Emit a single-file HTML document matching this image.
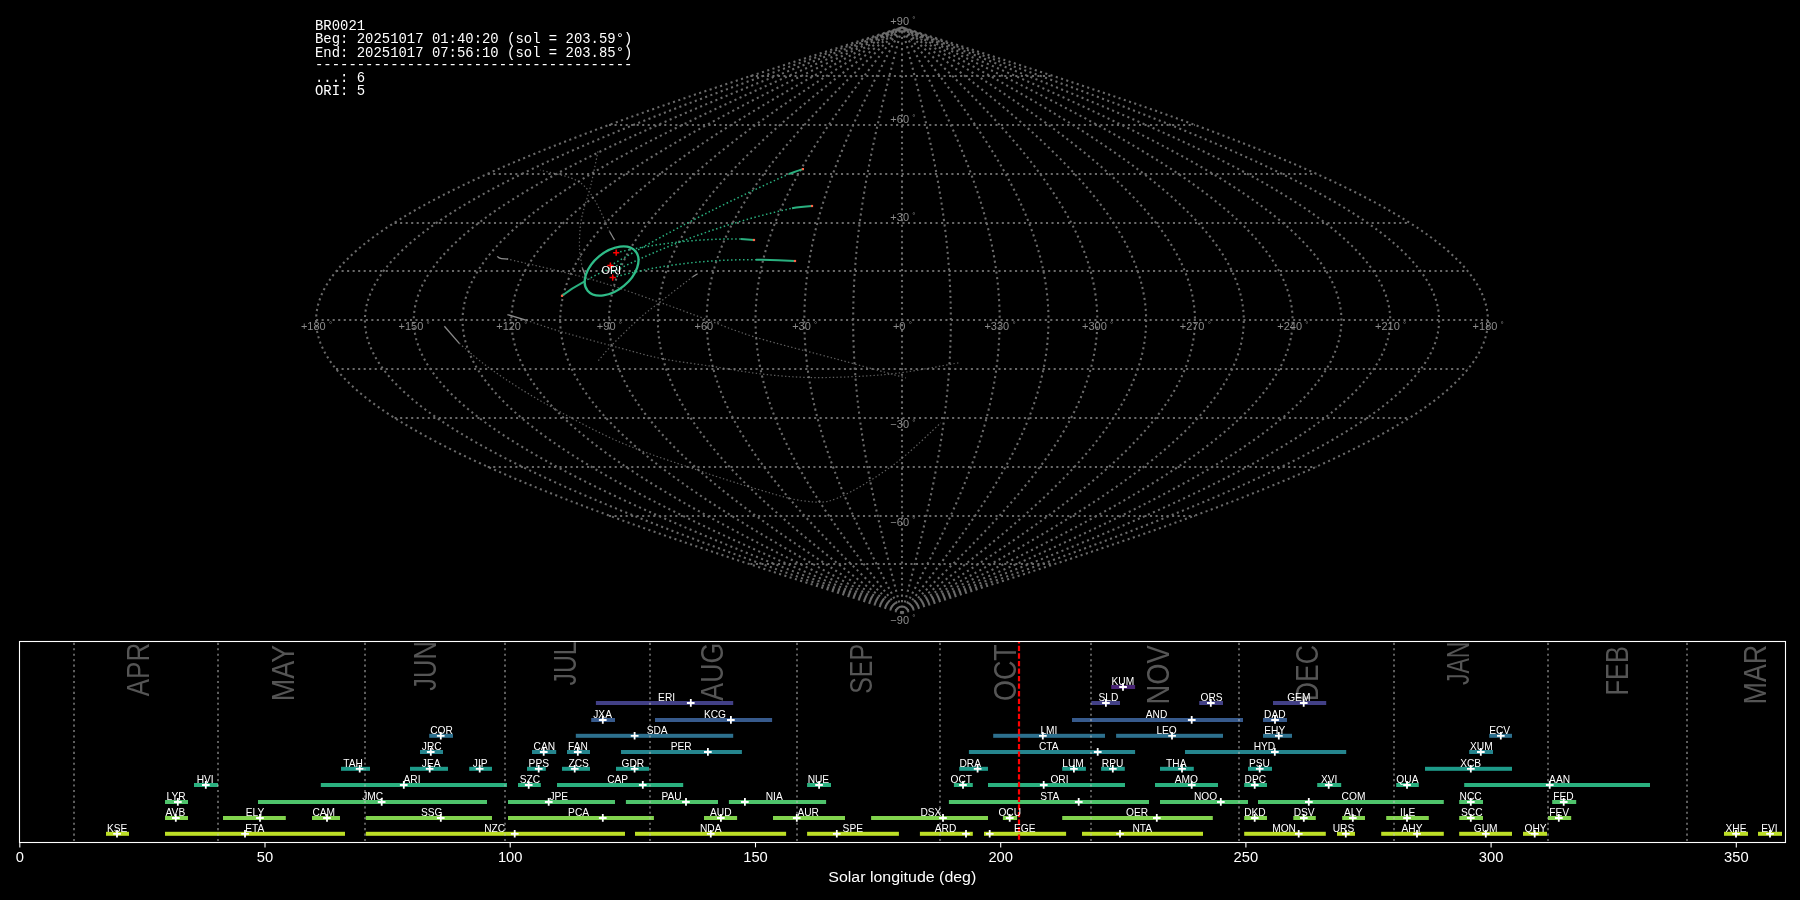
<!DOCTYPE html><html><head><meta charset="utf-8"><style>
html,body{margin:0;padding:0;background:#000;width:1800px;height:900px;overflow:hidden}
svg{display:block;will-change:transform}
.mono{font-family:"Liberation Mono",monospace}
text{font-family:"Liberation Sans",sans-serif}
</style></head><body>
<svg width="1800" height="900" viewBox="0 0 1800 900">
<rect width="1800" height="900" fill="#000"/>
<path d="M902.00,613.20 L907.11,611.57 L912.23,609.94 L917.34,608.32 L922.45,606.69 L927.56,605.06 L932.66,603.43 L937.77,601.81 L942.87,600.18 L947.97,598.55 L953.06,596.92 L958.16,595.30 L963.24,593.67 L968.33,592.04 L973.40,590.41 L978.48,588.79 L983.54,587.16 L988.60,585.53 L993.65,583.90 L998.70,582.28 L1003.74,580.65 L1008.77,579.02 L1013.79,577.39 L1018.81,575.77 L1023.82,574.14 L1028.81,572.51 L1033.80,570.88 L1038.78,569.26 L1043.74,567.63 L1048.70,566.00 L1053.64,564.38 L1058.57,562.75 L1063.50,561.12 L1068.40,559.49 L1073.30,557.87 L1078.18,556.24 L1083.05,554.61 L1087.91,552.98 L1092.75,551.36 L1097.58,549.73 L1102.39,548.10 L1107.19,546.47 L1111.97,544.85 L1116.73,543.22 L1121.48,541.59 L1126.21,539.96 L1130.93,538.34 L1135.63,536.71 L1140.31,535.08 L1144.97,533.45 L1149.61,531.83 L1154.24,530.20 L1158.84,528.57 L1163.43,526.94 L1167.99,525.32 L1172.54,523.69 L1177.06,522.06 L1181.57,520.43 L1186.05,518.81 L1190.51,517.18 L1194.95,515.55 L1199.37,513.92 L1203.76,512.29 L1208.13,510.67 L1212.48,509.04 L1216.80,507.41 L1221.10,505.78 L1225.38,504.16 L1229.63,502.53 L1233.86,500.90 L1238.06,499.27 L1242.23,497.65 L1246.38,496.02 L1250.51,494.39 L1254.60,492.76 L1258.67,491.14 L1262.72,489.51 L1266.73,487.88 L1270.72,486.25 L1274.68,484.63 L1278.61,483.00 L1282.51,481.37 L1286.38,479.75 L1290.23,478.12 L1294.04,476.49 L1297.83,474.86 L1301.58,473.24 L1305.31,471.61 L1309.00,469.98 L1312.66,468.35 L1316.29,466.73 L1319.89,465.10 L1323.46,463.47 L1327.00,461.84 L1330.50,460.22 L1333.97,458.59 L1337.41,456.96 L1340.81,455.33 L1344.18,453.70 L1347.52,452.08 L1350.83,450.45 L1354.09,448.82 L1357.33,447.19 L1360.53,445.57 L1363.70,443.94 L1366.83,442.31 L1369.92,440.69 L1372.98,439.06 L1376.00,437.43 L1378.99,435.80 L1381.94,434.18 L1384.86,432.55 L1387.73,430.92 L1390.57,429.29 L1393.38,427.66 L1396.14,426.04 L1398.87,424.41 L1401.56,422.78 L1404.21,421.15 L1406.83,419.53 L1409.40,417.90 L1411.94,416.27 L1414.44,414.64 L1416.90,413.02 L1419.32,411.39 L1421.70,409.76 L1424.04,408.13 L1426.34,406.51 L1428.60,404.88 L1430.82,403.25 L1433.01,401.62 L1435.15,400.00 L1437.25,398.37 L1439.31,396.74 L1441.32,395.12 L1443.30,393.49 L1445.24,391.86 L1447.13,390.23 L1448.98,388.61 L1450.80,386.98 L1452.57,385.35 L1454.29,383.72 L1455.98,382.10 L1457.62,380.47 L1459.22,378.84 L1460.78,377.21 L1462.30,375.58 L1463.77,373.96 L1465.20,372.33 L1466.59,370.70 L1467.94,369.07 L1469.24,367.45 L1470.50,365.82 L1471.71,364.19 L1472.88,362.56 L1474.01,360.94 L1475.10,359.31 L1476.14,357.68 L1477.14,356.06 L1478.09,354.43 L1479.00,352.80 L1479.86,351.17 L1480.69,349.55 L1481.46,347.92 L1482.20,346.29 L1482.89,344.66 L1483.53,343.04 L1484.13,341.41 L1484.69,339.78 L1485.20,338.15 L1485.67,336.52 L1486.09,334.90 L1486.47,333.27 L1486.81,331.64 L1487.10,330.01 L1487.34,328.39 L1487.54,326.76 L1487.70,325.13 L1487.81,323.50 L1487.88,321.88 L1487.90,320.25 L1487.88,318.62 L1487.81,317.00 L1487.70,315.37 L1487.54,313.74 L1487.34,312.11 L1487.10,310.49 L1486.81,308.86 L1486.47,307.23 L1486.09,305.60 L1485.67,303.98 L1485.20,302.35 L1484.69,300.72 L1484.13,299.09 L1483.53,297.46 L1482.89,295.84 L1482.20,294.21 L1481.46,292.58 L1480.69,290.95 L1479.86,289.33 L1479.00,287.70 L1478.09,286.07 L1477.14,284.44 L1476.14,282.82 L1475.10,281.19 L1474.01,279.56 L1472.88,277.94 L1471.71,276.31 L1470.50,274.68 L1469.24,273.05 L1467.94,271.43 L1466.59,269.80 L1465.20,268.17 L1463.77,266.54 L1462.30,264.92 L1460.78,263.29 L1459.22,261.66 L1457.62,260.03 L1455.98,258.40 L1454.29,256.78 L1452.57,255.15 L1450.80,253.52 L1448.98,251.89 L1447.13,250.27 L1445.24,248.64 L1443.30,247.01 L1441.32,245.38 L1439.31,243.76 L1437.25,242.13 L1435.15,240.50 L1433.01,238.88 L1430.82,237.25 L1428.60,235.62 L1426.34,233.99 L1424.04,232.37 L1421.70,230.74 L1419.32,229.11 L1416.90,227.48 L1414.44,225.86 L1411.94,224.23 L1409.40,222.60 L1406.83,220.97 L1404.21,219.34 L1401.56,217.72 L1398.87,216.09 L1396.14,214.46 L1393.38,212.84 L1390.57,211.21 L1387.73,209.58 L1384.86,207.95 L1381.94,206.32 L1378.99,204.70 L1376.00,203.07 L1372.98,201.44 L1369.92,199.81 L1366.83,198.19 L1363.70,196.56 L1360.53,194.93 L1357.33,193.31 L1354.09,191.68 L1350.83,190.05 L1347.52,188.42 L1344.18,186.80 L1340.81,185.17 L1337.41,183.54 L1333.97,181.91 L1330.50,180.28 L1327.00,178.66 L1323.46,177.03 L1319.89,175.40 L1316.29,173.78 L1312.66,172.15 L1309.00,170.52 L1305.31,168.89 L1301.58,167.27 L1297.83,165.64 L1294.04,164.01 L1290.23,162.38 L1286.38,160.75 L1282.51,159.13 L1278.61,157.50 L1274.68,155.87 L1270.72,154.25 L1266.73,152.62 L1262.72,150.99 L1258.67,149.36 L1254.60,147.74 L1250.51,146.11 L1246.38,144.48 L1242.23,142.85 L1238.06,141.22 L1233.86,139.60 L1229.63,137.97 L1225.38,136.34 L1221.10,134.72 L1216.80,133.09 L1212.48,131.46 L1208.13,129.83 L1203.76,128.21 L1199.37,126.58 L1194.95,124.95 L1190.51,123.32 L1186.05,121.69 L1181.57,120.07 L1177.06,118.44 L1172.54,116.81 L1167.99,115.19 L1163.43,113.56 L1158.84,111.93 L1154.24,110.30 L1149.61,108.68 L1144.97,107.05 L1140.31,105.42 L1135.63,103.79 L1130.93,102.17 L1126.21,100.54 L1121.48,98.91 L1116.73,97.28 L1111.97,95.66 L1107.19,94.03 L1102.39,92.40 L1097.58,90.77 L1092.75,89.15 L1087.91,87.52 L1083.05,85.89 L1078.18,84.26 L1073.30,82.64 L1068.40,81.01 L1063.50,79.38 L1058.57,77.75 L1053.64,76.12 L1048.70,74.50 L1043.74,72.87 L1038.78,71.24 L1033.80,69.62 L1028.81,67.99 L1023.82,66.36 L1018.81,64.73 L1013.79,63.11 L1008.77,61.48 L1003.74,59.85 L998.70,58.22 L993.65,56.60 L988.60,54.97 L983.54,53.34 L978.48,51.71 L973.40,50.09 L968.33,48.46 L963.24,46.83 L958.16,45.20 L953.06,43.57 L947.97,41.95 L942.87,40.32 L937.77,38.69 L932.66,37.06 L927.56,35.44 L922.45,33.81 L917.34,32.18 L912.23,30.56 L907.11,28.93 L902.00,27.30 M902.00,613.20 L906.69,611.57 L911.37,609.94 L916.06,608.32 L920.74,606.69 L925.43,605.06 L930.11,603.43 L934.79,601.81 L939.46,600.18 L944.14,598.55 L948.81,596.92 L953.48,595.30 L958.14,593.67 L962.80,592.04 L967.45,590.41 L972.10,588.79 L976.75,587.16 L981.38,585.53 L986.02,583.90 L990.64,582.28 L995.26,580.65 L999.87,579.02 L1004.48,577.39 L1009.08,575.77 L1013.66,574.14 L1018.24,572.51 L1022.82,570.88 L1027.38,569.26 L1031.93,567.63 L1036.47,566.00 L1041.01,564.38 L1045.53,562.75 L1050.04,561.12 L1054.54,559.49 L1059.03,557.87 L1063.50,556.24 L1067.97,554.61 L1072.42,552.98 L1076.85,551.36 L1081.28,549.73 L1085.69,548.10 L1090.09,546.47 L1094.47,544.85 L1098.84,543.22 L1103.19,541.59 L1107.53,539.96 L1111.85,538.34 L1116.16,536.71 L1120.45,535.08 L1124.72,533.45 L1128.98,531.83 L1133.22,530.20 L1137.44,528.57 L1141.64,526.94 L1145.83,525.32 L1149.99,523.69 L1154.14,522.06 L1158.27,520.43 L1162.38,518.81 L1166.47,517.18 L1170.54,515.55 L1174.59,513.92 L1178.61,512.29 L1182.62,510.67 L1186.61,509.04 L1190.57,507.41 L1194.51,505.78 L1198.43,504.16 L1202.33,502.53 L1206.20,500.90 L1210.05,499.27 L1213.88,497.65 L1217.68,496.02 L1221.46,494.39 L1225.22,492.76 L1228.95,491.14 L1232.66,489.51 L1236.34,487.88 L1239.99,486.25 L1243.62,484.63 L1247.23,483.00 L1250.80,481.37 L1254.35,479.75 L1257.88,478.12 L1261.37,476.49 L1264.84,474.86 L1268.28,473.24 L1271.70,471.61 L1275.08,469.98 L1278.44,468.35 L1281.77,466.73 L1285.07,465.10 L1288.34,463.47 L1291.58,461.84 L1294.79,460.22 L1297.97,458.59 L1301.12,456.96 L1304.25,455.33 L1307.34,453.70 L1310.40,452.08 L1313.42,450.45 L1316.42,448.82 L1319.39,447.19 L1322.32,445.57 L1325.22,443.94 L1328.09,442.31 L1330.93,440.69 L1333.73,439.06 L1336.50,437.43 L1339.24,435.80 L1341.95,434.18 L1344.62,432.55 L1347.26,430.92 L1349.86,429.29 L1352.43,427.66 L1354.96,426.04 L1357.47,424.41 L1359.93,422.78 L1362.36,421.15 L1364.76,419.53 L1367.12,417.90 L1369.45,416.27 L1371.74,414.64 L1373.99,413.02 L1376.21,411.39 L1378.39,409.76 L1380.54,408.13 L1382.65,406.51 L1384.72,404.88 L1386.76,403.25 L1388.76,401.62 L1390.72,400.00 L1392.64,398.37 L1394.53,396.74 L1396.38,395.12 L1398.19,393.49 L1399.97,391.86 L1401.70,390.23 L1403.40,388.61 L1405.06,386.98 L1406.69,385.35 L1408.27,383.72 L1409.81,382.10 L1411.32,380.47 L1412.79,378.84 L1414.22,377.21 L1415.61,375.58 L1416.96,373.96 L1418.27,372.33 L1419.54,370.70 L1420.77,369.07 L1421.97,367.45 L1423.12,365.82 L1424.24,364.19 L1425.31,362.56 L1426.34,360.94 L1427.34,359.31 L1428.29,357.68 L1429.21,356.06 L1430.08,354.43 L1430.92,352.80 L1431.71,351.17 L1432.46,349.55 L1433.18,347.92 L1433.85,346.29 L1434.48,344.66 L1435.07,343.04 L1435.62,341.41 L1436.13,339.78 L1436.60,338.15 L1437.03,336.52 L1437.42,334.90 L1437.77,333.27 L1438.07,331.64 L1438.34,330.01 L1438.56,328.39 L1438.75,326.76 L1438.89,325.13 L1438.99,323.50 L1439.05,321.88 L1439.07,320.25 L1439.05,318.62 L1438.99,317.00 L1438.89,315.37 L1438.75,313.74 L1438.56,312.11 L1438.34,310.49 L1438.07,308.86 L1437.77,307.23 L1437.42,305.60 L1437.03,303.98 L1436.60,302.35 L1436.13,300.72 L1435.62,299.09 L1435.07,297.46 L1434.48,295.84 L1433.85,294.21 L1433.18,292.58 L1432.46,290.95 L1431.71,289.33 L1430.92,287.70 L1430.08,286.07 L1429.21,284.44 L1428.29,282.82 L1427.34,281.19 L1426.34,279.56 L1425.31,277.94 L1424.24,276.31 L1423.12,274.68 L1421.97,273.05 L1420.77,271.43 L1419.54,269.80 L1418.27,268.17 L1416.96,266.54 L1415.61,264.92 L1414.22,263.29 L1412.79,261.66 L1411.32,260.03 L1409.81,258.40 L1408.27,256.78 L1406.69,255.15 L1405.06,253.52 L1403.40,251.89 L1401.70,250.27 L1399.97,248.64 L1398.19,247.01 L1396.38,245.38 L1394.53,243.76 L1392.64,242.13 L1390.72,240.50 L1388.76,238.88 L1386.76,237.25 L1384.72,235.62 L1382.65,233.99 L1380.54,232.37 L1378.39,230.74 L1376.21,229.11 L1373.99,227.48 L1371.74,225.86 L1369.45,224.23 L1367.12,222.60 L1364.76,220.97 L1362.36,219.34 L1359.93,217.72 L1357.47,216.09 L1354.96,214.46 L1352.43,212.84 L1349.86,211.21 L1347.26,209.58 L1344.62,207.95 L1341.95,206.32 L1339.24,204.70 L1336.50,203.07 L1333.73,201.44 L1330.93,199.81 L1328.09,198.19 L1325.22,196.56 L1322.32,194.93 L1319.39,193.31 L1316.42,191.68 L1313.42,190.05 L1310.40,188.42 L1307.34,186.80 L1304.25,185.17 L1301.12,183.54 L1297.97,181.91 L1294.79,180.28 L1291.58,178.66 L1288.34,177.03 L1285.07,175.40 L1281.77,173.78 L1278.44,172.15 L1275.08,170.52 L1271.70,168.89 L1268.28,167.27 L1264.84,165.64 L1261.37,164.01 L1257.88,162.38 L1254.35,160.75 L1250.80,159.13 L1247.23,157.50 L1243.62,155.87 L1239.99,154.25 L1236.34,152.62 L1232.66,150.99 L1228.95,149.36 L1225.22,147.74 L1221.46,146.11 L1217.68,144.48 L1213.88,142.85 L1210.05,141.22 L1206.20,139.60 L1202.33,137.97 L1198.43,136.34 L1194.51,134.72 L1190.57,133.09 L1186.61,131.46 L1182.62,129.83 L1178.61,128.21 L1174.59,126.58 L1170.54,124.95 L1166.47,123.32 L1162.38,121.69 L1158.27,120.07 L1154.14,118.44 L1149.99,116.81 L1145.83,115.19 L1141.64,113.56 L1137.44,111.93 L1133.22,110.30 L1128.98,108.68 L1124.72,107.05 L1120.45,105.42 L1116.16,103.79 L1111.85,102.17 L1107.53,100.54 L1103.19,98.91 L1098.84,97.28 L1094.47,95.66 L1090.09,94.03 L1085.69,92.40 L1081.28,90.77 L1076.85,89.15 L1072.42,87.52 L1067.97,85.89 L1063.50,84.26 L1059.03,82.64 L1054.54,81.01 L1050.04,79.38 L1045.53,77.75 L1041.01,76.12 L1036.47,74.50 L1031.93,72.87 L1027.38,71.24 L1022.82,69.62 L1018.24,67.99 L1013.66,66.36 L1009.08,64.73 L1004.48,63.11 L999.87,61.48 L995.26,59.85 L990.64,58.22 L986.02,56.60 L981.38,54.97 L976.75,53.34 L972.10,51.71 L967.45,50.09 L962.80,48.46 L958.14,46.83 L953.48,45.20 L948.81,43.57 L944.14,41.95 L939.46,40.32 L934.79,38.69 L930.11,37.06 L925.43,35.44 L920.74,33.81 L916.06,32.18 L911.37,30.56 L906.69,28.93 L902.00,27.30 M902.00,613.20 L906.26,611.57 L910.52,609.94 L914.78,608.32 L919.04,606.69 L923.30,605.06 L927.55,603.43 L931.81,601.81 L936.06,600.18 L940.31,598.55 L944.55,596.92 L948.80,595.30 L953.04,593.67 L957.27,592.04 L961.50,590.41 L965.73,588.79 L969.95,587.16 L974.17,585.53 L978.38,583.90 L982.58,582.28 L986.78,580.65 L990.98,579.02 L995.16,577.39 L999.34,575.77 L1003.51,574.14 L1007.68,572.51 L1011.83,570.88 L1015.98,569.26 L1020.12,567.63 L1024.25,566.00 L1028.37,564.38 L1032.48,562.75 L1036.58,561.12 L1040.67,559.49 L1044.75,557.87 L1048.82,556.24 L1052.88,554.61 L1056.92,552.98 L1060.96,551.36 L1064.98,549.73 L1068.99,548.10 L1072.99,546.47 L1076.97,544.85 L1080.94,543.22 L1084.90,541.59 L1088.85,539.96 L1092.77,538.34 L1096.69,536.71 L1100.59,535.08 L1104.47,533.45 L1108.34,531.83 L1112.20,530.20 L1116.03,528.57 L1119.86,526.94 L1123.66,525.32 L1127.45,523.69 L1131.22,522.06 L1134.97,520.43 L1138.71,518.81 L1142.43,517.18 L1146.12,515.55 L1149.81,513.92 L1153.47,512.29 L1157.11,510.67 L1160.73,509.04 L1164.34,507.41 L1167.92,505.78 L1171.48,504.16 L1175.03,502.53 L1178.55,500.90 L1182.05,499.27 L1185.53,497.65 L1188.99,496.02 L1192.42,494.39 L1195.84,492.76 L1199.23,491.14 L1202.60,489.51 L1205.94,487.88 L1209.27,486.25 L1212.57,484.63 L1215.84,483.00 L1219.09,481.37 L1222.32,479.75 L1225.52,478.12 L1228.70,476.49 L1231.86,474.86 L1234.99,473.24 L1238.09,471.61 L1241.17,469.98 L1244.22,468.35 L1247.24,466.73 L1250.24,465.10 L1253.22,463.47 L1256.16,461.84 L1259.08,460.22 L1261.98,458.59 L1264.84,456.96 L1267.68,455.33 L1270.49,453.70 L1273.27,452.08 L1276.02,450.45 L1278.75,448.82 L1281.44,447.19 L1284.11,445.57 L1286.75,443.94 L1289.35,442.31 L1291.93,440.69 L1294.48,439.06 L1297.00,437.43 L1299.49,435.80 L1301.95,434.18 L1304.38,432.55 L1306.78,430.92 L1309.14,429.29 L1311.48,427.66 L1313.79,426.04 L1316.06,424.41 L1318.30,422.78 L1320.51,421.15 L1322.69,419.53 L1324.84,417.90 L1326.95,416.27 L1329.03,414.64 L1331.08,413.02 L1333.10,411.39 L1335.08,409.76 L1337.03,408.13 L1338.95,406.51 L1340.84,404.88 L1342.69,403.25 L1344.50,401.62 L1346.29,400.00 L1348.04,398.37 L1349.75,396.74 L1351.44,395.12 L1353.08,393.49 L1354.70,391.86 L1356.28,390.23 L1357.82,388.61 L1359.33,386.98 L1360.80,385.35 L1362.24,383.72 L1363.65,382.10 L1365.02,380.47 L1366.35,378.84 L1367.65,377.21 L1368.92,375.58 L1370.14,373.96 L1371.34,372.33 L1372.49,370.70 L1373.61,369.07 L1374.70,367.45 L1375.75,365.82 L1376.76,364.19 L1377.74,362.56 L1378.68,360.94 L1379.58,359.31 L1380.45,357.68 L1381.28,356.06 L1382.07,354.43 L1382.83,352.80 L1383.55,351.17 L1384.24,349.55 L1384.89,347.92 L1385.50,346.29 L1386.07,344.66 L1386.61,343.04 L1387.11,341.41 L1387.58,339.78 L1388.00,338.15 L1388.39,336.52 L1388.74,334.90 L1389.06,333.27 L1389.34,331.64 L1389.58,330.01 L1389.79,328.39 L1389.95,326.76 L1390.08,325.13 L1390.18,323.50 L1390.23,321.88 L1390.25,320.25 L1390.23,318.62 L1390.18,317.00 L1390.08,315.37 L1389.95,313.74 L1389.79,312.11 L1389.58,310.49 L1389.34,308.86 L1389.06,307.23 L1388.74,305.60 L1388.39,303.98 L1388.00,302.35 L1387.58,300.72 L1387.11,299.09 L1386.61,297.46 L1386.07,295.84 L1385.50,294.21 L1384.89,292.58 L1384.24,290.95 L1383.55,289.33 L1382.83,287.70 L1382.07,286.07 L1381.28,284.44 L1380.45,282.82 L1379.58,281.19 L1378.68,279.56 L1377.74,277.94 L1376.76,276.31 L1375.75,274.68 L1374.70,273.05 L1373.61,271.43 L1372.49,269.80 L1371.34,268.17 L1370.14,266.54 L1368.92,264.92 L1367.65,263.29 L1366.35,261.66 L1365.02,260.03 L1363.65,258.40 L1362.24,256.78 L1360.80,255.15 L1359.33,253.52 L1357.82,251.89 L1356.28,250.27 L1354.70,248.64 L1353.08,247.01 L1351.44,245.38 L1349.75,243.76 L1348.04,242.13 L1346.29,240.50 L1344.50,238.88 L1342.69,237.25 L1340.84,235.62 L1338.95,233.99 L1337.03,232.37 L1335.08,230.74 L1333.10,229.11 L1331.08,227.48 L1329.03,225.86 L1326.95,224.23 L1324.84,222.60 L1322.69,220.97 L1320.51,219.34 L1318.30,217.72 L1316.06,216.09 L1313.79,214.46 L1311.48,212.84 L1309.14,211.21 L1306.78,209.58 L1304.38,207.95 L1301.95,206.32 L1299.49,204.70 L1297.00,203.07 L1294.48,201.44 L1291.93,199.81 L1289.35,198.19 L1286.75,196.56 L1284.11,194.93 L1281.44,193.31 L1278.75,191.68 L1276.02,190.05 L1273.27,188.42 L1270.49,186.80 L1267.68,185.17 L1264.84,183.54 L1261.98,181.91 L1259.08,180.28 L1256.16,178.66 L1253.22,177.03 L1250.24,175.40 L1247.24,173.78 L1244.22,172.15 L1241.17,170.52 L1238.09,168.89 L1234.99,167.27 L1231.86,165.64 L1228.70,164.01 L1225.52,162.38 L1222.32,160.75 L1219.09,159.13 L1215.84,157.50 L1212.57,155.87 L1209.27,154.25 L1205.94,152.62 L1202.60,150.99 L1199.23,149.36 L1195.84,147.74 L1192.42,146.11 L1188.99,144.48 L1185.53,142.85 L1182.05,141.22 L1178.55,139.60 L1175.03,137.97 L1171.48,136.34 L1167.92,134.72 L1164.34,133.09 L1160.73,131.46 L1157.11,129.83 L1153.47,128.21 L1149.81,126.58 L1146.12,124.95 L1142.43,123.32 L1138.71,121.69 L1134.97,120.07 L1131.22,118.44 L1127.45,116.81 L1123.66,115.19 L1119.86,113.56 L1116.03,111.93 L1112.20,110.30 L1108.34,108.68 L1104.47,107.05 L1100.59,105.42 L1096.69,103.79 L1092.77,102.17 L1088.85,100.54 L1084.90,98.91 L1080.94,97.28 L1076.97,95.66 L1072.99,94.03 L1068.99,92.40 L1064.98,90.77 L1060.96,89.15 L1056.92,87.52 L1052.88,85.89 L1048.82,84.26 L1044.75,82.64 L1040.67,81.01 L1036.58,79.38 L1032.48,77.75 L1028.37,76.12 L1024.25,74.50 L1020.12,72.87 L1015.98,71.24 L1011.83,69.62 L1007.68,67.99 L1003.51,66.36 L999.34,64.73 L995.16,63.11 L990.98,61.48 L986.78,59.85 L982.58,58.22 L978.38,56.60 L974.17,54.97 L969.95,53.34 L965.73,51.71 L961.50,50.09 L957.27,48.46 L953.04,46.83 L948.80,45.20 L944.55,43.57 L940.31,41.95 L936.06,40.32 L931.81,38.69 L927.55,37.06 L923.30,35.44 L919.04,33.81 L914.78,32.18 L910.52,30.56 L906.26,28.93 L902.00,27.30 M902.00,613.20 L905.83,611.57 L909.67,609.94 L913.50,608.32 L917.34,606.69 L921.17,605.06 L925.00,603.43 L928.83,601.81 L932.65,600.18 L936.48,598.55 L940.30,596.92 L944.12,595.30 L947.93,593.67 L951.74,592.04 L955.55,590.41 L959.36,588.79 L963.16,587.16 L966.95,585.53 L970.74,583.90 L974.53,582.28 L978.31,580.65 L982.08,579.02 L985.85,577.39 L989.61,575.77 L993.36,574.14 L997.11,572.51 L1000.85,570.88 L1004.58,569.26 L1008.31,567.63 L1012.02,566.00 L1015.73,564.38 L1019.43,562.75 L1023.12,561.12 L1026.80,559.49 L1030.48,557.87 L1034.14,556.24 L1037.79,554.61 L1041.43,552.98 L1045.06,551.36 L1048.68,549.73 L1052.29,548.10 L1055.89,546.47 L1059.48,544.85 L1063.05,543.22 L1066.61,541.59 L1070.16,539.96 L1073.70,538.34 L1077.22,536.71 L1080.73,535.08 L1084.23,533.45 L1087.71,531.83 L1091.18,530.20 L1094.63,528.57 L1098.07,526.94 L1101.49,525.32 L1104.90,523.69 L1108.30,522.06 L1111.68,520.43 L1115.04,518.81 L1118.38,517.18 L1121.71,515.55 L1125.03,513.92 L1128.32,512.29 L1131.60,510.67 L1134.86,509.04 L1138.10,507.41 L1141.33,505.78 L1144.53,504.16 L1147.72,502.53 L1150.89,500.90 L1154.04,499.27 L1157.18,497.65 L1160.29,496.02 L1163.38,494.39 L1166.45,492.76 L1169.50,491.14 L1172.54,489.51 L1175.55,487.88 L1178.54,486.25 L1181.51,484.63 L1184.46,483.00 L1187.38,481.37 L1190.29,479.75 L1193.17,478.12 L1196.03,476.49 L1198.87,474.86 L1201.69,473.24 L1204.48,471.61 L1207.25,469.98 L1210.00,468.35 L1212.72,466.73 L1215.42,465.10 L1218.10,463.47 L1220.75,461.84 L1223.38,460.22 L1225.98,458.59 L1228.56,456.96 L1231.11,455.33 L1233.64,453.70 L1236.14,452.08 L1238.62,450.45 L1241.07,448.82 L1243.50,447.19 L1245.90,445.57 L1248.27,443.94 L1250.62,442.31 L1252.94,440.69 L1255.23,439.06 L1257.50,437.43 L1259.74,435.80 L1261.96,434.18 L1264.14,432.55 L1266.30,430.92 L1268.43,429.29 L1270.53,427.66 L1272.61,426.04 L1274.65,424.41 L1276.67,422.78 L1278.66,421.15 L1280.62,419.53 L1282.55,417.90 L1284.46,416.27 L1286.33,414.64 L1288.17,413.02 L1289.99,411.39 L1291.77,409.76 L1293.53,408.13 L1295.26,406.51 L1296.95,404.88 L1298.62,403.25 L1300.25,401.62 L1301.86,400.00 L1303.43,398.37 L1304.98,396.74 L1306.49,395.12 L1307.98,393.49 L1309.43,391.86 L1310.85,390.23 L1312.24,388.61 L1313.60,386.98 L1314.92,385.35 L1316.22,383.72 L1317.48,382.10 L1318.72,380.47 L1319.92,378.84 L1321.09,377.21 L1322.22,375.58 L1323.33,373.96 L1324.40,372.33 L1325.44,370.70 L1326.45,369.07 L1327.43,367.45 L1328.37,365.82 L1329.28,364.19 L1330.16,362.56 L1331.01,360.94 L1331.82,359.31 L1332.60,357.68 L1333.35,356.06 L1334.07,354.43 L1334.75,352.80 L1335.40,351.17 L1336.01,349.55 L1336.60,347.92 L1337.15,346.29 L1337.67,344.66 L1338.15,343.04 L1338.60,341.41 L1339.02,339.78 L1339.40,338.15 L1339.75,336.52 L1340.07,334.90 L1340.35,333.27 L1340.61,331.64 L1340.82,330.01 L1341.01,328.39 L1341.16,326.76 L1341.27,325.13 L1341.36,323.50 L1341.41,321.88 L1341.42,320.25 L1341.41,318.62 L1341.36,317.00 L1341.27,315.37 L1341.16,313.74 L1341.01,312.11 L1340.82,310.49 L1340.61,308.86 L1340.35,307.23 L1340.07,305.60 L1339.75,303.98 L1339.40,302.35 L1339.02,300.72 L1338.60,299.09 L1338.15,297.46 L1337.67,295.84 L1337.15,294.21 L1336.60,292.58 L1336.01,290.95 L1335.40,289.33 L1334.75,287.70 L1334.07,286.07 L1333.35,284.44 L1332.60,282.82 L1331.82,281.19 L1331.01,279.56 L1330.16,277.94 L1329.28,276.31 L1328.37,274.68 L1327.43,273.05 L1326.45,271.43 L1325.44,269.80 L1324.40,268.17 L1323.33,266.54 L1322.22,264.92 L1321.09,263.29 L1319.92,261.66 L1318.72,260.03 L1317.48,258.40 L1316.22,256.78 L1314.92,255.15 L1313.60,253.52 L1312.24,251.89 L1310.85,250.27 L1309.43,248.64 L1307.98,247.01 L1306.49,245.38 L1304.98,243.76 L1303.43,242.13 L1301.86,240.50 L1300.25,238.88 L1298.62,237.25 L1296.95,235.62 L1295.26,233.99 L1293.53,232.37 L1291.77,230.74 L1289.99,229.11 L1288.17,227.48 L1286.33,225.86 L1284.46,224.23 L1282.55,222.60 L1280.62,220.97 L1278.66,219.34 L1276.67,217.72 L1274.65,216.09 L1272.61,214.46 L1270.53,212.84 L1268.43,211.21 L1266.30,209.58 L1264.14,207.95 L1261.96,206.32 L1259.74,204.70 L1257.50,203.07 L1255.23,201.44 L1252.94,199.81 L1250.62,198.19 L1248.27,196.56 L1245.90,194.93 L1243.50,193.31 L1241.07,191.68 L1238.62,190.05 L1236.14,188.42 L1233.64,186.80 L1231.11,185.17 L1228.56,183.54 L1225.98,181.91 L1223.38,180.28 L1220.75,178.66 L1218.10,177.03 L1215.42,175.40 L1212.72,173.78 L1210.00,172.15 L1207.25,170.52 L1204.48,168.89 L1201.69,167.27 L1198.87,165.64 L1196.03,164.01 L1193.17,162.38 L1190.29,160.75 L1187.38,159.13 L1184.46,157.50 L1181.51,155.87 L1178.54,154.25 L1175.55,152.62 L1172.54,150.99 L1169.50,149.36 L1166.45,147.74 L1163.38,146.11 L1160.29,144.48 L1157.18,142.85 L1154.04,141.22 L1150.89,139.60 L1147.72,137.97 L1144.53,136.34 L1141.33,134.72 L1138.10,133.09 L1134.86,131.46 L1131.60,129.83 L1128.32,128.21 L1125.03,126.58 L1121.71,124.95 L1118.38,123.32 L1115.04,121.69 L1111.68,120.07 L1108.30,118.44 L1104.90,116.81 L1101.49,115.19 L1098.07,113.56 L1094.63,111.93 L1091.18,110.30 L1087.71,108.68 L1084.23,107.05 L1080.73,105.42 L1077.22,103.79 L1073.70,102.17 L1070.16,100.54 L1066.61,98.91 L1063.05,97.28 L1059.48,95.66 L1055.89,94.03 L1052.29,92.40 L1048.68,90.77 L1045.06,89.15 L1041.43,87.52 L1037.79,85.89 L1034.14,84.26 L1030.48,82.64 L1026.80,81.01 L1023.12,79.38 L1019.43,77.75 L1015.73,76.12 L1012.02,74.50 L1008.31,72.87 L1004.58,71.24 L1000.85,69.62 L997.11,67.99 L993.36,66.36 L989.61,64.73 L985.85,63.11 L982.08,61.48 L978.31,59.85 L974.53,58.22 L970.74,56.60 L966.95,54.97 L963.16,53.34 L959.36,51.71 L955.55,50.09 L951.74,48.46 L947.93,46.83 L944.12,45.20 L940.30,43.57 L936.48,41.95 L932.65,40.32 L928.83,38.69 L925.00,37.06 L921.17,35.44 L917.34,33.81 L913.50,32.18 L909.67,30.56 L905.83,28.93 L902.00,27.30 M902.00,613.20 L905.41,611.57 L908.82,609.94 L912.22,608.32 L915.63,606.69 L919.04,605.06 L922.44,603.43 L925.85,601.81 L929.25,600.18 L932.65,598.55 L936.04,596.92 L939.44,595.30 L942.83,593.67 L946.22,592.04 L949.60,590.41 L952.98,588.79 L956.36,587.16 L959.73,585.53 L963.10,583.90 L966.47,582.28 L969.83,580.65 L973.18,579.02 L976.53,577.39 L979.87,575.77 L983.21,574.14 L986.54,572.51 L989.87,570.88 L993.18,569.26 L996.49,567.63 L999.80,566.00 L1003.09,564.38 L1006.38,562.75 L1009.66,561.12 L1012.94,559.49 L1016.20,557.87 L1019.46,556.24 L1022.70,554.61 L1025.94,552.98 L1029.17,551.36 L1032.38,549.73 L1035.59,548.10 L1038.79,546.47 L1041.98,544.85 L1045.16,543.22 L1048.32,541.59 L1051.48,539.96 L1054.62,538.34 L1057.75,536.71 L1060.87,535.08 L1063.98,533.45 L1067.07,531.83 L1070.16,530.20 L1073.23,528.57 L1076.28,526.94 L1079.33,525.32 L1082.36,523.69 L1085.38,522.06 L1088.38,520.43 L1091.37,518.81 L1094.34,517.18 L1097.30,515.55 L1100.24,513.92 L1103.17,512.29 L1106.09,510.67 L1108.99,509.04 L1111.87,507.41 L1114.74,505.78 L1117.59,504.16 L1120.42,502.53 L1123.24,500.90 L1126.04,499.27 L1128.82,497.65 L1131.59,496.02 L1134.34,494.39 L1137.07,492.76 L1139.78,491.14 L1142.48,489.51 L1145.15,487.88 L1147.81,486.25 L1150.45,484.63 L1153.07,483.00 L1155.67,481.37 L1158.26,479.75 L1160.82,478.12 L1163.36,476.49 L1165.89,474.86 L1168.39,473.24 L1170.87,471.61 L1173.33,469.98 L1175.78,468.35 L1178.20,466.73 L1180.60,465.10 L1182.97,463.47 L1185.33,461.84 L1187.67,460.22 L1189.98,458.59 L1192.27,456.96 L1194.54,455.33 L1196.79,453.70 L1199.01,452.08 L1201.22,450.45 L1203.40,448.82 L1205.55,447.19 L1207.69,445.57 L1209.80,443.94 L1211.88,442.31 L1213.95,440.69 L1215.99,439.06 L1218.00,437.43 L1219.99,435.80 L1221.96,434.18 L1223.90,432.55 L1225.82,430.92 L1227.72,429.29 L1229.58,427.66 L1231.43,426.04 L1233.25,424.41 L1235.04,422.78 L1236.81,421.15 L1238.55,419.53 L1240.27,417.90 L1241.96,416.27 L1243.63,414.64 L1245.27,413.02 L1246.88,411.39 L1248.47,409.76 L1250.03,408.13 L1251.56,406.51 L1253.07,404.88 L1254.55,403.25 L1256.00,401.62 L1257.43,400.00 L1258.83,398.37 L1260.20,396.74 L1261.55,395.12 L1262.87,393.49 L1264.16,391.86 L1265.42,390.23 L1266.66,388.61 L1267.86,386.98 L1269.04,385.35 L1270.20,383.72 L1271.32,382.10 L1272.42,380.47 L1273.48,378.84 L1274.52,377.21 L1275.53,375.58 L1276.51,373.96 L1277.47,372.33 L1278.39,370.70 L1279.29,369.07 L1280.16,367.45 L1281.00,365.82 L1281.81,364.19 L1282.59,362.56 L1283.34,360.94 L1284.06,359.31 L1284.76,357.68 L1285.42,356.06 L1286.06,354.43 L1286.67,352.80 L1287.24,351.17 L1287.79,349.55 L1288.31,347.92 L1288.80,346.29 L1289.26,344.66 L1289.69,343.04 L1290.09,341.41 L1290.46,339.78 L1290.80,338.15 L1291.11,336.52 L1291.40,334.90 L1291.65,333.27 L1291.87,331.64 L1292.06,330.01 L1292.23,328.39 L1292.36,326.76 L1292.47,325.13 L1292.54,323.50 L1292.59,321.88 L1292.60,320.25 L1292.59,318.62 L1292.54,317.00 L1292.47,315.37 L1292.36,313.74 L1292.23,312.11 L1292.06,310.49 L1291.87,308.86 L1291.65,307.23 L1291.40,305.60 L1291.11,303.98 L1290.80,302.35 L1290.46,300.72 L1290.09,299.09 L1289.69,297.46 L1289.26,295.84 L1288.80,294.21 L1288.31,292.58 L1287.79,290.95 L1287.24,289.33 L1286.67,287.70 L1286.06,286.07 L1285.42,284.44 L1284.76,282.82 L1284.06,281.19 L1283.34,279.56 L1282.59,277.94 L1281.81,276.31 L1281.00,274.68 L1280.16,273.05 L1279.29,271.43 L1278.39,269.80 L1277.47,268.17 L1276.51,266.54 L1275.53,264.92 L1274.52,263.29 L1273.48,261.66 L1272.42,260.03 L1271.32,258.40 L1270.20,256.78 L1269.04,255.15 L1267.86,253.52 L1266.66,251.89 L1265.42,250.27 L1264.16,248.64 L1262.87,247.01 L1261.55,245.38 L1260.20,243.76 L1258.83,242.13 L1257.43,240.50 L1256.00,238.88 L1254.55,237.25 L1253.07,235.62 L1251.56,233.99 L1250.03,232.37 L1248.47,230.74 L1246.88,229.11 L1245.27,227.48 L1243.63,225.86 L1241.96,224.23 L1240.27,222.60 L1238.55,220.97 L1236.81,219.34 L1235.04,217.72 L1233.25,216.09 L1231.43,214.46 L1229.58,212.84 L1227.72,211.21 L1225.82,209.58 L1223.90,207.95 L1221.96,206.32 L1219.99,204.70 L1218.00,203.07 L1215.99,201.44 L1213.95,199.81 L1211.88,198.19 L1209.80,196.56 L1207.69,194.93 L1205.55,193.31 L1203.40,191.68 L1201.22,190.05 L1199.01,188.42 L1196.79,186.80 L1194.54,185.17 L1192.27,183.54 L1189.98,181.91 L1187.67,180.28 L1185.33,178.66 L1182.97,177.03 L1180.60,175.40 L1178.20,173.78 L1175.78,172.15 L1173.33,170.52 L1170.87,168.89 L1168.39,167.27 L1165.89,165.64 L1163.36,164.01 L1160.82,162.38 L1158.26,160.75 L1155.67,159.13 L1153.07,157.50 L1150.45,155.87 L1147.81,154.25 L1145.15,152.62 L1142.48,150.99 L1139.78,149.36 L1137.07,147.74 L1134.34,146.11 L1131.59,144.48 L1128.82,142.85 L1126.04,141.22 L1123.24,139.60 L1120.42,137.97 L1117.59,136.34 L1114.74,134.72 L1111.87,133.09 L1108.99,131.46 L1106.09,129.83 L1103.17,128.21 L1100.24,126.58 L1097.30,124.95 L1094.34,123.32 L1091.37,121.69 L1088.38,120.07 L1085.38,118.44 L1082.36,116.81 L1079.33,115.19 L1076.28,113.56 L1073.23,111.93 L1070.16,110.30 L1067.07,108.68 L1063.98,107.05 L1060.87,105.42 L1057.75,103.79 L1054.62,102.17 L1051.48,100.54 L1048.32,98.91 L1045.16,97.28 L1041.98,95.66 L1038.79,94.03 L1035.59,92.40 L1032.38,90.77 L1029.17,89.15 L1025.94,87.52 L1022.70,85.89 L1019.46,84.26 L1016.20,82.64 L1012.94,81.01 L1009.66,79.38 L1006.38,77.75 L1003.09,76.12 L999.80,74.50 L996.49,72.87 L993.18,71.24 L989.87,69.62 L986.54,67.99 L983.21,66.36 L979.87,64.73 L976.53,63.11 L973.18,61.48 L969.83,59.85 L966.47,58.22 L963.10,56.60 L959.73,54.97 L956.36,53.34 L952.98,51.71 L949.60,50.09 L946.22,48.46 L942.83,46.83 L939.44,45.20 L936.04,43.57 L932.65,41.95 L929.25,40.32 L925.85,38.69 L922.44,37.06 L919.04,35.44 L915.63,33.81 L912.22,32.18 L908.82,30.56 L905.41,28.93 L902.00,27.30 M902.00,613.20 L904.98,611.57 L907.96,609.94 L910.95,608.32 L913.93,606.69 L916.91,605.06 L919.89,603.43 L922.86,601.81 L925.84,600.18 L928.82,598.55 L931.79,596.92 L934.76,595.30 L937.73,593.67 L940.69,592.04 L943.65,590.41 L946.61,588.79 L949.57,587.16 L952.52,585.53 L955.47,583.90 L958.41,582.28 L961.35,580.65 L964.28,579.02 L967.21,577.39 L970.14,575.77 L973.06,574.14 L975.97,572.51 L978.88,570.88 L981.79,569.26 L984.68,567.63 L987.57,566.00 L990.46,564.38 L993.34,562.75 L996.21,561.12 L999.07,559.49 L1001.93,557.87 L1004.77,556.24 L1007.61,554.61 L1010.45,552.98 L1013.27,551.36 L1016.09,549.73 L1018.89,548.10 L1021.69,546.47 L1024.48,544.85 L1027.26,543.22 L1030.03,541.59 L1032.79,539.96 L1035.54,538.34 L1038.28,536.71 L1041.01,535.08 L1043.73,533.45 L1046.44,531.83 L1049.14,530.20 L1051.82,528.57 L1054.50,526.94 L1057.16,525.32 L1059.81,523.69 L1062.45,522.06 L1065.08,520.43 L1067.70,518.81 L1070.30,517.18 L1072.89,515.55 L1075.46,513.92 L1078.03,512.29 L1080.58,510.67 L1083.11,509.04 L1085.64,507.41 L1088.14,505.78 L1090.64,504.16 L1093.12,502.53 L1095.58,500.90 L1098.03,499.27 L1100.47,497.65 L1102.89,496.02 L1105.30,494.39 L1107.69,492.76 L1110.06,491.14 L1112.42,489.51 L1114.76,487.88 L1117.09,486.25 L1119.40,484.63 L1121.69,483.00 L1123.97,481.37 L1126.22,479.75 L1128.47,478.12 L1130.69,476.49 L1132.90,474.86 L1135.09,473.24 L1137.26,471.61 L1139.42,469.98 L1141.55,468.35 L1143.67,466.73 L1145.77,465.10 L1147.85,463.47 L1149.91,461.84 L1151.96,460.22 L1153.98,458.59 L1155.99,456.96 L1157.97,455.33 L1159.94,453.70 L1161.89,452.08 L1163.81,450.45 L1165.72,448.82 L1167.61,447.19 L1169.48,445.57 L1171.32,443.94 L1173.15,442.31 L1174.95,440.69 L1176.74,439.06 L1178.50,437.43 L1180.24,435.80 L1181.97,434.18 L1183.67,432.55 L1185.34,430.92 L1187.00,429.29 L1188.64,427.66 L1190.25,426.04 L1191.84,424.41 L1193.41,422.78 L1194.96,421.15 L1196.48,419.53 L1197.99,417.90 L1199.47,416.27 L1200.92,414.64 L1202.36,413.02 L1203.77,411.39 L1205.16,409.76 L1206.52,408.13 L1207.87,406.51 L1209.19,404.88 L1210.48,403.25 L1211.75,401.62 L1213.00,400.00 L1214.23,398.37 L1215.43,396.74 L1216.61,395.12 L1217.76,393.49 L1218.89,391.86 L1219.99,390.23 L1221.07,388.61 L1222.13,386.98 L1223.16,385.35 L1224.17,383.72 L1225.15,382.10 L1226.11,380.47 L1227.05,378.84 L1227.96,377.21 L1228.84,375.58 L1229.70,373.96 L1230.54,372.33 L1231.34,370.70 L1232.13,369.07 L1232.89,367.45 L1233.62,365.82 L1234.33,364.19 L1235.02,362.56 L1235.67,360.94 L1236.31,359.31 L1236.91,357.68 L1237.50,356.06 L1238.05,354.43 L1238.58,352.80 L1239.09,351.17 L1239.57,349.55 L1240.02,347.92 L1240.45,346.29 L1240.85,344.66 L1241.23,343.04 L1241.58,341.41 L1241.90,339.78 L1242.20,338.15 L1242.47,336.52 L1242.72,334.90 L1242.94,333.27 L1243.14,331.64 L1243.31,330.01 L1243.45,328.39 L1243.57,326.76 L1243.66,325.13 L1243.72,323.50 L1243.76,321.88 L1243.78,320.25 L1243.76,318.62 L1243.72,317.00 L1243.66,315.37 L1243.57,313.74 L1243.45,312.11 L1243.31,310.49 L1243.14,308.86 L1242.94,307.23 L1242.72,305.60 L1242.47,303.98 L1242.20,302.35 L1241.90,300.72 L1241.58,299.09 L1241.23,297.46 L1240.85,295.84 L1240.45,294.21 L1240.02,292.58 L1239.57,290.95 L1239.09,289.33 L1238.58,287.70 L1238.05,286.07 L1237.50,284.44 L1236.91,282.82 L1236.31,281.19 L1235.67,279.56 L1235.02,277.94 L1234.33,276.31 L1233.62,274.68 L1232.89,273.05 L1232.13,271.43 L1231.34,269.80 L1230.54,268.17 L1229.70,266.54 L1228.84,264.92 L1227.96,263.29 L1227.05,261.66 L1226.11,260.03 L1225.15,258.40 L1224.17,256.78 L1223.16,255.15 L1222.13,253.52 L1221.07,251.89 L1219.99,250.27 L1218.89,248.64 L1217.76,247.01 L1216.61,245.38 L1215.43,243.76 L1214.23,242.13 L1213.00,240.50 L1211.75,238.88 L1210.48,237.25 L1209.19,235.62 L1207.87,233.99 L1206.52,232.37 L1205.16,230.74 L1203.77,229.11 L1202.36,227.48 L1200.92,225.86 L1199.47,224.23 L1197.99,222.60 L1196.48,220.97 L1194.96,219.34 L1193.41,217.72 L1191.84,216.09 L1190.25,214.46 L1188.64,212.84 L1187.00,211.21 L1185.34,209.58 L1183.67,207.95 L1181.97,206.32 L1180.24,204.70 L1178.50,203.07 L1176.74,201.44 L1174.95,199.81 L1173.15,198.19 L1171.32,196.56 L1169.48,194.93 L1167.61,193.31 L1165.72,191.68 L1163.81,190.05 L1161.89,188.42 L1159.94,186.80 L1157.97,185.17 L1155.99,183.54 L1153.98,181.91 L1151.96,180.28 L1149.91,178.66 L1147.85,177.03 L1145.77,175.40 L1143.67,173.78 L1141.55,172.15 L1139.42,170.52 L1137.26,168.89 L1135.09,167.27 L1132.90,165.64 L1130.69,164.01 L1128.47,162.38 L1126.22,160.75 L1123.97,159.13 L1121.69,157.50 L1119.40,155.87 L1117.09,154.25 L1114.76,152.62 L1112.42,150.99 L1110.06,149.36 L1107.69,147.74 L1105.30,146.11 L1102.89,144.48 L1100.47,142.85 L1098.03,141.22 L1095.58,139.60 L1093.12,137.97 L1090.64,136.34 L1088.14,134.72 L1085.64,133.09 L1083.11,131.46 L1080.58,129.83 L1078.03,128.21 L1075.46,126.58 L1072.89,124.95 L1070.30,123.32 L1067.70,121.69 L1065.08,120.07 L1062.45,118.44 L1059.81,116.81 L1057.16,115.19 L1054.50,113.56 L1051.82,111.93 L1049.14,110.30 L1046.44,108.68 L1043.73,107.05 L1041.01,105.42 L1038.28,103.79 L1035.54,102.17 L1032.79,100.54 L1030.03,98.91 L1027.26,97.28 L1024.48,95.66 L1021.69,94.03 L1018.89,92.40 L1016.09,90.77 L1013.27,89.15 L1010.45,87.52 L1007.61,85.89 L1004.77,84.26 L1001.93,82.64 L999.07,81.01 L996.21,79.38 L993.34,77.75 L990.46,76.12 L987.57,74.50 L984.68,72.87 L981.79,71.24 L978.88,69.62 L975.97,67.99 L973.06,66.36 L970.14,64.73 L967.21,63.11 L964.28,61.48 L961.35,59.85 L958.41,58.22 L955.47,56.60 L952.52,54.97 L949.57,53.34 L946.61,51.71 L943.65,50.09 L940.69,48.46 L937.73,46.83 L934.76,45.20 L931.79,43.57 L928.82,41.95 L925.84,40.32 L922.86,38.69 L919.89,37.06 L916.91,35.44 L913.93,33.81 L910.95,32.18 L907.96,30.56 L904.98,28.93 L902.00,27.30 M902.00,613.20 L904.56,611.57 L907.11,609.94 L909.67,608.32 L912.22,606.69 L914.78,605.06 L917.33,603.43 L919.88,601.81 L922.44,600.18 L924.98,598.55 L927.53,596.92 L930.08,595.30 L932.62,593.67 L935.16,592.04 L937.70,590.41 L940.24,588.79 L942.77,587.16 L945.30,585.53 L947.83,583.90 L950.35,582.28 L952.87,580.65 L955.39,579.02 L957.90,577.39 L960.40,575.77 L962.91,574.14 L965.41,572.51 L967.90,570.88 L970.39,569.26 L972.87,567.63 L975.35,566.00 L977.82,564.38 L980.29,562.75 L982.75,561.12 L985.20,559.49 L987.65,557.87 L990.09,556.24 L992.53,554.61 L994.95,552.98 L997.38,551.36 L999.79,549.73 L1002.19,548.10 L1004.59,546.47 L1006.98,544.85 L1009.37,543.22 L1011.74,541.59 L1014.11,539.96 L1016.46,538.34 L1018.81,536.71 L1021.15,535.08 L1023.48,533.45 L1025.81,531.83 L1028.12,530.20 L1030.42,528.57 L1032.71,526.94 L1035.00,525.32 L1037.27,523.69 L1039.53,522.06 L1041.78,520.43 L1044.02,518.81 L1046.26,517.18 L1048.47,515.55 L1050.68,513.92 L1052.88,512.29 L1055.07,510.67 L1057.24,509.04 L1059.40,507.41 L1061.55,505.78 L1063.69,504.16 L1065.82,502.53 L1067.93,500.90 L1070.03,499.27 L1072.12,497.65 L1074.19,496.02 L1076.25,494.39 L1078.30,492.76 L1080.34,491.14 L1082.36,489.51 L1084.37,487.88 L1086.36,486.25 L1088.34,484.63 L1090.30,483.00 L1092.26,481.37 L1094.19,479.75 L1096.11,478.12 L1098.02,476.49 L1099.91,474.86 L1101.79,473.24 L1103.65,471.61 L1105.50,469.98 L1107.33,468.35 L1109.15,466.73 L1110.95,465.10 L1112.73,463.47 L1114.50,461.84 L1116.25,460.22 L1117.99,458.59 L1119.70,456.96 L1121.41,455.33 L1123.09,453.70 L1124.76,452.08 L1126.41,450.45 L1128.05,448.82 L1129.66,447.19 L1131.27,445.57 L1132.85,443.94 L1134.41,442.31 L1135.96,440.69 L1137.49,439.06 L1139.00,437.43 L1140.50,435.80 L1141.97,434.18 L1143.43,432.55 L1144.87,430.92 L1146.29,429.29 L1147.69,427.66 L1149.07,426.04 L1150.44,424.41 L1151.78,422.78 L1153.11,421.15 L1154.41,419.53 L1155.70,417.90 L1156.97,416.27 L1158.22,414.64 L1159.45,413.02 L1160.66,411.39 L1161.85,409.76 L1163.02,408.13 L1164.17,406.51 L1165.30,404.88 L1166.41,403.25 L1167.50,401.62 L1168.57,400.00 L1169.62,398.37 L1170.65,396.74 L1171.66,395.12 L1172.65,393.49 L1173.62,391.86 L1174.57,390.23 L1175.49,388.61 L1176.40,386.98 L1177.28,385.35 L1178.15,383.72 L1178.99,382.10 L1179.81,380.47 L1180.61,378.84 L1181.39,377.21 L1182.15,375.58 L1182.89,373.96 L1183.60,372.33 L1184.30,370.70 L1184.97,369.07 L1185.62,367.45 L1186.25,365.82 L1186.86,364.19 L1187.44,362.56 L1188.01,360.94 L1188.55,359.31 L1189.07,357.68 L1189.57,356.06 L1190.04,354.43 L1190.50,352.80 L1190.93,351.17 L1191.34,349.55 L1191.73,347.92 L1192.10,346.29 L1192.44,344.66 L1192.77,343.04 L1193.07,341.41 L1193.35,339.78 L1193.60,338.15 L1193.84,336.52 L1194.05,334.90 L1194.24,333.27 L1194.40,331.64 L1194.55,330.01 L1194.67,328.39 L1194.77,326.76 L1194.85,325.13 L1194.91,323.50 L1194.94,321.88 L1194.95,320.25 L1194.94,318.62 L1194.91,317.00 L1194.85,315.37 L1194.77,313.74 L1194.67,312.11 L1194.55,310.49 L1194.40,308.86 L1194.24,307.23 L1194.05,305.60 L1193.84,303.98 L1193.60,302.35 L1193.35,300.72 L1193.07,299.09 L1192.77,297.46 L1192.44,295.84 L1192.10,294.21 L1191.73,292.58 L1191.34,290.95 L1190.93,289.33 L1190.50,287.70 L1190.04,286.07 L1189.57,284.44 L1189.07,282.82 L1188.55,281.19 L1188.01,279.56 L1187.44,277.94 L1186.86,276.31 L1186.25,274.68 L1185.62,273.05 L1184.97,271.43 L1184.30,269.80 L1183.60,268.17 L1182.89,266.54 L1182.15,264.92 L1181.39,263.29 L1180.61,261.66 L1179.81,260.03 L1178.99,258.40 L1178.15,256.78 L1177.28,255.15 L1176.40,253.52 L1175.49,251.89 L1174.57,250.27 L1173.62,248.64 L1172.65,247.01 L1171.66,245.38 L1170.65,243.76 L1169.62,242.13 L1168.57,240.50 L1167.50,238.88 L1166.41,237.25 L1165.30,235.62 L1164.17,233.99 L1163.02,232.37 L1161.85,230.74 L1160.66,229.11 L1159.45,227.48 L1158.22,225.86 L1156.97,224.23 L1155.70,222.60 L1154.41,220.97 L1153.11,219.34 L1151.78,217.72 L1150.44,216.09 L1149.07,214.46 L1147.69,212.84 L1146.29,211.21 L1144.87,209.58 L1143.43,207.95 L1141.97,206.32 L1140.50,204.70 L1139.00,203.07 L1137.49,201.44 L1135.96,199.81 L1134.41,198.19 L1132.85,196.56 L1131.27,194.93 L1129.66,193.31 L1128.05,191.68 L1126.41,190.05 L1124.76,188.42 L1123.09,186.80 L1121.41,185.17 L1119.70,183.54 L1117.99,181.91 L1116.25,180.28 L1114.50,178.66 L1112.73,177.03 L1110.95,175.40 L1109.15,173.78 L1107.33,172.15 L1105.50,170.52 L1103.65,168.89 L1101.79,167.27 L1099.91,165.64 L1098.02,164.01 L1096.11,162.38 L1094.19,160.75 L1092.26,159.13 L1090.30,157.50 L1088.34,155.87 L1086.36,154.25 L1084.37,152.62 L1082.36,150.99 L1080.34,149.36 L1078.30,147.74 L1076.25,146.11 L1074.19,144.48 L1072.12,142.85 L1070.03,141.22 L1067.93,139.60 L1065.82,137.97 L1063.69,136.34 L1061.55,134.72 L1059.40,133.09 L1057.24,131.46 L1055.07,129.83 L1052.88,128.21 L1050.68,126.58 L1048.47,124.95 L1046.26,123.32 L1044.02,121.69 L1041.78,120.07 L1039.53,118.44 L1037.27,116.81 L1035.00,115.19 L1032.71,113.56 L1030.42,111.93 L1028.12,110.30 L1025.81,108.68 L1023.48,107.05 L1021.15,105.42 L1018.81,103.79 L1016.46,102.17 L1014.11,100.54 L1011.74,98.91 L1009.37,97.28 L1006.98,95.66 L1004.59,94.03 L1002.19,92.40 L999.79,90.77 L997.38,89.15 L994.95,87.52 L992.53,85.89 L990.09,84.26 L987.65,82.64 L985.20,81.01 L982.75,79.38 L980.29,77.75 L977.82,76.12 L975.35,74.50 L972.87,72.87 L970.39,71.24 L967.90,69.62 L965.41,67.99 L962.91,66.36 L960.40,64.73 L957.90,63.11 L955.39,61.48 L952.87,59.85 L950.35,58.22 L947.83,56.60 L945.30,54.97 L942.77,53.34 L940.24,51.71 L937.70,50.09 L935.16,48.46 L932.62,46.83 L930.08,45.20 L927.53,43.57 L924.98,41.95 L922.44,40.32 L919.88,38.69 L917.33,37.06 L914.78,35.44 L912.22,33.81 L909.67,32.18 L907.11,30.56 L904.56,28.93 L902.00,27.30 M902.00,613.20 L904.13,611.57 L906.26,609.94 L908.39,608.32 L910.52,606.69 L912.65,605.06 L914.78,603.43 L916.90,601.81 L919.03,600.18 L921.15,598.55 L923.28,596.92 L925.40,595.30 L927.52,593.67 L929.64,592.04 L931.75,590.41 L933.86,588.79 L935.98,587.16 L938.08,585.53 L940.19,583.90 L942.29,582.28 L944.39,580.65 L946.49,579.02 L948.58,577.39 L950.67,575.77 L952.76,574.14 L954.84,572.51 L956.92,570.88 L958.99,569.26 L961.06,567.63 L963.12,566.00 L965.18,564.38 L967.24,562.75 L969.29,561.12 L971.34,559.49 L973.38,557.87 L975.41,556.24 L977.44,554.61 L979.46,552.98 L981.48,551.36 L983.49,549.73 L985.50,548.10 L987.49,546.47 L989.49,544.85 L991.47,543.22 L993.45,541.59 L995.42,539.96 L997.39,538.34 L999.34,536.71 L1001.29,535.08 L1003.24,533.45 L1005.17,531.83 L1007.10,530.20 L1009.02,528.57 L1010.93,526.94 L1012.83,525.32 L1014.72,523.69 L1016.61,522.06 L1018.49,520.43 L1020.35,518.81 L1022.21,517.18 L1024.06,515.55 L1025.90,513.92 L1027.73,512.29 L1029.55,510.67 L1031.37,509.04 L1033.17,507.41 L1034.96,505.78 L1036.74,504.16 L1038.51,502.53 L1040.27,500.90 L1042.02,499.27 L1043.76,497.65 L1045.49,496.02 L1047.21,494.39 L1048.92,492.76 L1050.61,491.14 L1052.30,489.51 L1053.97,487.88 L1055.63,486.25 L1057.28,484.63 L1058.92,483.00 L1060.55,481.37 L1062.16,479.75 L1063.76,478.12 L1065.35,476.49 L1066.93,474.86 L1068.49,473.24 L1070.04,471.61 L1071.58,469.98 L1073.11,468.35 L1074.62,466.73 L1076.12,465.10 L1077.61,463.47 L1079.08,461.84 L1080.54,460.22 L1081.99,458.59 L1083.42,456.96 L1084.84,455.33 L1086.24,453.70 L1087.63,452.08 L1089.01,450.45 L1090.37,448.82 L1091.72,447.19 L1093.05,445.57 L1094.37,443.94 L1095.68,442.31 L1096.97,440.69 L1098.24,439.06 L1099.50,437.43 L1100.75,435.80 L1101.98,434.18 L1103.19,432.55 L1104.39,430.92 L1105.57,429.29 L1106.74,427.66 L1107.89,426.04 L1109.03,424.41 L1110.15,422.78 L1111.26,421.15 L1112.35,419.53 L1113.42,417.90 L1114.48,416.27 L1115.52,414.64 L1116.54,413.02 L1117.55,411.39 L1118.54,409.76 L1119.52,408.13 L1120.48,406.51 L1121.42,404.88 L1122.34,403.25 L1123.25,401.62 L1124.14,400.00 L1125.02,398.37 L1125.88,396.74 L1126.72,395.12 L1127.54,393.49 L1128.35,391.86 L1129.14,390.23 L1129.91,388.61 L1130.67,386.98 L1131.40,385.35 L1132.12,383.72 L1132.82,382.10 L1133.51,380.47 L1134.18,378.84 L1134.83,377.21 L1135.46,375.58 L1136.07,373.96 L1136.67,372.33 L1137.25,370.70 L1137.81,369.07 L1138.35,367.45 L1138.87,365.82 L1139.38,364.19 L1139.87,362.56 L1140.34,360.94 L1140.79,359.31 L1141.22,357.68 L1141.64,356.06 L1142.04,354.43 L1142.42,352.80 L1142.78,351.17 L1143.12,349.55 L1143.44,347.92 L1143.75,346.29 L1144.04,344.66 L1144.31,343.04 L1144.56,341.41 L1144.79,339.78 L1145.00,338.15 L1145.20,336.52 L1145.37,334.90 L1145.53,333.27 L1145.67,331.64 L1145.79,330.01 L1145.89,328.39 L1145.98,326.76 L1146.04,325.13 L1146.09,323.50 L1146.12,321.88 L1146.12,320.25 L1146.12,318.62 L1146.09,317.00 L1146.04,315.37 L1145.98,313.74 L1145.89,312.11 L1145.79,310.49 L1145.67,308.86 L1145.53,307.23 L1145.37,305.60 L1145.20,303.98 L1145.00,302.35 L1144.79,300.72 L1144.56,299.09 L1144.31,297.46 L1144.04,295.84 L1143.75,294.21 L1143.44,292.58 L1143.12,290.95 L1142.78,289.33 L1142.42,287.70 L1142.04,286.07 L1141.64,284.44 L1141.22,282.82 L1140.79,281.19 L1140.34,279.56 L1139.87,277.94 L1139.38,276.31 L1138.87,274.68 L1138.35,273.05 L1137.81,271.43 L1137.25,269.80 L1136.67,268.17 L1136.07,266.54 L1135.46,264.92 L1134.83,263.29 L1134.18,261.66 L1133.51,260.03 L1132.82,258.40 L1132.12,256.78 L1131.40,255.15 L1130.67,253.52 L1129.91,251.89 L1129.14,250.27 L1128.35,248.64 L1127.54,247.01 L1126.72,245.38 L1125.88,243.76 L1125.02,242.13 L1124.14,240.50 L1123.25,238.88 L1122.34,237.25 L1121.42,235.62 L1120.48,233.99 L1119.52,232.37 L1118.54,230.74 L1117.55,229.11 L1116.54,227.48 L1115.52,225.86 L1114.48,224.23 L1113.42,222.60 L1112.35,220.97 L1111.26,219.34 L1110.15,217.72 L1109.03,216.09 L1107.89,214.46 L1106.74,212.84 L1105.57,211.21 L1104.39,209.58 L1103.19,207.95 L1101.98,206.32 L1100.75,204.70 L1099.50,203.07 L1098.24,201.44 L1096.97,199.81 L1095.68,198.19 L1094.37,196.56 L1093.05,194.93 L1091.72,193.31 L1090.37,191.68 L1089.01,190.05 L1087.63,188.42 L1086.24,186.80 L1084.84,185.17 L1083.42,183.54 L1081.99,181.91 L1080.54,180.28 L1079.08,178.66 L1077.61,177.03 L1076.12,175.40 L1074.62,173.78 L1073.11,172.15 L1071.58,170.52 L1070.04,168.89 L1068.49,167.27 L1066.93,165.64 L1065.35,164.01 L1063.76,162.38 L1062.16,160.75 L1060.55,159.13 L1058.92,157.50 L1057.28,155.87 L1055.63,154.25 L1053.97,152.62 L1052.30,150.99 L1050.61,149.36 L1048.92,147.74 L1047.21,146.11 L1045.49,144.48 L1043.76,142.85 L1042.02,141.22 L1040.27,139.60 L1038.51,137.97 L1036.74,136.34 L1034.96,134.72 L1033.17,133.09 L1031.37,131.46 L1029.55,129.83 L1027.73,128.21 L1025.90,126.58 L1024.06,124.95 L1022.21,123.32 L1020.35,121.69 L1018.49,120.07 L1016.61,118.44 L1014.72,116.81 L1012.83,115.19 L1010.93,113.56 L1009.02,111.93 L1007.10,110.30 L1005.17,108.68 L1003.24,107.05 L1001.29,105.42 L999.34,103.79 L997.39,102.17 L995.42,100.54 L993.45,98.91 L991.47,97.28 L989.49,95.66 L987.49,94.03 L985.50,92.40 L983.49,90.77 L981.48,89.15 L979.46,87.52 L977.44,85.89 L975.41,84.26 L973.38,82.64 L971.34,81.01 L969.29,79.38 L967.24,77.75 L965.18,76.12 L963.12,74.50 L961.06,72.87 L958.99,71.24 L956.92,69.62 L954.84,67.99 L952.76,66.36 L950.67,64.73 L948.58,63.11 L946.49,61.48 L944.39,59.85 L942.29,58.22 L940.19,56.60 L938.08,54.97 L935.98,53.34 L933.86,51.71 L931.75,50.09 L929.64,48.46 L927.52,46.83 L925.40,45.20 L923.28,43.57 L921.15,41.95 L919.03,40.32 L916.90,38.69 L914.78,37.06 L912.65,35.44 L910.52,33.81 L908.39,32.18 L906.26,30.56 L904.13,28.93 L902.00,27.30 M902.00,613.20 L903.70,611.57 L905.41,609.94 L907.11,608.32 L908.82,606.69 L910.52,605.06 L912.22,603.43 L913.92,601.81 L915.62,600.18 L917.32,598.55 L919.02,596.92 L920.72,595.30 L922.41,593.67 L924.11,592.04 L925.80,590.41 L927.49,588.79 L929.18,587.16 L930.87,585.53 L932.55,583.90 L934.23,582.28 L935.91,580.65 L937.59,579.02 L939.26,577.39 L940.94,575.77 L942.61,574.14 L944.27,572.51 L945.93,570.88 L947.59,569.26 L949.25,567.63 L950.90,566.00 L952.55,564.38 L954.19,562.75 L955.83,561.12 L957.47,559.49 L959.10,557.87 L960.73,556.24 L962.35,554.61 L963.97,552.98 L965.58,551.36 L967.19,549.73 L968.80,548.10 L970.40,546.47 L971.99,544.85 L973.58,543.22 L975.16,541.59 L976.74,539.96 L978.31,538.34 L979.88,536.71 L981.44,535.08 L982.99,533.45 L984.54,531.83 L986.08,530.20 L987.61,528.57 L989.14,526.94 L990.66,525.32 L992.18,523.69 L993.69,522.06 L995.19,520.43 L996.68,518.81 L998.17,517.18 L999.65,515.55 L1001.12,513.92 L1002.59,512.29 L1004.04,510.67 L1005.49,509.04 L1006.93,507.41 L1008.37,505.78 L1009.79,504.16 L1011.21,502.53 L1012.62,500.90 L1014.02,499.27 L1015.41,497.65 L1016.79,496.02 L1018.17,494.39 L1019.53,492.76 L1020.89,491.14 L1022.24,489.51 L1023.58,487.88 L1024.91,486.25 L1026.23,484.63 L1027.54,483.00 L1028.84,481.37 L1030.13,479.75 L1031.41,478.12 L1032.68,476.49 L1033.94,474.86 L1035.19,473.24 L1036.44,471.61 L1037.67,469.98 L1038.89,468.35 L1040.10,466.73 L1041.30,465.10 L1042.49,463.47 L1043.67,461.84 L1044.83,460.22 L1045.99,458.59 L1047.14,456.96 L1048.27,455.33 L1049.39,453.70 L1050.51,452.08 L1051.61,450.45 L1052.70,448.82 L1053.78,447.19 L1054.84,445.57 L1055.90,443.94 L1056.94,442.31 L1057.97,440.69 L1058.99,439.06 L1060.00,437.43 L1061.00,435.80 L1061.98,434.18 L1062.95,432.55 L1063.91,430.92 L1064.86,429.29 L1065.79,427.66 L1066.71,426.04 L1067.62,424.41 L1068.52,422.78 L1069.40,421.15 L1070.28,419.53 L1071.13,417.90 L1071.98,416.27 L1072.81,414.64 L1073.63,413.02 L1074.44,411.39 L1075.23,409.76 L1076.01,408.13 L1076.78,406.51 L1077.53,404.88 L1078.27,403.25 L1079.00,401.62 L1079.72,400.00 L1080.42,398.37 L1081.10,396.74 L1081.77,395.12 L1082.43,393.49 L1083.08,391.86 L1083.71,390.23 L1084.33,388.61 L1084.93,386.98 L1085.52,385.35 L1086.10,383.72 L1086.66,382.10 L1087.21,380.47 L1087.74,378.84 L1088.26,377.21 L1088.77,375.58 L1089.26,373.96 L1089.73,372.33 L1090.20,370.70 L1090.65,369.07 L1091.08,367.45 L1091.50,365.82 L1091.90,364.19 L1092.29,362.56 L1092.67,360.94 L1093.03,359.31 L1093.38,357.68 L1093.71,356.06 L1094.03,354.43 L1094.33,352.80 L1094.62,351.17 L1094.90,349.55 L1095.15,347.92 L1095.40,346.29 L1095.63,344.66 L1095.84,343.04 L1096.04,341.41 L1096.23,339.78 L1096.40,338.15 L1096.56,336.52 L1096.70,334.90 L1096.82,333.27 L1096.94,331.64 L1097.03,330.01 L1097.11,328.39 L1097.18,326.76 L1097.23,325.13 L1097.27,323.50 L1097.29,321.88 L1097.30,320.25 L1097.29,318.62 L1097.27,317.00 L1097.23,315.37 L1097.18,313.74 L1097.11,312.11 L1097.03,310.49 L1096.94,308.86 L1096.82,307.23 L1096.70,305.60 L1096.56,303.98 L1096.40,302.35 L1096.23,300.72 L1096.04,299.09 L1095.84,297.46 L1095.63,295.84 L1095.40,294.21 L1095.15,292.58 L1094.90,290.95 L1094.62,289.33 L1094.33,287.70 L1094.03,286.07 L1093.71,284.44 L1093.38,282.82 L1093.03,281.19 L1092.67,279.56 L1092.29,277.94 L1091.90,276.31 L1091.50,274.68 L1091.08,273.05 L1090.65,271.43 L1090.20,269.80 L1089.73,268.17 L1089.26,266.54 L1088.77,264.92 L1088.26,263.29 L1087.74,261.66 L1087.21,260.03 L1086.66,258.40 L1086.10,256.78 L1085.52,255.15 L1084.93,253.52 L1084.33,251.89 L1083.71,250.27 L1083.08,248.64 L1082.43,247.01 L1081.77,245.38 L1081.10,243.76 L1080.42,242.13 L1079.72,240.50 L1079.00,238.88 L1078.27,237.25 L1077.53,235.62 L1076.78,233.99 L1076.01,232.37 L1075.23,230.74 L1074.44,229.11 L1073.63,227.48 L1072.81,225.86 L1071.98,224.23 L1071.13,222.60 L1070.28,220.97 L1069.40,219.34 L1068.52,217.72 L1067.62,216.09 L1066.71,214.46 L1065.79,212.84 L1064.86,211.21 L1063.91,209.58 L1062.95,207.95 L1061.98,206.32 L1061.00,204.70 L1060.00,203.07 L1058.99,201.44 L1057.97,199.81 L1056.94,198.19 L1055.90,196.56 L1054.84,194.93 L1053.78,193.31 L1052.70,191.68 L1051.61,190.05 L1050.51,188.42 L1049.39,186.80 L1048.27,185.17 L1047.14,183.54 L1045.99,181.91 L1044.83,180.28 L1043.67,178.66 L1042.49,177.03 L1041.30,175.40 L1040.10,173.78 L1038.89,172.15 L1037.67,170.52 L1036.44,168.89 L1035.19,167.27 L1033.94,165.64 L1032.68,164.01 L1031.41,162.38 L1030.13,160.75 L1028.84,159.13 L1027.54,157.50 L1026.23,155.87 L1024.91,154.25 L1023.58,152.62 L1022.24,150.99 L1020.89,149.36 L1019.53,147.74 L1018.17,146.11 L1016.79,144.48 L1015.41,142.85 L1014.02,141.22 L1012.62,139.60 L1011.21,137.97 L1009.79,136.34 L1008.37,134.72 L1006.93,133.09 L1005.49,131.46 L1004.04,129.83 L1002.59,128.21 L1001.12,126.58 L999.65,124.95 L998.17,123.32 L996.68,121.69 L995.19,120.07 L993.69,118.44 L992.18,116.81 L990.66,115.19 L989.14,113.56 L987.61,111.93 L986.08,110.30 L984.54,108.68 L982.99,107.05 L981.44,105.42 L979.88,103.79 L978.31,102.17 L976.74,100.54 L975.16,98.91 L973.58,97.28 L971.99,95.66 L970.40,94.03 L968.80,92.40 L967.19,90.77 L965.58,89.15 L963.97,87.52 L962.35,85.89 L960.73,84.26 L959.10,82.64 L957.47,81.01 L955.83,79.38 L954.19,77.75 L952.55,76.12 L950.90,74.50 L949.25,72.87 L947.59,71.24 L945.93,69.62 L944.27,67.99 L942.61,66.36 L940.94,64.73 L939.26,63.11 L937.59,61.48 L935.91,59.85 L934.23,58.22 L932.55,56.60 L930.87,54.97 L929.18,53.34 L927.49,51.71 L925.80,50.09 L924.11,48.46 L922.41,46.83 L920.72,45.20 L919.02,43.57 L917.32,41.95 L915.62,40.32 L913.92,38.69 L912.22,37.06 L910.52,35.44 L908.82,33.81 L907.11,32.18 L905.41,30.56 L903.70,28.93 L902.00,27.30 M902.00,613.20 L903.28,611.57 L904.56,609.94 L905.83,608.32 L907.11,606.69 L908.39,605.06 L909.67,603.43 L910.94,601.81 L912.22,600.18 L913.49,598.55 L914.77,596.92 L916.04,595.30 L917.31,593.67 L918.58,592.04 L919.85,590.41 L921.12,588.79 L922.39,587.16 L923.65,585.53 L924.91,583.90 L926.18,582.28 L927.44,580.65 L928.69,579.02 L929.95,577.39 L931.20,575.77 L932.45,574.14 L933.70,572.51 L934.95,570.88 L936.19,569.26 L937.44,567.63 L938.67,566.00 L939.91,564.38 L941.14,562.75 L942.37,561.12 L943.60,559.49 L944.83,557.87 L946.05,556.24 L947.26,554.61 L948.48,552.98 L949.69,551.36 L950.89,549.73 L952.10,548.10 L953.30,546.47 L954.49,544.85 L955.68,543.22 L956.87,541.59 L958.05,539.96 L959.23,538.34 L960.41,536.71 L961.58,535.08 L962.74,533.45 L963.90,531.83 L965.06,530.20 L966.21,528.57 L967.36,526.94 L968.50,525.32 L969.63,523.69 L970.77,522.06 L971.89,520.43 L973.01,518.81 L974.13,517.18 L975.24,515.55 L976.34,513.92 L977.44,512.29 L978.53,510.67 L979.62,509.04 L980.70,507.41 L981.78,505.78 L982.84,504.16 L983.91,502.53 L984.96,500.90 L986.01,499.27 L987.06,497.65 L988.10,496.02 L989.13,494.39 L990.15,492.76 L991.17,491.14 L992.18,489.51 L993.18,487.88 L994.18,486.25 L995.17,484.63 L996.15,483.00 L997.13,481.37 L998.10,479.75 L999.06,478.12 L1000.01,476.49 L1000.96,474.86 L1001.90,473.24 L1002.83,471.61 L1003.75,469.98 L1004.67,468.35 L1005.57,466.73 L1006.47,465.10 L1007.37,463.47 L1008.25,461.84 L1009.13,460.22 L1009.99,458.59 L1010.85,456.96 L1011.70,455.33 L1012.55,453.70 L1013.38,452.08 L1014.21,450.45 L1015.02,448.82 L1015.83,447.19 L1016.63,445.57 L1017.42,443.94 L1018.21,442.31 L1018.98,440.69 L1019.74,439.06 L1020.50,437.43 L1021.25,435.80 L1021.99,434.18 L1022.71,432.55 L1023.43,430.92 L1024.14,429.29 L1024.84,427.66 L1025.54,426.04 L1026.22,424.41 L1026.89,422.78 L1027.55,421.15 L1028.21,419.53 L1028.85,417.90 L1029.49,416.27 L1030.11,414.64 L1030.72,413.02 L1031.33,411.39 L1031.92,409.76 L1032.51,408.13 L1033.09,406.51 L1033.65,404.88 L1034.21,403.25 L1034.75,401.62 L1035.29,400.00 L1035.81,398.37 L1036.33,396.74 L1036.83,395.12 L1037.33,393.49 L1037.81,391.86 L1038.28,390.23 L1038.75,388.61 L1039.20,386.98 L1039.64,385.35 L1040.07,383.72 L1040.49,382.10 L1040.91,380.47 L1041.31,378.84 L1041.70,377.21 L1042.07,375.58 L1042.44,373.96 L1042.80,372.33 L1043.15,370.70 L1043.48,369.07 L1043.81,367.45 L1044.12,365.82 L1044.43,364.19 L1044.72,362.56 L1045.00,360.94 L1045.27,359.31 L1045.53,357.68 L1045.78,356.06 L1046.02,354.43 L1046.25,352.80 L1046.47,351.17 L1046.67,349.55 L1046.87,347.92 L1047.05,346.29 L1047.22,344.66 L1047.38,343.04 L1047.53,341.41 L1047.67,339.78 L1047.80,338.15 L1047.92,336.52 L1048.02,334.90 L1048.12,333.27 L1048.20,331.64 L1048.27,330.01 L1048.34,328.39 L1048.39,326.76 L1048.42,325.13 L1048.45,323.50 L1048.47,321.88 L1048.47,320.25 L1048.47,318.62 L1048.45,317.00 L1048.42,315.37 L1048.39,313.74 L1048.34,312.11 L1048.27,310.49 L1048.20,308.86 L1048.12,307.23 L1048.02,305.60 L1047.92,303.98 L1047.80,302.35 L1047.67,300.72 L1047.53,299.09 L1047.38,297.46 L1047.22,295.84 L1047.05,294.21 L1046.87,292.58 L1046.67,290.95 L1046.47,289.33 L1046.25,287.70 L1046.02,286.07 L1045.78,284.44 L1045.53,282.82 L1045.27,281.19 L1045.00,279.56 L1044.72,277.94 L1044.43,276.31 L1044.12,274.68 L1043.81,273.05 L1043.48,271.43 L1043.15,269.80 L1042.80,268.17 L1042.44,266.54 L1042.07,264.92 L1041.70,263.29 L1041.31,261.66 L1040.91,260.03 L1040.49,258.40 L1040.07,256.78 L1039.64,255.15 L1039.20,253.52 L1038.75,251.89 L1038.28,250.27 L1037.81,248.64 L1037.33,247.01 L1036.83,245.38 L1036.33,243.76 L1035.81,242.13 L1035.29,240.50 L1034.75,238.88 L1034.21,237.25 L1033.65,235.62 L1033.09,233.99 L1032.51,232.37 L1031.92,230.74 L1031.33,229.11 L1030.72,227.48 L1030.11,225.86 L1029.49,224.23 L1028.85,222.60 L1028.21,220.97 L1027.55,219.34 L1026.89,217.72 L1026.22,216.09 L1025.54,214.46 L1024.84,212.84 L1024.14,211.21 L1023.43,209.58 L1022.71,207.95 L1021.99,206.32 L1021.25,204.70 L1020.50,203.07 L1019.74,201.44 L1018.98,199.81 L1018.21,198.19 L1017.42,196.56 L1016.63,194.93 L1015.83,193.31 L1015.02,191.68 L1014.21,190.05 L1013.38,188.42 L1012.55,186.80 L1011.70,185.17 L1010.85,183.54 L1009.99,181.91 L1009.13,180.28 L1008.25,178.66 L1007.37,177.03 L1006.47,175.40 L1005.57,173.78 L1004.67,172.15 L1003.75,170.52 L1002.83,168.89 L1001.90,167.27 L1000.96,165.64 L1000.01,164.01 L999.06,162.38 L998.10,160.75 L997.13,159.13 L996.15,157.50 L995.17,155.87 L994.18,154.25 L993.18,152.62 L992.18,150.99 L991.17,149.36 L990.15,147.74 L989.13,146.11 L988.10,144.48 L987.06,142.85 L986.01,141.22 L984.96,139.60 L983.91,137.97 L982.84,136.34 L981.78,134.72 L980.70,133.09 L979.62,131.46 L978.53,129.83 L977.44,128.21 L976.34,126.58 L975.24,124.95 L974.13,123.32 L973.01,121.69 L971.89,120.07 L970.77,118.44 L969.63,116.81 L968.50,115.19 L967.36,113.56 L966.21,111.93 L965.06,110.30 L963.90,108.68 L962.74,107.05 L961.58,105.42 L960.41,103.79 L959.23,102.17 L958.05,100.54 L956.87,98.91 L955.68,97.28 L954.49,95.66 L953.30,94.03 L952.10,92.40 L950.89,90.77 L949.69,89.15 L948.48,87.52 L947.26,85.89 L946.05,84.26 L944.83,82.64 L943.60,81.01 L942.37,79.38 L941.14,77.75 L939.91,76.12 L938.67,74.50 L937.44,72.87 L936.19,71.24 L934.95,69.62 L933.70,67.99 L932.45,66.36 L931.20,64.73 L929.95,63.11 L928.69,61.48 L927.44,59.85 L926.18,58.22 L924.91,56.60 L923.65,54.97 L922.39,53.34 L921.12,51.71 L919.85,50.09 L918.58,48.46 L917.31,46.83 L916.04,45.20 L914.77,43.57 L913.49,41.95 L912.22,40.32 L910.94,38.69 L909.67,37.06 L908.39,35.44 L907.11,33.81 L905.83,32.18 L904.56,30.56 L903.28,28.93 L902.00,27.30 M902.00,613.20 L902.85,611.57 L903.70,609.94 L904.56,608.32 L905.41,606.69 L906.26,605.06 L907.11,603.43 L907.96,601.81 L908.81,600.18 L909.66,598.55 L910.51,596.92 L911.36,595.30 L912.21,593.67 L913.05,592.04 L913.90,590.41 L914.75,588.79 L915.59,587.16 L916.43,585.53 L917.28,583.90 L918.12,582.28 L918.96,580.65 L919.80,579.02 L920.63,577.39 L921.47,575.77 L922.30,574.14 L923.14,572.51 L923.97,570.88 L924.80,569.26 L925.62,567.63 L926.45,566.00 L927.27,564.38 L928.10,562.75 L928.92,561.12 L929.73,559.49 L930.55,557.87 L931.36,556.24 L932.18,554.61 L932.98,552.98 L933.79,551.36 L934.60,549.73 L935.40,548.10 L936.20,546.47 L936.99,544.85 L937.79,543.22 L938.58,541.59 L939.37,539.96 L940.15,538.34 L940.94,536.71 L941.72,535.08 L942.49,533.45 L943.27,531.83 L944.04,530.20 L944.81,528.57 L945.57,526.94 L946.33,525.32 L947.09,523.69 L947.84,522.06 L948.59,520.43 L949.34,518.81 L950.09,517.18 L950.83,515.55 L951.56,513.92 L952.29,512.29 L953.02,510.67 L953.75,509.04 L954.47,507.41 L955.18,505.78 L955.90,504.16 L956.61,502.53 L957.31,500.90 L958.01,499.27 L958.71,497.65 L959.40,496.02 L960.08,494.39 L960.77,492.76 L961.45,491.14 L962.12,489.51 L962.79,487.88 L963.45,486.25 L964.11,484.63 L964.77,483.00 L965.42,481.37 L966.06,479.75 L966.70,478.12 L967.34,476.49 L967.97,474.86 L968.60,473.24 L969.22,471.61 L969.83,469.98 L970.44,468.35 L971.05,466.73 L971.65,465.10 L972.24,463.47 L972.83,461.84 L973.42,460.22 L974.00,458.59 L974.57,456.96 L975.14,455.33 L975.70,453.70 L976.25,452.08 L976.80,450.45 L977.35,448.82 L977.89,447.19 L978.42,445.57 L978.95,443.94 L979.47,442.31 L979.99,440.69 L980.50,439.06 L981.00,437.43 L981.50,435.80 L981.99,434.18 L982.48,432.55 L982.96,430.92 L983.43,429.29 L983.90,427.66 L984.36,426.04 L984.81,424.41 L985.26,422.78 L985.70,421.15 L986.14,419.53 L986.57,417.90 L986.99,416.27 L987.41,414.64 L987.82,413.02 L988.22,411.39 L988.62,409.76 L989.01,408.13 L989.39,406.51 L989.77,404.88 L990.14,403.25 L990.50,401.62 L990.86,400.00 L991.21,398.37 L991.55,396.74 L991.89,395.12 L992.22,393.49 L992.54,391.86 L992.86,390.23 L993.16,388.61 L993.47,386.98 L993.76,385.35 L994.05,383.72 L994.33,382.10 L994.60,380.47 L994.87,378.84 L995.13,377.21 L995.38,375.58 L995.63,373.96 L995.87,372.33 L996.10,370.70 L996.32,369.07 L996.54,367.45 L996.75,365.82 L996.95,364.19 L997.15,362.56 L997.34,360.94 L997.52,359.31 L997.69,357.68 L997.86,356.06 L998.01,354.43 L998.17,352.80 L998.31,351.17 L998.45,349.55 L998.58,347.92 L998.70,346.29 L998.81,344.66 L998.92,343.04 L999.02,341.41 L999.12,339.78 L999.20,338.15 L999.28,336.52 L999.35,334.90 L999.41,333.27 L999.47,331.64 L999.52,330.01 L999.56,328.39 L999.59,326.76 L999.62,325.13 L999.64,323.50 L999.65,321.88 L999.65,320.25 L999.65,318.62 L999.64,317.00 L999.62,315.37 L999.59,313.74 L999.56,312.11 L999.52,310.49 L999.47,308.86 L999.41,307.23 L999.35,305.60 L999.28,303.98 L999.20,302.35 L999.12,300.72 L999.02,299.09 L998.92,297.46 L998.81,295.84 L998.70,294.21 L998.58,292.58 L998.45,290.95 L998.31,289.33 L998.17,287.70 L998.01,286.07 L997.86,284.44 L997.69,282.82 L997.52,281.19 L997.34,279.56 L997.15,277.94 L996.95,276.31 L996.75,274.68 L996.54,273.05 L996.32,271.43 L996.10,269.80 L995.87,268.17 L995.63,266.54 L995.38,264.92 L995.13,263.29 L994.87,261.66 L994.60,260.03 L994.33,258.40 L994.05,256.78 L993.76,255.15 L993.47,253.52 L993.16,251.89 L992.86,250.27 L992.54,248.64 L992.22,247.01 L991.89,245.38 L991.55,243.76 L991.21,242.13 L990.86,240.50 L990.50,238.88 L990.14,237.25 L989.77,235.62 L989.39,233.99 L989.01,232.37 L988.62,230.74 L988.22,229.11 L987.82,227.48 L987.41,225.86 L986.99,224.23 L986.57,222.60 L986.14,220.97 L985.70,219.34 L985.26,217.72 L984.81,216.09 L984.36,214.46 L983.90,212.84 L983.43,211.21 L982.96,209.58 L982.48,207.95 L981.99,206.32 L981.50,204.70 L981.00,203.07 L980.50,201.44 L979.99,199.81 L979.47,198.19 L978.95,196.56 L978.42,194.93 L977.89,193.31 L977.35,191.68 L976.80,190.05 L976.25,188.42 L975.70,186.80 L975.14,185.17 L974.57,183.54 L974.00,181.91 L973.42,180.28 L972.83,178.66 L972.24,177.03 L971.65,175.40 L971.05,173.78 L970.44,172.15 L969.83,170.52 L969.22,168.89 L968.60,167.27 L967.97,165.64 L967.34,164.01 L966.70,162.38 L966.06,160.75 L965.42,159.13 L964.77,157.50 L964.11,155.87 L963.45,154.25 L962.79,152.62 L962.12,150.99 L961.45,149.36 L960.77,147.74 L960.08,146.11 L959.40,144.48 L958.71,142.85 L958.01,141.22 L957.31,139.60 L956.61,137.97 L955.90,136.34 L955.18,134.72 L954.47,133.09 L953.75,131.46 L953.02,129.83 L952.29,128.21 L951.56,126.58 L950.83,124.95 L950.09,123.32 L949.34,121.69 L948.59,120.07 L947.84,118.44 L947.09,116.81 L946.33,115.19 L945.57,113.56 L944.81,111.93 L944.04,110.30 L943.27,108.68 L942.49,107.05 L941.72,105.42 L940.94,103.79 L940.15,102.17 L939.37,100.54 L938.58,98.91 L937.79,97.28 L936.99,95.66 L936.20,94.03 L935.40,92.40 L934.60,90.77 L933.79,89.15 L932.98,87.52 L932.18,85.89 L931.36,84.26 L930.55,82.64 L929.73,81.01 L928.92,79.38 L928.10,77.75 L927.27,76.12 L926.45,74.50 L925.62,72.87 L924.80,71.24 L923.97,69.62 L923.14,67.99 L922.30,66.36 L921.47,64.73 L920.63,63.11 L919.80,61.48 L918.96,59.85 L918.12,58.22 L917.28,56.60 L916.43,54.97 L915.59,53.34 L914.75,51.71 L913.90,50.09 L913.05,48.46 L912.21,46.83 L911.36,45.20 L910.51,43.57 L909.66,41.95 L908.81,40.32 L907.96,38.69 L907.11,37.06 L906.26,35.44 L905.41,33.81 L904.56,32.18 L903.70,30.56 L902.85,28.93 L902.00,27.30 M902.00,613.20 L902.43,611.57 L902.85,609.94 L903.28,608.32 L903.70,606.69 L904.13,605.06 L904.56,603.43 L904.98,601.81 L905.41,600.18 L905.83,598.55 L906.26,596.92 L906.68,595.30 L907.10,593.67 L907.53,592.04 L907.95,590.41 L908.37,588.79 L908.80,587.16 L909.22,585.53 L909.64,583.90 L910.06,582.28 L910.48,580.65 L910.90,579.02 L911.32,577.39 L911.73,575.77 L912.15,574.14 L912.57,572.51 L912.98,570.88 L913.40,569.26 L913.81,567.63 L914.22,566.00 L914.64,564.38 L915.05,562.75 L915.46,561.12 L915.87,559.49 L916.28,557.87 L916.68,556.24 L917.09,554.61 L917.49,552.98 L917.90,551.36 L918.30,549.73 L918.70,548.10 L919.10,546.47 L919.50,544.85 L919.89,543.22 L920.29,541.59 L920.68,539.96 L921.08,538.34 L921.47,536.71 L921.86,535.08 L922.25,533.45 L922.63,531.83 L923.02,530.20 L923.40,528.57 L923.79,526.94 L924.17,525.32 L924.54,523.69 L924.92,522.06 L925.30,520.43 L925.67,518.81 L926.04,517.18 L926.41,515.55 L926.78,513.92 L927.15,512.29 L927.51,510.67 L927.87,509.04 L928.23,507.41 L928.59,505.78 L928.95,504.16 L929.30,502.53 L929.65,500.90 L930.00,499.27 L930.35,497.65 L930.70,496.02 L931.04,494.39 L931.38,492.76 L931.72,491.14 L932.06,489.51 L932.39,487.88 L932.73,486.25 L933.06,484.63 L933.38,483.00 L933.71,481.37 L934.03,479.75 L934.35,478.12 L934.67,476.49 L934.99,474.86 L935.30,473.24 L935.61,471.61 L935.92,469.98 L936.22,468.35 L936.52,466.73 L936.82,465.10 L937.12,463.47 L937.42,461.84 L937.71,460.22 L938.00,458.59 L938.28,456.96 L938.57,455.33 L938.85,453.70 L939.13,452.08 L939.40,450.45 L939.67,448.82 L939.94,447.19 L940.21,445.57 L940.47,443.94 L940.74,442.31 L940.99,440.69 L941.25,439.06 L941.50,437.43 L941.75,435.80 L942.00,434.18 L942.24,432.55 L942.48,430.92 L942.71,429.29 L942.95,427.66 L943.18,426.04 L943.41,424.41 L943.63,422.78 L943.85,421.15 L944.07,419.53 L944.28,417.90 L944.50,416.27 L944.70,414.64 L944.91,413.02 L945.11,411.39 L945.31,409.76 L945.50,408.13 L945.70,406.51 L945.88,404.88 L946.07,403.25 L946.25,401.62 L946.43,400.00 L946.60,398.37 L946.78,396.74 L946.94,395.12 L947.11,393.49 L947.27,391.86 L947.43,390.23 L947.58,388.61 L947.73,386.98 L947.88,385.35 L948.02,383.72 L948.16,382.10 L948.30,380.47 L948.44,378.84 L948.57,377.21 L948.69,375.58 L948.81,373.96 L948.93,372.33 L949.05,370.70 L949.16,369.07 L949.27,367.45 L949.37,365.82 L949.48,364.19 L949.57,362.56 L949.67,360.94 L949.76,359.31 L949.84,357.68 L949.93,356.06 L950.01,354.43 L950.08,352.80 L950.16,351.17 L950.22,349.55 L950.29,347.92 L950.35,346.29 L950.41,344.66 L950.46,343.04 L950.51,341.41 L950.56,339.78 L950.60,338.15 L950.64,336.52 L950.67,334.90 L950.71,333.27 L950.73,331.64 L950.76,330.01 L950.78,328.39 L950.80,326.76 L950.81,325.13 L950.82,323.50 L950.82,321.88 L950.83,320.25 L950.82,318.62 L950.82,317.00 L950.81,315.37 L950.80,313.74 L950.78,312.11 L950.76,310.49 L950.73,308.86 L950.71,307.23 L950.67,305.60 L950.64,303.98 L950.60,302.35 L950.56,300.72 L950.51,299.09 L950.46,297.46 L950.41,295.84 L950.35,294.21 L950.29,292.58 L950.22,290.95 L950.16,289.33 L950.08,287.70 L950.01,286.07 L949.93,284.44 L949.84,282.82 L949.76,281.19 L949.67,279.56 L949.57,277.94 L949.48,276.31 L949.37,274.68 L949.27,273.05 L949.16,271.43 L949.05,269.80 L948.93,268.17 L948.81,266.54 L948.69,264.92 L948.57,263.29 L948.44,261.66 L948.30,260.03 L948.16,258.40 L948.02,256.78 L947.88,255.15 L947.73,253.52 L947.58,251.89 L947.43,250.27 L947.27,248.64 L947.11,247.01 L946.94,245.38 L946.78,243.76 L946.60,242.13 L946.43,240.50 L946.25,238.88 L946.07,237.25 L945.88,235.62 L945.70,233.99 L945.50,232.37 L945.31,230.74 L945.11,229.11 L944.91,227.48 L944.70,225.86 L944.50,224.23 L944.28,222.60 L944.07,220.97 L943.85,219.34 L943.63,217.72 L943.41,216.09 L943.18,214.46 L942.95,212.84 L942.71,211.21 L942.48,209.58 L942.24,207.95 L942.00,206.32 L941.75,204.70 L941.50,203.07 L941.25,201.44 L940.99,199.81 L940.74,198.19 L940.47,196.56 L940.21,194.93 L939.94,193.31 L939.67,191.68 L939.40,190.05 L939.13,188.42 L938.85,186.80 L938.57,185.17 L938.28,183.54 L938.00,181.91 L937.71,180.28 L937.42,178.66 L937.12,177.03 L936.82,175.40 L936.52,173.78 L936.22,172.15 L935.92,170.52 L935.61,168.89 L935.30,167.27 L934.99,165.64 L934.67,164.01 L934.35,162.38 L934.03,160.75 L933.71,159.13 L933.38,157.50 L933.06,155.87 L932.73,154.25 L932.39,152.62 L932.06,150.99 L931.72,149.36 L931.38,147.74 L931.04,146.11 L930.70,144.48 L930.35,142.85 L930.00,141.22 L929.65,139.60 L929.30,137.97 L928.95,136.34 L928.59,134.72 L928.23,133.09 L927.87,131.46 L927.51,129.83 L927.15,128.21 L926.78,126.58 L926.41,124.95 L926.04,123.32 L925.67,121.69 L925.30,120.07 L924.92,118.44 L924.54,116.81 L924.17,115.19 L923.79,113.56 L923.40,111.93 L923.02,110.30 L922.63,108.68 L922.25,107.05 L921.86,105.42 L921.47,103.79 L921.08,102.17 L920.68,100.54 L920.29,98.91 L919.89,97.28 L919.50,95.66 L919.10,94.03 L918.70,92.40 L918.30,90.77 L917.90,89.15 L917.49,87.52 L917.09,85.89 L916.68,84.26 L916.28,82.64 L915.87,81.01 L915.46,79.38 L915.05,77.75 L914.64,76.12 L914.22,74.50 L913.81,72.87 L913.40,71.24 L912.98,69.62 L912.57,67.99 L912.15,66.36 L911.73,64.73 L911.32,63.11 L910.90,61.48 L910.48,59.85 L910.06,58.22 L909.64,56.60 L909.22,54.97 L908.80,53.34 L908.37,51.71 L907.95,50.09 L907.53,48.46 L907.10,46.83 L906.68,45.20 L906.26,43.57 L905.83,41.95 L905.41,40.32 L904.98,38.69 L904.56,37.06 L904.13,35.44 L903.70,33.81 L903.28,32.18 L902.85,30.56 L902.43,28.93 L902.00,27.30 M902.00,613.20 L902.00,611.57 L902.00,609.94 L902.00,608.32 L902.00,606.69 L902.00,605.06 L902.00,603.43 L902.00,601.81 L902.00,600.18 L902.00,598.55 L902.00,596.92 L902.00,595.30 L902.00,593.67 L902.00,592.04 L902.00,590.41 L902.00,588.79 L902.00,587.16 L902.00,585.53 L902.00,583.90 L902.00,582.28 L902.00,580.65 L902.00,579.02 L902.00,577.39 L902.00,575.77 L902.00,574.14 L902.00,572.51 L902.00,570.88 L902.00,569.26 L902.00,567.63 L902.00,566.00 L902.00,564.38 L902.00,562.75 L902.00,561.12 L902.00,559.49 L902.00,557.87 L902.00,556.24 L902.00,554.61 L902.00,552.98 L902.00,551.36 L902.00,549.73 L902.00,548.10 L902.00,546.47 L902.00,544.85 L902.00,543.22 L902.00,541.59 L902.00,539.96 L902.00,538.34 L902.00,536.71 L902.00,535.08 L902.00,533.45 L902.00,531.83 L902.00,530.20 L902.00,528.57 L902.00,526.94 L902.00,525.32 L902.00,523.69 L902.00,522.06 L902.00,520.43 L902.00,518.81 L902.00,517.18 L902.00,515.55 L902.00,513.92 L902.00,512.29 L902.00,510.67 L902.00,509.04 L902.00,507.41 L902.00,505.78 L902.00,504.16 L902.00,502.53 L902.00,500.90 L902.00,499.27 L902.00,497.65 L902.00,496.02 L902.00,494.39 L902.00,492.76 L902.00,491.14 L902.00,489.51 L902.00,487.88 L902.00,486.25 L902.00,484.63 L902.00,483.00 L902.00,481.37 L902.00,479.75 L902.00,478.12 L902.00,476.49 L902.00,474.86 L902.00,473.24 L902.00,471.61 L902.00,469.98 L902.00,468.35 L902.00,466.73 L902.00,465.10 L902.00,463.47 L902.00,461.84 L902.00,460.22 L902.00,458.59 L902.00,456.96 L902.00,455.33 L902.00,453.70 L902.00,452.08 L902.00,450.45 L902.00,448.82 L902.00,447.19 L902.00,445.57 L902.00,443.94 L902.00,442.31 L902.00,440.69 L902.00,439.06 L902.00,437.43 L902.00,435.80 L902.00,434.18 L902.00,432.55 L902.00,430.92 L902.00,429.29 L902.00,427.66 L902.00,426.04 L902.00,424.41 L902.00,422.78 L902.00,421.15 L902.00,419.53 L902.00,417.90 L902.00,416.27 L902.00,414.64 L902.00,413.02 L902.00,411.39 L902.00,409.76 L902.00,408.13 L902.00,406.51 L902.00,404.88 L902.00,403.25 L902.00,401.62 L902.00,400.00 L902.00,398.37 L902.00,396.74 L902.00,395.12 L902.00,393.49 L902.00,391.86 L902.00,390.23 L902.00,388.61 L902.00,386.98 L902.00,385.35 L902.00,383.72 L902.00,382.10 L902.00,380.47 L902.00,378.84 L902.00,377.21 L902.00,375.58 L902.00,373.96 L902.00,372.33 L902.00,370.70 L902.00,369.07 L902.00,367.45 L902.00,365.82 L902.00,364.19 L902.00,362.56 L902.00,360.94 L902.00,359.31 L902.00,357.68 L902.00,356.06 L902.00,354.43 L902.00,352.80 L902.00,351.17 L902.00,349.55 L902.00,347.92 L902.00,346.29 L902.00,344.66 L902.00,343.04 L902.00,341.41 L902.00,339.78 L902.00,338.15 L902.00,336.52 L902.00,334.90 L902.00,333.27 L902.00,331.64 L902.00,330.01 L902.00,328.39 L902.00,326.76 L902.00,325.13 L902.00,323.50 L902.00,321.88 L902.00,320.25 L902.00,318.62 L902.00,317.00 L902.00,315.37 L902.00,313.74 L902.00,312.11 L902.00,310.49 L902.00,308.86 L902.00,307.23 L902.00,305.60 L902.00,303.98 L902.00,302.35 L902.00,300.72 L902.00,299.09 L902.00,297.46 L902.00,295.84 L902.00,294.21 L902.00,292.58 L902.00,290.95 L902.00,289.33 L902.00,287.70 L902.00,286.07 L902.00,284.44 L902.00,282.82 L902.00,281.19 L902.00,279.56 L902.00,277.94 L902.00,276.31 L902.00,274.68 L902.00,273.05 L902.00,271.43 L902.00,269.80 L902.00,268.17 L902.00,266.54 L902.00,264.92 L902.00,263.29 L902.00,261.66 L902.00,260.03 L902.00,258.40 L902.00,256.78 L902.00,255.15 L902.00,253.52 L902.00,251.89 L902.00,250.27 L902.00,248.64 L902.00,247.01 L902.00,245.38 L902.00,243.76 L902.00,242.13 L902.00,240.50 L902.00,238.88 L902.00,237.25 L902.00,235.62 L902.00,233.99 L902.00,232.37 L902.00,230.74 L902.00,229.11 L902.00,227.48 L902.00,225.86 L902.00,224.23 L902.00,222.60 L902.00,220.97 L902.00,219.34 L902.00,217.72 L902.00,216.09 L902.00,214.46 L902.00,212.84 L902.00,211.21 L902.00,209.58 L902.00,207.95 L902.00,206.32 L902.00,204.70 L902.00,203.07 L902.00,201.44 L902.00,199.81 L902.00,198.19 L902.00,196.56 L902.00,194.93 L902.00,193.31 L902.00,191.68 L902.00,190.05 L902.00,188.42 L902.00,186.80 L902.00,185.17 L902.00,183.54 L902.00,181.91 L902.00,180.28 L902.00,178.66 L902.00,177.03 L902.00,175.40 L902.00,173.78 L902.00,172.15 L902.00,170.52 L902.00,168.89 L902.00,167.27 L902.00,165.64 L902.00,164.01 L902.00,162.38 L902.00,160.75 L902.00,159.13 L902.00,157.50 L902.00,155.87 L902.00,154.25 L902.00,152.62 L902.00,150.99 L902.00,149.36 L902.00,147.74 L902.00,146.11 L902.00,144.48 L902.00,142.85 L902.00,141.22 L902.00,139.60 L902.00,137.97 L902.00,136.34 L902.00,134.72 L902.00,133.09 L902.00,131.46 L902.00,129.83 L902.00,128.21 L902.00,126.58 L902.00,124.95 L902.00,123.32 L902.00,121.69 L902.00,120.07 L902.00,118.44 L902.00,116.81 L902.00,115.19 L902.00,113.56 L902.00,111.93 L902.00,110.30 L902.00,108.68 L902.00,107.05 L902.00,105.42 L902.00,103.79 L902.00,102.17 L902.00,100.54 L902.00,98.91 L902.00,97.28 L902.00,95.66 L902.00,94.03 L902.00,92.40 L902.00,90.77 L902.00,89.15 L902.00,87.52 L902.00,85.89 L902.00,84.26 L902.00,82.64 L902.00,81.01 L902.00,79.38 L902.00,77.75 L902.00,76.12 L902.00,74.50 L902.00,72.87 L902.00,71.24 L902.00,69.62 L902.00,67.99 L902.00,66.36 L902.00,64.73 L902.00,63.11 L902.00,61.48 L902.00,59.85 L902.00,58.22 L902.00,56.60 L902.00,54.97 L902.00,53.34 L902.00,51.71 L902.00,50.09 L902.00,48.46 L902.00,46.83 L902.00,45.20 L902.00,43.57 L902.00,41.95 L902.00,40.32 L902.00,38.69 L902.00,37.06 L902.00,35.44 L902.00,33.81 L902.00,32.18 L902.00,30.56 L902.00,28.93 L902.00,27.30 M902.00,613.20 L901.57,611.57 L901.15,609.94 L900.72,608.32 L900.30,606.69 L899.87,605.06 L899.44,603.43 L899.02,601.81 L898.59,600.18 L898.17,598.55 L897.74,596.92 L897.32,595.30 L896.90,593.67 L896.47,592.04 L896.05,590.41 L895.63,588.79 L895.20,587.16 L894.78,585.53 L894.36,583.90 L893.94,582.28 L893.52,580.65 L893.10,579.02 L892.68,577.39 L892.27,575.77 L891.85,574.14 L891.43,572.51 L891.02,570.88 L890.60,569.26 L890.19,567.63 L889.78,566.00 L889.36,564.38 L888.95,562.75 L888.54,561.12 L888.13,559.49 L887.72,557.87 L887.32,556.24 L886.91,554.61 L886.51,552.98 L886.10,551.36 L885.70,549.73 L885.30,548.10 L884.90,546.47 L884.50,544.85 L884.11,543.22 L883.71,541.59 L883.32,539.96 L882.92,538.34 L882.53,536.71 L882.14,535.08 L881.75,533.45 L881.37,531.83 L880.98,530.20 L880.60,528.57 L880.21,526.94 L879.83,525.32 L879.46,523.69 L879.08,522.06 L878.70,520.43 L878.33,518.81 L877.96,517.18 L877.59,515.55 L877.22,513.92 L876.85,512.29 L876.49,510.67 L876.13,509.04 L875.77,507.41 L875.41,505.78 L875.05,504.16 L874.70,502.53 L874.35,500.90 L874.00,499.27 L873.65,497.65 L873.30,496.02 L872.96,494.39 L872.62,492.76 L872.28,491.14 L871.94,489.51 L871.61,487.88 L871.27,486.25 L870.94,484.63 L870.62,483.00 L870.29,481.37 L869.97,479.75 L869.65,478.12 L869.33,476.49 L869.01,474.86 L868.70,473.24 L868.39,471.61 L868.08,469.98 L867.78,468.35 L867.48,466.73 L867.18,465.10 L866.88,463.47 L866.58,461.84 L866.29,460.22 L866.00,458.59 L865.72,456.96 L865.43,455.33 L865.15,453.70 L864.87,452.08 L864.60,450.45 L864.33,448.82 L864.06,447.19 L863.79,445.57 L863.53,443.94 L863.26,442.31 L863.01,440.69 L862.75,439.06 L862.50,437.43 L862.25,435.80 L862.00,434.18 L861.76,432.55 L861.52,430.92 L861.29,429.29 L861.05,427.66 L860.82,426.04 L860.59,424.41 L860.37,422.78 L860.15,421.15 L859.93,419.53 L859.72,417.90 L859.50,416.27 L859.30,414.64 L859.09,413.02 L858.89,411.39 L858.69,409.76 L858.50,408.13 L858.30,406.51 L858.12,404.88 L857.93,403.25 L857.75,401.62 L857.57,400.00 L857.40,398.37 L857.22,396.74 L857.06,395.12 L856.89,393.49 L856.73,391.86 L856.57,390.23 L856.42,388.61 L856.27,386.98 L856.12,385.35 L855.98,383.72 L855.84,382.10 L855.70,380.47 L855.56,378.84 L855.43,377.21 L855.31,375.58 L855.19,373.96 L855.07,372.33 L854.95,370.70 L854.84,369.07 L854.73,367.45 L854.63,365.82 L854.52,364.19 L854.43,362.56 L854.33,360.94 L854.24,359.31 L854.16,357.68 L854.07,356.06 L853.99,354.43 L853.92,352.80 L853.84,351.17 L853.78,349.55 L853.71,347.92 L853.65,346.29 L853.59,344.66 L853.54,343.04 L853.49,341.41 L853.44,339.78 L853.40,338.15 L853.36,336.52 L853.33,334.90 L853.29,333.27 L853.27,331.64 L853.24,330.01 L853.22,328.39 L853.20,326.76 L853.19,325.13 L853.18,323.50 L853.18,321.88 L853.17,320.25 L853.18,318.62 L853.18,317.00 L853.19,315.37 L853.20,313.74 L853.22,312.11 L853.24,310.49 L853.27,308.86 L853.29,307.23 L853.33,305.60 L853.36,303.98 L853.40,302.35 L853.44,300.72 L853.49,299.09 L853.54,297.46 L853.59,295.84 L853.65,294.21 L853.71,292.58 L853.78,290.95 L853.84,289.33 L853.92,287.70 L853.99,286.07 L854.07,284.44 L854.16,282.82 L854.24,281.19 L854.33,279.56 L854.43,277.94 L854.52,276.31 L854.63,274.68 L854.73,273.05 L854.84,271.43 L854.95,269.80 L855.07,268.17 L855.19,266.54 L855.31,264.92 L855.43,263.29 L855.56,261.66 L855.70,260.03 L855.84,258.40 L855.98,256.78 L856.12,255.15 L856.27,253.52 L856.42,251.89 L856.57,250.27 L856.73,248.64 L856.89,247.01 L857.06,245.38 L857.22,243.76 L857.40,242.13 L857.57,240.50 L857.75,238.88 L857.93,237.25 L858.12,235.62 L858.30,233.99 L858.50,232.37 L858.69,230.74 L858.89,229.11 L859.09,227.48 L859.30,225.86 L859.50,224.23 L859.72,222.60 L859.93,220.97 L860.15,219.34 L860.37,217.72 L860.59,216.09 L860.82,214.46 L861.05,212.84 L861.29,211.21 L861.52,209.58 L861.76,207.95 L862.00,206.32 L862.25,204.70 L862.50,203.07 L862.75,201.44 L863.01,199.81 L863.26,198.19 L863.53,196.56 L863.79,194.93 L864.06,193.31 L864.33,191.68 L864.60,190.05 L864.87,188.42 L865.15,186.80 L865.43,185.17 L865.72,183.54 L866.00,181.91 L866.29,180.28 L866.58,178.66 L866.88,177.03 L867.18,175.40 L867.48,173.78 L867.78,172.15 L868.08,170.52 L868.39,168.89 L868.70,167.27 L869.01,165.64 L869.33,164.01 L869.65,162.38 L869.97,160.75 L870.29,159.13 L870.62,157.50 L870.94,155.87 L871.27,154.25 L871.61,152.62 L871.94,150.99 L872.28,149.36 L872.62,147.74 L872.96,146.11 L873.30,144.48 L873.65,142.85 L874.00,141.22 L874.35,139.60 L874.70,137.97 L875.05,136.34 L875.41,134.72 L875.77,133.09 L876.13,131.46 L876.49,129.83 L876.85,128.21 L877.22,126.58 L877.59,124.95 L877.96,123.32 L878.33,121.69 L878.70,120.07 L879.08,118.44 L879.46,116.81 L879.83,115.19 L880.21,113.56 L880.60,111.93 L880.98,110.30 L881.37,108.68 L881.75,107.05 L882.14,105.42 L882.53,103.79 L882.92,102.17 L883.32,100.54 L883.71,98.91 L884.11,97.28 L884.50,95.66 L884.90,94.03 L885.30,92.40 L885.70,90.77 L886.10,89.15 L886.51,87.52 L886.91,85.89 L887.32,84.26 L887.72,82.64 L888.13,81.01 L888.54,79.38 L888.95,77.75 L889.36,76.12 L889.78,74.50 L890.19,72.87 L890.60,71.24 L891.02,69.62 L891.43,67.99 L891.85,66.36 L892.27,64.73 L892.68,63.11 L893.10,61.48 L893.52,59.85 L893.94,58.22 L894.36,56.60 L894.78,54.97 L895.20,53.34 L895.63,51.71 L896.05,50.09 L896.47,48.46 L896.90,46.83 L897.32,45.20 L897.74,43.57 L898.17,41.95 L898.59,40.32 L899.02,38.69 L899.44,37.06 L899.87,35.44 L900.30,33.81 L900.72,32.18 L901.15,30.56 L901.57,28.93 L902.00,27.30 M902.00,613.20 L901.15,611.57 L900.30,609.94 L899.44,608.32 L898.59,606.69 L897.74,605.06 L896.89,603.43 L896.04,601.81 L895.19,600.18 L894.34,598.55 L893.49,596.92 L892.64,595.30 L891.79,593.67 L890.95,592.04 L890.10,590.41 L889.25,588.79 L888.41,587.16 L887.57,585.53 L886.72,583.90 L885.88,582.28 L885.04,580.65 L884.20,579.02 L883.37,577.39 L882.53,575.77 L881.70,574.14 L880.86,572.51 L880.03,570.88 L879.20,569.26 L878.38,567.63 L877.55,566.00 L876.73,564.38 L875.90,562.75 L875.08,561.12 L874.27,559.49 L873.45,557.87 L872.64,556.24 L871.82,554.61 L871.02,552.98 L870.21,551.36 L869.40,549.73 L868.60,548.10 L867.80,546.47 L867.01,544.85 L866.21,543.22 L865.42,541.59 L864.63,539.96 L863.85,538.34 L863.06,536.71 L862.28,535.08 L861.51,533.45 L860.73,531.83 L859.96,530.20 L859.19,528.57 L858.43,526.94 L857.67,525.32 L856.91,523.69 L856.16,522.06 L855.41,520.43 L854.66,518.81 L853.91,517.18 L853.17,515.55 L852.44,513.92 L851.71,512.29 L850.98,510.67 L850.25,509.04 L849.53,507.41 L848.82,505.78 L848.10,504.16 L847.39,502.53 L846.69,500.90 L845.99,499.27 L845.29,497.65 L844.60,496.02 L843.92,494.39 L843.23,492.76 L842.55,491.14 L841.88,489.51 L841.21,487.88 L840.55,486.25 L839.89,484.63 L839.23,483.00 L838.58,481.37 L837.94,479.75 L837.30,478.12 L836.66,476.49 L836.03,474.86 L835.40,473.24 L834.78,471.61 L834.17,469.98 L833.56,468.35 L832.95,466.73 L832.35,465.10 L831.76,463.47 L831.17,461.84 L830.58,460.22 L830.00,458.59 L829.43,456.96 L828.86,455.33 L828.30,453.70 L827.75,452.08 L827.20,450.45 L826.65,448.82 L826.11,447.19 L825.58,445.57 L825.05,443.94 L824.53,442.31 L824.01,440.69 L823.50,439.06 L823.00,437.43 L822.50,435.80 L822.01,434.18 L821.52,432.55 L821.04,430.92 L820.57,429.29 L820.10,427.66 L819.64,426.04 L819.19,424.41 L818.74,422.78 L818.30,421.15 L817.86,419.53 L817.43,417.90 L817.01,416.27 L816.59,414.64 L816.18,413.02 L815.78,411.39 L815.38,409.76 L814.99,408.13 L814.61,406.51 L814.23,404.88 L813.86,403.25 L813.50,401.62 L813.14,400.00 L812.79,398.37 L812.45,396.74 L812.11,395.12 L811.78,393.49 L811.46,391.86 L811.14,390.23 L810.84,388.61 L810.53,386.98 L810.24,385.35 L809.95,383.72 L809.67,382.10 L809.40,380.47 L809.13,378.84 L808.87,377.21 L808.62,375.58 L808.37,373.96 L808.13,372.33 L807.90,370.70 L807.68,369.07 L807.46,367.45 L807.25,365.82 L807.05,364.19 L806.85,362.56 L806.66,360.94 L806.48,359.31 L806.31,357.68 L806.14,356.06 L805.99,354.43 L805.83,352.80 L805.69,351.17 L805.55,349.55 L805.42,347.92 L805.30,346.29 L805.19,344.66 L805.08,343.04 L804.98,341.41 L804.88,339.78 L804.80,338.15 L804.72,336.52 L804.65,334.90 L804.59,333.27 L804.53,331.64 L804.48,330.01 L804.44,328.39 L804.41,326.76 L804.38,325.13 L804.36,323.50 L804.35,321.88 L804.35,320.25 L804.35,318.62 L804.36,317.00 L804.38,315.37 L804.41,313.74 L804.44,312.11 L804.48,310.49 L804.53,308.86 L804.59,307.23 L804.65,305.60 L804.72,303.98 L804.80,302.35 L804.88,300.72 L804.98,299.09 L805.08,297.46 L805.19,295.84 L805.30,294.21 L805.42,292.58 L805.55,290.95 L805.69,289.33 L805.83,287.70 L805.99,286.07 L806.14,284.44 L806.31,282.82 L806.48,281.19 L806.66,279.56 L806.85,277.94 L807.05,276.31 L807.25,274.68 L807.46,273.05 L807.68,271.43 L807.90,269.80 L808.13,268.17 L808.37,266.54 L808.62,264.92 L808.87,263.29 L809.13,261.66 L809.40,260.03 L809.67,258.40 L809.95,256.78 L810.24,255.15 L810.53,253.52 L810.84,251.89 L811.14,250.27 L811.46,248.64 L811.78,247.01 L812.11,245.38 L812.45,243.76 L812.79,242.13 L813.14,240.50 L813.50,238.88 L813.86,237.25 L814.23,235.62 L814.61,233.99 L814.99,232.37 L815.38,230.74 L815.78,229.11 L816.18,227.48 L816.59,225.86 L817.01,224.23 L817.43,222.60 L817.86,220.97 L818.30,219.34 L818.74,217.72 L819.19,216.09 L819.64,214.46 L820.10,212.84 L820.57,211.21 L821.04,209.58 L821.52,207.95 L822.01,206.32 L822.50,204.70 L823.00,203.07 L823.50,201.44 L824.01,199.81 L824.53,198.19 L825.05,196.56 L825.58,194.93 L826.11,193.31 L826.65,191.68 L827.20,190.05 L827.75,188.42 L828.30,186.80 L828.86,185.17 L829.43,183.54 L830.00,181.91 L830.58,180.28 L831.17,178.66 L831.76,177.03 L832.35,175.40 L832.95,173.78 L833.56,172.15 L834.17,170.52 L834.78,168.89 L835.40,167.27 L836.03,165.64 L836.66,164.01 L837.30,162.38 L837.94,160.75 L838.58,159.13 L839.23,157.50 L839.89,155.87 L840.55,154.25 L841.21,152.62 L841.88,150.99 L842.55,149.36 L843.23,147.74 L843.92,146.11 L844.60,144.48 L845.29,142.85 L845.99,141.22 L846.69,139.60 L847.39,137.97 L848.10,136.34 L848.82,134.72 L849.53,133.09 L850.25,131.46 L850.98,129.83 L851.71,128.21 L852.44,126.58 L853.17,124.95 L853.91,123.32 L854.66,121.69 L855.41,120.07 L856.16,118.44 L856.91,116.81 L857.67,115.19 L858.43,113.56 L859.19,111.93 L859.96,110.30 L860.73,108.68 L861.51,107.05 L862.28,105.42 L863.06,103.79 L863.85,102.17 L864.63,100.54 L865.42,98.91 L866.21,97.28 L867.01,95.66 L867.80,94.03 L868.60,92.40 L869.40,90.77 L870.21,89.15 L871.02,87.52 L871.82,85.89 L872.64,84.26 L873.45,82.64 L874.27,81.01 L875.08,79.38 L875.90,77.75 L876.73,76.12 L877.55,74.50 L878.38,72.87 L879.20,71.24 L880.03,69.62 L880.86,67.99 L881.70,66.36 L882.53,64.73 L883.37,63.11 L884.20,61.48 L885.04,59.85 L885.88,58.22 L886.72,56.60 L887.57,54.97 L888.41,53.34 L889.25,51.71 L890.10,50.09 L890.95,48.46 L891.79,46.83 L892.64,45.20 L893.49,43.57 L894.34,41.95 L895.19,40.32 L896.04,38.69 L896.89,37.06 L897.74,35.44 L898.59,33.81 L899.44,32.18 L900.30,30.56 L901.15,28.93 L902.00,27.30 M902.00,613.20 L900.72,611.57 L899.44,609.94 L898.17,608.32 L896.89,606.69 L895.61,605.06 L894.33,603.43 L893.06,601.81 L891.78,600.18 L890.51,598.55 L889.23,596.92 L887.96,595.30 L886.69,593.67 L885.42,592.04 L884.15,590.41 L882.88,588.79 L881.61,587.16 L880.35,585.53 L879.09,583.90 L877.82,582.28 L876.56,580.65 L875.31,579.02 L874.05,577.39 L872.80,575.77 L871.55,574.14 L870.30,572.51 L869.05,570.88 L867.81,569.26 L866.56,567.63 L865.33,566.00 L864.09,564.38 L862.86,562.75 L861.63,561.12 L860.40,559.49 L859.17,557.87 L857.95,556.24 L856.74,554.61 L855.52,552.98 L854.31,551.36 L853.11,549.73 L851.90,548.10 L850.70,546.47 L849.51,544.85 L848.32,543.22 L847.13,541.59 L845.95,539.96 L844.77,538.34 L843.59,536.71 L842.42,535.08 L841.26,533.45 L840.10,531.83 L838.94,530.20 L837.79,528.57 L836.64,526.94 L835.50,525.32 L834.37,523.69 L833.23,522.06 L832.11,520.43 L830.99,518.81 L829.87,517.18 L828.76,515.55 L827.66,513.92 L826.56,512.29 L825.47,510.67 L824.38,509.04 L823.30,507.41 L822.22,505.78 L821.16,504.16 L820.09,502.53 L819.04,500.90 L817.99,499.27 L816.94,497.65 L815.90,496.02 L814.87,494.39 L813.85,492.76 L812.83,491.14 L811.82,489.51 L810.82,487.88 L809.82,486.25 L808.83,484.63 L807.85,483.00 L806.87,481.37 L805.90,479.75 L804.94,478.12 L803.99,476.49 L803.04,474.86 L802.10,473.24 L801.17,471.61 L800.25,469.98 L799.33,468.35 L798.43,466.73 L797.53,465.10 L796.63,463.47 L795.75,461.84 L794.87,460.22 L794.01,458.59 L793.15,456.96 L792.30,455.33 L791.45,453.70 L790.62,452.08 L789.79,450.45 L788.98,448.82 L788.17,447.19 L787.37,445.57 L786.58,443.94 L785.79,442.31 L785.02,440.69 L784.26,439.06 L783.50,437.43 L782.75,435.80 L782.01,434.18 L781.29,432.55 L780.57,430.92 L779.86,429.29 L779.16,427.66 L778.46,426.04 L777.78,424.41 L777.11,422.78 L776.45,421.15 L775.79,419.53 L775.15,417.90 L774.51,416.27 L773.89,414.64 L773.28,413.02 L772.67,411.39 L772.08,409.76 L771.49,408.13 L770.91,406.51 L770.35,404.88 L769.79,403.25 L769.25,401.62 L768.71,400.00 L768.19,398.37 L767.67,396.74 L767.17,395.12 L766.67,393.49 L766.19,391.86 L765.72,390.23 L765.25,388.61 L764.80,386.98 L764.36,385.35 L763.93,383.72 L763.51,382.10 L763.09,380.47 L762.69,378.84 L762.30,377.21 L761.93,375.58 L761.56,373.96 L761.20,372.33 L760.85,370.70 L760.52,369.07 L760.19,367.45 L759.88,365.82 L759.57,364.19 L759.28,362.56 L759.00,360.94 L758.73,359.31 L758.47,357.68 L758.22,356.06 L757.98,354.43 L757.75,352.80 L757.53,351.17 L757.33,349.55 L757.13,347.92 L756.95,346.29 L756.78,344.66 L756.62,343.04 L756.47,341.41 L756.33,339.78 L756.20,338.15 L756.08,336.52 L755.98,334.90 L755.88,333.27 L755.80,331.64 L755.73,330.01 L755.66,328.39 L755.61,326.76 L755.58,325.13 L755.55,323.50 L755.53,321.88 L755.52,320.25 L755.53,318.62 L755.55,317.00 L755.58,315.37 L755.61,313.74 L755.66,312.11 L755.73,310.49 L755.80,308.86 L755.88,307.23 L755.98,305.60 L756.08,303.98 L756.20,302.35 L756.33,300.72 L756.47,299.09 L756.62,297.46 L756.78,295.84 L756.95,294.21 L757.13,292.58 L757.33,290.95 L757.53,289.33 L757.75,287.70 L757.98,286.07 L758.22,284.44 L758.47,282.82 L758.73,281.19 L759.00,279.56 L759.28,277.94 L759.57,276.31 L759.88,274.68 L760.19,273.05 L760.52,271.43 L760.85,269.80 L761.20,268.17 L761.56,266.54 L761.93,264.92 L762.30,263.29 L762.69,261.66 L763.09,260.03 L763.51,258.40 L763.93,256.78 L764.36,255.15 L764.80,253.52 L765.25,251.89 L765.72,250.27 L766.19,248.64 L766.67,247.01 L767.17,245.38 L767.67,243.76 L768.19,242.13 L768.71,240.50 L769.25,238.88 L769.79,237.25 L770.35,235.62 L770.91,233.99 L771.49,232.37 L772.08,230.74 L772.67,229.11 L773.28,227.48 L773.89,225.86 L774.51,224.23 L775.15,222.60 L775.79,220.97 L776.45,219.34 L777.11,217.72 L777.78,216.09 L778.46,214.46 L779.16,212.84 L779.86,211.21 L780.57,209.58 L781.29,207.95 L782.01,206.32 L782.75,204.70 L783.50,203.07 L784.26,201.44 L785.02,199.81 L785.79,198.19 L786.58,196.56 L787.37,194.93 L788.17,193.31 L788.98,191.68 L789.79,190.05 L790.62,188.42 L791.45,186.80 L792.30,185.17 L793.15,183.54 L794.01,181.91 L794.87,180.28 L795.75,178.66 L796.63,177.03 L797.53,175.40 L798.43,173.78 L799.33,172.15 L800.25,170.52 L801.17,168.89 L802.10,167.27 L803.04,165.64 L803.99,164.01 L804.94,162.38 L805.90,160.75 L806.87,159.13 L807.85,157.50 L808.83,155.87 L809.82,154.25 L810.82,152.62 L811.82,150.99 L812.83,149.36 L813.85,147.74 L814.87,146.11 L815.90,144.48 L816.94,142.85 L817.99,141.22 L819.04,139.60 L820.09,137.97 L821.16,136.34 L822.22,134.72 L823.30,133.09 L824.38,131.46 L825.47,129.83 L826.56,128.21 L827.66,126.58 L828.76,124.95 L829.87,123.32 L830.99,121.69 L832.11,120.07 L833.23,118.44 L834.37,116.81 L835.50,115.19 L836.64,113.56 L837.79,111.93 L838.94,110.30 L840.10,108.68 L841.26,107.05 L842.42,105.42 L843.59,103.79 L844.77,102.17 L845.95,100.54 L847.13,98.91 L848.32,97.28 L849.51,95.66 L850.70,94.03 L851.90,92.40 L853.11,90.77 L854.31,89.15 L855.52,87.52 L856.74,85.89 L857.95,84.26 L859.17,82.64 L860.40,81.01 L861.63,79.38 L862.86,77.75 L864.09,76.12 L865.33,74.50 L866.56,72.87 L867.81,71.24 L869.05,69.62 L870.30,67.99 L871.55,66.36 L872.80,64.73 L874.05,63.11 L875.31,61.48 L876.56,59.85 L877.82,58.22 L879.09,56.60 L880.35,54.97 L881.61,53.34 L882.88,51.71 L884.15,50.09 L885.42,48.46 L886.69,46.83 L887.96,45.20 L889.23,43.57 L890.51,41.95 L891.78,40.32 L893.06,38.69 L894.33,37.06 L895.61,35.44 L896.89,33.81 L898.17,32.18 L899.44,30.56 L900.72,28.93 L902.00,27.30 M902.00,613.20 L900.30,611.57 L898.59,609.94 L896.89,608.32 L895.18,606.69 L893.48,605.06 L891.78,603.43 L890.08,601.81 L888.38,600.18 L886.68,598.55 L884.98,596.92 L883.28,595.30 L881.59,593.67 L879.89,592.04 L878.20,590.41 L876.51,588.79 L874.82,587.16 L873.13,585.53 L871.45,583.90 L869.77,582.28 L868.09,580.65 L866.41,579.02 L864.74,577.39 L863.06,575.77 L861.39,574.14 L859.73,572.51 L858.07,570.88 L856.41,569.26 L854.75,567.63 L853.10,566.00 L851.45,564.38 L849.81,562.75 L848.17,561.12 L846.53,559.49 L844.90,557.87 L843.27,556.24 L841.65,554.61 L840.03,552.98 L838.42,551.36 L836.81,549.73 L835.20,548.10 L833.60,546.47 L832.01,544.85 L830.42,543.22 L828.84,541.59 L827.26,539.96 L825.69,538.34 L824.12,536.71 L822.56,535.08 L821.01,533.45 L819.46,531.83 L817.92,530.20 L816.39,528.57 L814.86,526.94 L813.34,525.32 L811.82,523.69 L810.31,522.06 L808.81,520.43 L807.32,518.81 L805.83,517.18 L804.35,515.55 L802.88,513.92 L801.41,512.29 L799.96,510.67 L798.51,509.04 L797.07,507.41 L795.63,505.78 L794.21,504.16 L792.79,502.53 L791.38,500.90 L789.98,499.27 L788.59,497.65 L787.21,496.02 L785.83,494.39 L784.47,492.76 L783.11,491.14 L781.76,489.51 L780.42,487.88 L779.09,486.25 L777.77,484.63 L776.46,483.00 L775.16,481.37 L773.87,479.75 L772.59,478.12 L771.32,476.49 L770.06,474.86 L768.81,473.24 L767.56,471.61 L766.33,469.98 L765.11,468.35 L763.90,466.73 L762.70,465.10 L761.51,463.47 L760.33,461.84 L759.17,460.22 L758.01,458.59 L756.86,456.96 L755.73,455.33 L754.61,453.70 L753.49,452.08 L752.39,450.45 L751.30,448.82 L750.22,447.19 L749.16,445.57 L748.10,443.94 L747.06,442.31 L746.03,440.69 L745.01,439.06 L744.00,437.43 L743.00,435.80 L742.02,434.18 L741.05,432.55 L740.09,430.92 L739.14,429.29 L738.21,427.66 L737.29,426.04 L736.38,424.41 L735.48,422.78 L734.60,421.15 L733.72,419.53 L732.87,417.90 L732.02,416.27 L731.19,414.64 L730.37,413.02 L729.56,411.39 L728.77,409.76 L727.99,408.13 L727.22,406.51 L726.47,404.88 L725.73,403.25 L725.00,401.62 L724.28,400.00 L723.58,398.37 L722.90,396.74 L722.23,395.12 L721.57,393.49 L720.92,391.86 L720.29,390.23 L719.67,388.61 L719.07,386.98 L718.48,385.35 L717.90,383.72 L717.34,382.10 L716.79,380.47 L716.26,378.84 L715.74,377.21 L715.23,375.58 L714.74,373.96 L714.27,372.33 L713.80,370.70 L713.35,369.07 L712.92,367.45 L712.50,365.82 L712.10,364.19 L711.71,362.56 L711.33,360.94 L710.97,359.31 L710.62,357.68 L710.29,356.06 L709.97,354.43 L709.67,352.80 L709.38,351.17 L709.10,349.55 L708.85,347.92 L708.60,346.29 L708.37,344.66 L708.16,343.04 L707.96,341.41 L707.77,339.78 L707.60,338.15 L707.44,336.52 L707.30,334.90 L707.18,333.27 L707.06,331.64 L706.97,330.01 L706.89,328.39 L706.82,326.76 L706.77,325.13 L706.73,323.50 L706.71,321.88 L706.70,320.25 L706.71,318.62 L706.73,317.00 L706.77,315.37 L706.82,313.74 L706.89,312.11 L706.97,310.49 L707.06,308.86 L707.18,307.23 L707.30,305.60 L707.44,303.98 L707.60,302.35 L707.77,300.72 L707.96,299.09 L708.16,297.46 L708.37,295.84 L708.60,294.21 L708.85,292.58 L709.10,290.95 L709.38,289.33 L709.67,287.70 L709.97,286.07 L710.29,284.44 L710.62,282.82 L710.97,281.19 L711.33,279.56 L711.71,277.94 L712.10,276.31 L712.50,274.68 L712.92,273.05 L713.35,271.43 L713.80,269.80 L714.27,268.17 L714.74,266.54 L715.23,264.92 L715.74,263.29 L716.26,261.66 L716.79,260.03 L717.34,258.40 L717.90,256.78 L718.48,255.15 L719.07,253.52 L719.67,251.89 L720.29,250.27 L720.92,248.64 L721.57,247.01 L722.23,245.38 L722.90,243.76 L723.58,242.13 L724.28,240.50 L725.00,238.88 L725.73,237.25 L726.47,235.62 L727.22,233.99 L727.99,232.37 L728.77,230.74 L729.56,229.11 L730.37,227.48 L731.19,225.86 L732.02,224.23 L732.87,222.60 L733.72,220.97 L734.60,219.34 L735.48,217.72 L736.38,216.09 L737.29,214.46 L738.21,212.84 L739.14,211.21 L740.09,209.58 L741.05,207.95 L742.02,206.32 L743.00,204.70 L744.00,203.07 L745.01,201.44 L746.03,199.81 L747.06,198.19 L748.10,196.56 L749.16,194.93 L750.22,193.31 L751.30,191.68 L752.39,190.05 L753.49,188.42 L754.61,186.80 L755.73,185.17 L756.86,183.54 L758.01,181.91 L759.17,180.28 L760.33,178.66 L761.51,177.03 L762.70,175.40 L763.90,173.78 L765.11,172.15 L766.33,170.52 L767.56,168.89 L768.81,167.27 L770.06,165.64 L771.32,164.01 L772.59,162.38 L773.87,160.75 L775.16,159.13 L776.46,157.50 L777.77,155.87 L779.09,154.25 L780.42,152.62 L781.76,150.99 L783.11,149.36 L784.47,147.74 L785.83,146.11 L787.21,144.48 L788.59,142.85 L789.98,141.22 L791.38,139.60 L792.79,137.97 L794.21,136.34 L795.63,134.72 L797.07,133.09 L798.51,131.46 L799.96,129.83 L801.41,128.21 L802.88,126.58 L804.35,124.95 L805.83,123.32 L807.32,121.69 L808.81,120.07 L810.31,118.44 L811.82,116.81 L813.34,115.19 L814.86,113.56 L816.39,111.93 L817.92,110.30 L819.46,108.68 L821.01,107.05 L822.56,105.42 L824.12,103.79 L825.69,102.17 L827.26,100.54 L828.84,98.91 L830.42,97.28 L832.01,95.66 L833.60,94.03 L835.20,92.40 L836.81,90.77 L838.42,89.15 L840.03,87.52 L841.65,85.89 L843.27,84.26 L844.90,82.64 L846.53,81.01 L848.17,79.38 L849.81,77.75 L851.45,76.12 L853.10,74.50 L854.75,72.87 L856.41,71.24 L858.07,69.62 L859.73,67.99 L861.39,66.36 L863.06,64.73 L864.74,63.11 L866.41,61.48 L868.09,59.85 L869.77,58.22 L871.45,56.60 L873.13,54.97 L874.82,53.34 L876.51,51.71 L878.20,50.09 L879.89,48.46 L881.59,46.83 L883.28,45.20 L884.98,43.57 L886.68,41.95 L888.38,40.32 L890.08,38.69 L891.78,37.06 L893.48,35.44 L895.18,33.81 L896.89,32.18 L898.59,30.56 L900.30,28.93 L902.00,27.30 M902.00,613.20 L899.87,611.57 L897.74,609.94 L895.61,608.32 L893.48,606.69 L891.35,605.06 L889.22,603.43 L887.10,601.81 L884.97,600.18 L882.85,598.55 L880.72,596.92 L878.60,595.30 L876.48,593.67 L874.36,592.04 L872.25,590.41 L870.14,588.79 L868.02,587.16 L865.92,585.53 L863.81,583.90 L861.71,582.28 L859.61,580.65 L857.51,579.02 L855.42,577.39 L853.33,575.77 L851.24,574.14 L849.16,572.51 L847.08,570.88 L845.01,569.26 L842.94,567.63 L840.88,566.00 L838.82,564.38 L836.76,562.75 L834.71,561.12 L832.66,559.49 L830.62,557.87 L828.59,556.24 L826.56,554.61 L824.54,552.98 L822.52,551.36 L820.51,549.73 L818.50,548.10 L816.51,546.47 L814.51,544.85 L812.53,543.22 L810.55,541.59 L808.58,539.96 L806.61,538.34 L804.66,536.71 L802.71,535.08 L800.76,533.45 L798.83,531.83 L796.90,530.20 L794.98,528.57 L793.07,526.94 L791.17,525.32 L789.28,523.69 L787.39,522.06 L785.51,520.43 L783.65,518.81 L781.79,517.18 L779.94,515.55 L778.10,513.92 L776.27,512.29 L774.45,510.67 L772.63,509.04 L770.83,507.41 L769.04,505.78 L767.26,504.16 L765.49,502.53 L763.73,500.90 L761.98,499.27 L760.24,497.65 L758.51,496.02 L756.79,494.39 L755.08,492.76 L753.39,491.14 L751.70,489.51 L750.03,487.88 L748.37,486.25 L746.72,484.63 L745.08,483.00 L743.45,481.37 L741.84,479.75 L740.24,478.12 L738.65,476.49 L737.07,474.86 L735.51,473.24 L733.96,471.61 L732.42,469.98 L730.89,468.35 L729.38,466.73 L727.88,465.10 L726.39,463.47 L724.92,461.84 L723.46,460.22 L722.01,458.59 L720.58,456.96 L719.16,455.33 L717.76,453.70 L716.37,452.08 L714.99,450.45 L713.63,448.82 L712.28,447.19 L710.95,445.57 L709.63,443.94 L708.32,442.31 L707.03,440.69 L705.76,439.06 L704.50,437.43 L703.25,435.80 L702.02,434.18 L700.81,432.55 L699.61,430.92 L698.43,429.29 L697.26,427.66 L696.11,426.04 L694.97,424.41 L693.85,422.78 L692.74,421.15 L691.65,419.53 L690.58,417.90 L689.52,416.27 L688.48,414.64 L687.46,413.02 L686.45,411.39 L685.46,409.76 L684.48,408.13 L683.52,406.51 L682.58,404.88 L681.66,403.25 L680.75,401.62 L679.86,400.00 L678.98,398.37 L678.12,396.74 L677.28,395.12 L676.46,393.49 L675.65,391.86 L674.86,390.23 L674.09,388.61 L673.33,386.98 L672.60,385.35 L671.88,383.72 L671.18,382.10 L670.49,380.47 L669.82,378.84 L669.17,377.21 L668.54,375.58 L667.93,373.96 L667.33,372.33 L666.75,370.70 L666.19,369.07 L665.65,367.45 L665.13,365.82 L664.62,364.19 L664.13,362.56 L663.66,360.94 L663.21,359.31 L662.78,357.68 L662.36,356.06 L661.96,354.43 L661.58,352.80 L661.22,351.17 L660.88,349.55 L660.56,347.92 L660.25,346.29 L659.96,344.66 L659.69,343.04 L659.44,341.41 L659.21,339.78 L659.00,338.15 L658.80,336.52 L658.63,334.90 L658.47,333.27 L658.33,331.64 L658.21,330.01 L658.11,328.39 L658.02,326.76 L657.96,325.13 L657.91,323.50 L657.88,321.88 L657.88,320.25 L657.88,318.62 L657.91,317.00 L657.96,315.37 L658.02,313.74 L658.11,312.11 L658.21,310.49 L658.33,308.86 L658.47,307.23 L658.63,305.60 L658.80,303.98 L659.00,302.35 L659.21,300.72 L659.44,299.09 L659.69,297.46 L659.96,295.84 L660.25,294.21 L660.56,292.58 L660.88,290.95 L661.22,289.33 L661.58,287.70 L661.96,286.07 L662.36,284.44 L662.78,282.82 L663.21,281.19 L663.66,279.56 L664.13,277.94 L664.62,276.31 L665.13,274.68 L665.65,273.05 L666.19,271.43 L666.75,269.80 L667.33,268.17 L667.93,266.54 L668.54,264.92 L669.17,263.29 L669.82,261.66 L670.49,260.03 L671.18,258.40 L671.88,256.78 L672.60,255.15 L673.33,253.52 L674.09,251.89 L674.86,250.27 L675.65,248.64 L676.46,247.01 L677.28,245.38 L678.12,243.76 L678.98,242.13 L679.86,240.50 L680.75,238.88 L681.66,237.25 L682.58,235.62 L683.52,233.99 L684.48,232.37 L685.46,230.74 L686.45,229.11 L687.46,227.48 L688.48,225.86 L689.52,224.23 L690.58,222.60 L691.65,220.97 L692.74,219.34 L693.85,217.72 L694.97,216.09 L696.11,214.46 L697.26,212.84 L698.43,211.21 L699.61,209.58 L700.81,207.95 L702.02,206.32 L703.25,204.70 L704.50,203.07 L705.76,201.44 L707.03,199.81 L708.32,198.19 L709.63,196.56 L710.95,194.93 L712.28,193.31 L713.63,191.68 L714.99,190.05 L716.37,188.42 L717.76,186.80 L719.16,185.17 L720.58,183.54 L722.01,181.91 L723.46,180.28 L724.92,178.66 L726.39,177.03 L727.88,175.40 L729.38,173.78 L730.89,172.15 L732.42,170.52 L733.96,168.89 L735.51,167.27 L737.07,165.64 L738.65,164.01 L740.24,162.38 L741.84,160.75 L743.45,159.13 L745.08,157.50 L746.72,155.87 L748.37,154.25 L750.03,152.62 L751.70,150.99 L753.39,149.36 L755.08,147.74 L756.79,146.11 L758.51,144.48 L760.24,142.85 L761.98,141.22 L763.73,139.60 L765.49,137.97 L767.26,136.34 L769.04,134.72 L770.83,133.09 L772.63,131.46 L774.45,129.83 L776.27,128.21 L778.10,126.58 L779.94,124.95 L781.79,123.32 L783.65,121.69 L785.51,120.07 L787.39,118.44 L789.28,116.81 L791.17,115.19 L793.07,113.56 L794.98,111.93 L796.90,110.30 L798.83,108.68 L800.76,107.05 L802.71,105.42 L804.66,103.79 L806.61,102.17 L808.58,100.54 L810.55,98.91 L812.53,97.28 L814.51,95.66 L816.51,94.03 L818.50,92.40 L820.51,90.77 L822.52,89.15 L824.54,87.52 L826.56,85.89 L828.59,84.26 L830.62,82.64 L832.66,81.01 L834.71,79.38 L836.76,77.75 L838.82,76.12 L840.88,74.50 L842.94,72.87 L845.01,71.24 L847.08,69.62 L849.16,67.99 L851.24,66.36 L853.33,64.73 L855.42,63.11 L857.51,61.48 L859.61,59.85 L861.71,58.22 L863.81,56.60 L865.92,54.97 L868.02,53.34 L870.14,51.71 L872.25,50.09 L874.36,48.46 L876.48,46.83 L878.60,45.20 L880.72,43.57 L882.85,41.95 L884.97,40.32 L887.10,38.69 L889.22,37.06 L891.35,35.44 L893.48,33.81 L895.61,32.18 L897.74,30.56 L899.87,28.93 L902.00,27.30 M902.00,613.20 L899.44,611.57 L896.89,609.94 L894.33,608.32 L891.78,606.69 L889.22,605.06 L886.67,603.43 L884.12,601.81 L881.56,600.18 L879.02,598.55 L876.47,596.92 L873.92,595.30 L871.38,593.67 L868.84,592.04 L866.30,590.41 L863.76,588.79 L861.23,587.16 L858.70,585.53 L856.17,583.90 L853.65,582.28 L851.13,580.65 L848.61,579.02 L846.10,577.39 L843.60,575.77 L841.09,574.14 L838.59,572.51 L836.10,570.88 L833.61,569.26 L831.13,567.63 L828.65,566.00 L826.18,564.38 L823.71,562.75 L821.25,561.12 L818.80,559.49 L816.35,557.87 L813.91,556.24 L811.47,554.61 L809.05,552.98 L806.62,551.36 L804.21,549.73 L801.81,548.10 L799.41,546.47 L797.02,544.85 L794.63,543.22 L792.26,541.59 L789.89,539.96 L787.54,538.34 L785.19,536.71 L782.85,535.08 L780.52,533.45 L778.19,531.83 L775.88,530.20 L773.58,528.57 L771.29,526.94 L769.00,525.32 L766.73,523.69 L764.47,522.06 L762.22,520.43 L759.98,518.81 L757.74,517.18 L755.52,515.55 L753.32,513.92 L751.12,512.29 L748.93,510.67 L746.76,509.04 L744.60,507.41 L742.45,505.78 L740.31,504.16 L738.18,502.53 L736.07,500.90 L733.97,499.27 L731.88,497.65 L729.81,496.02 L727.75,494.39 L725.70,492.76 L723.66,491.14 L721.64,489.51 L719.63,487.88 L717.64,486.25 L715.66,484.63 L713.70,483.00 L711.74,481.37 L709.81,479.75 L707.89,478.12 L705.98,476.49 L704.09,474.86 L702.21,473.24 L700.35,471.61 L698.50,469.98 L696.67,468.35 L694.85,466.73 L693.05,465.10 L691.27,463.47 L689.50,461.84 L687.75,460.22 L686.01,458.59 L684.30,456.96 L682.59,455.33 L680.91,453.70 L679.24,452.08 L677.59,450.45 L675.95,448.82 L674.34,447.19 L672.73,445.57 L671.15,443.94 L669.59,442.31 L668.04,440.69 L666.51,439.06 L665.00,437.43 L663.50,435.80 L662.03,434.18 L660.57,432.55 L659.13,430.92 L657.71,429.29 L656.31,427.66 L654.93,426.04 L653.56,424.41 L652.22,422.78 L650.89,421.15 L649.59,419.53 L648.30,417.90 L647.03,416.27 L645.78,414.64 L644.55,413.02 L643.34,411.39 L642.15,409.76 L640.98,408.13 L639.83,406.51 L638.70,404.88 L637.59,403.25 L636.50,401.62 L635.43,400.00 L634.38,398.37 L633.35,396.74 L632.34,395.12 L631.35,393.49 L630.38,391.86 L629.43,390.23 L628.51,388.61 L627.60,386.98 L626.72,385.35 L625.85,383.72 L625.01,382.10 L624.19,380.47 L623.39,378.84 L622.61,377.21 L621.85,375.58 L621.11,373.96 L620.40,372.33 L619.70,370.70 L619.03,369.07 L618.38,367.45 L617.75,365.82 L617.14,364.19 L616.56,362.56 L615.99,360.94 L615.45,359.31 L614.93,357.68 L614.43,356.06 L613.96,354.43 L613.50,352.80 L613.07,351.17 L612.66,349.55 L612.27,347.92 L611.90,346.29 L611.56,344.66 L611.23,343.04 L610.93,341.41 L610.65,339.78 L610.40,338.15 L610.16,336.52 L609.95,334.90 L609.76,333.27 L609.60,331.64 L609.45,330.01 L609.33,328.39 L609.23,326.76 L609.15,325.13 L609.09,323.50 L609.06,321.88 L609.05,320.25 L609.06,318.62 L609.09,317.00 L609.15,315.37 L609.23,313.74 L609.33,312.11 L609.45,310.49 L609.60,308.86 L609.76,307.23 L609.95,305.60 L610.16,303.98 L610.40,302.35 L610.65,300.72 L610.93,299.09 L611.23,297.46 L611.56,295.84 L611.90,294.21 L612.27,292.58 L612.66,290.95 L613.07,289.33 L613.50,287.70 L613.96,286.07 L614.43,284.44 L614.93,282.82 L615.45,281.19 L615.99,279.56 L616.56,277.94 L617.14,276.31 L617.75,274.68 L618.38,273.05 L619.03,271.43 L619.70,269.80 L620.40,268.17 L621.11,266.54 L621.85,264.92 L622.61,263.29 L623.39,261.66 L624.19,260.03 L625.01,258.40 L625.85,256.78 L626.72,255.15 L627.60,253.52 L628.51,251.89 L629.43,250.27 L630.38,248.64 L631.35,247.01 L632.34,245.38 L633.35,243.76 L634.38,242.13 L635.43,240.50 L636.50,238.88 L637.59,237.25 L638.70,235.62 L639.83,233.99 L640.98,232.37 L642.15,230.74 L643.34,229.11 L644.55,227.48 L645.78,225.86 L647.03,224.23 L648.30,222.60 L649.59,220.97 L650.89,219.34 L652.22,217.72 L653.56,216.09 L654.93,214.46 L656.31,212.84 L657.71,211.21 L659.13,209.58 L660.57,207.95 L662.03,206.32 L663.50,204.70 L665.00,203.07 L666.51,201.44 L668.04,199.81 L669.59,198.19 L671.15,196.56 L672.73,194.93 L674.34,193.31 L675.95,191.68 L677.59,190.05 L679.24,188.42 L680.91,186.80 L682.59,185.17 L684.30,183.54 L686.01,181.91 L687.75,180.28 L689.50,178.66 L691.27,177.03 L693.05,175.40 L694.85,173.78 L696.67,172.15 L698.50,170.52 L700.35,168.89 L702.21,167.27 L704.09,165.64 L705.98,164.01 L707.89,162.38 L709.81,160.75 L711.74,159.13 L713.70,157.50 L715.66,155.87 L717.64,154.25 L719.63,152.62 L721.64,150.99 L723.66,149.36 L725.70,147.74 L727.75,146.11 L729.81,144.48 L731.88,142.85 L733.97,141.22 L736.07,139.60 L738.18,137.97 L740.31,136.34 L742.45,134.72 L744.60,133.09 L746.76,131.46 L748.93,129.83 L751.12,128.21 L753.32,126.58 L755.52,124.95 L757.74,123.32 L759.98,121.69 L762.22,120.07 L764.47,118.44 L766.73,116.81 L769.00,115.19 L771.29,113.56 L773.58,111.93 L775.88,110.30 L778.19,108.68 L780.52,107.05 L782.85,105.42 L785.19,103.79 L787.54,102.17 L789.89,100.54 L792.26,98.91 L794.63,97.28 L797.02,95.66 L799.41,94.03 L801.81,92.40 L804.21,90.77 L806.62,89.15 L809.05,87.52 L811.47,85.89 L813.91,84.26 L816.35,82.64 L818.80,81.01 L821.25,79.38 L823.71,77.75 L826.18,76.12 L828.65,74.50 L831.13,72.87 L833.61,71.24 L836.10,69.62 L838.59,67.99 L841.09,66.36 L843.60,64.73 L846.10,63.11 L848.61,61.48 L851.13,59.85 L853.65,58.22 L856.17,56.60 L858.70,54.97 L861.23,53.34 L863.76,51.71 L866.30,50.09 L868.84,48.46 L871.38,46.83 L873.92,45.20 L876.47,43.57 L879.02,41.95 L881.56,40.32 L884.12,38.69 L886.67,37.06 L889.22,35.44 L891.78,33.81 L894.33,32.18 L896.89,30.56 L899.44,28.93 L902.00,27.30 M902.00,613.20 L899.02,611.57 L896.04,609.94 L893.05,608.32 L890.07,606.69 L887.09,605.06 L884.11,603.43 L881.14,601.81 L878.16,600.18 L875.18,598.55 L872.21,596.92 L869.24,595.30 L866.27,593.67 L863.31,592.04 L860.35,590.41 L857.39,588.79 L854.43,587.16 L851.48,585.53 L848.53,583.90 L845.59,582.28 L842.65,580.65 L839.72,579.02 L836.79,577.39 L833.86,575.77 L830.94,574.14 L828.03,572.51 L825.12,570.88 L822.21,569.26 L819.32,567.63 L816.43,566.00 L813.54,564.38 L810.66,562.75 L807.79,561.12 L804.93,559.49 L802.07,557.87 L799.23,556.24 L796.39,554.61 L793.55,552.98 L790.73,551.36 L787.91,549.73 L785.11,548.10 L782.31,546.47 L779.52,544.85 L776.74,543.22 L773.97,541.59 L771.21,539.96 L768.46,538.34 L765.72,536.71 L762.99,535.08 L760.27,533.45 L757.56,531.83 L754.86,530.20 L752.18,528.57 L749.50,526.94 L746.84,525.32 L744.19,523.69 L741.55,522.06 L738.92,520.43 L736.30,518.81 L733.70,517.18 L731.11,515.55 L728.54,513.92 L725.97,512.29 L723.42,510.67 L720.89,509.04 L718.36,507.41 L715.86,505.78 L713.36,504.16 L710.88,502.53 L708.42,500.90 L705.97,499.27 L703.53,497.65 L701.11,496.02 L698.70,494.39 L696.31,492.76 L693.94,491.14 L691.58,489.51 L689.24,487.88 L686.91,486.25 L684.60,484.63 L682.31,483.00 L680.03,481.37 L677.78,479.75 L675.53,478.12 L673.31,476.49 L671.10,474.86 L668.91,473.24 L666.74,471.61 L664.58,469.98 L662.45,468.35 L660.33,466.73 L658.23,465.10 L656.15,463.47 L654.09,461.84 L652.04,460.22 L650.02,458.59 L648.01,456.96 L646.03,455.33 L644.06,453.70 L642.11,452.08 L640.19,450.45 L638.28,448.82 L636.39,447.19 L634.52,445.57 L632.68,443.94 L630.85,442.31 L629.05,440.69 L627.26,439.06 L625.50,437.43 L623.76,435.80 L622.03,434.18 L620.33,432.55 L618.66,430.92 L617.00,429.29 L615.36,427.66 L613.75,426.04 L612.16,424.41 L610.59,422.78 L609.04,421.15 L607.52,419.53 L606.01,417.90 L604.53,416.27 L603.08,414.64 L601.64,413.02 L600.23,411.39 L598.84,409.76 L597.48,408.13 L596.13,406.51 L594.81,404.88 L593.52,403.25 L592.25,401.62 L591.00,400.00 L589.77,398.37 L588.57,396.74 L587.39,395.12 L586.24,393.49 L585.11,391.86 L584.01,390.23 L582.93,388.61 L581.87,386.98 L580.84,385.35 L579.83,383.72 L578.85,382.10 L577.89,380.47 L576.95,378.84 L576.04,377.21 L575.16,375.58 L574.30,373.96 L573.46,372.33 L572.66,370.70 L571.87,369.07 L571.11,367.45 L570.38,365.82 L569.67,364.19 L568.98,362.56 L568.33,360.94 L567.69,359.31 L567.09,357.68 L566.50,356.06 L565.95,354.43 L565.42,352.80 L564.91,351.17 L564.43,349.55 L563.98,347.92 L563.55,346.29 L563.15,344.66 L562.77,343.04 L562.42,341.41 L562.10,339.78 L561.80,338.15 L561.53,336.52 L561.28,334.90 L561.06,333.27 L560.86,331.64 L560.69,330.01 L560.55,328.39 L560.43,326.76 L560.34,325.13 L560.28,323.50 L560.24,321.88 L560.23,320.25 L560.24,318.62 L560.28,317.00 L560.34,315.37 L560.43,313.74 L560.55,312.11 L560.69,310.49 L560.86,308.86 L561.06,307.23 L561.28,305.60 L561.53,303.98 L561.80,302.35 L562.10,300.72 L562.42,299.09 L562.77,297.46 L563.15,295.84 L563.55,294.21 L563.98,292.58 L564.43,290.95 L564.91,289.33 L565.42,287.70 L565.95,286.07 L566.50,284.44 L567.09,282.82 L567.69,281.19 L568.33,279.56 L568.98,277.94 L569.67,276.31 L570.38,274.68 L571.11,273.05 L571.87,271.43 L572.66,269.80 L573.46,268.17 L574.30,266.54 L575.16,264.92 L576.04,263.29 L576.95,261.66 L577.89,260.03 L578.85,258.40 L579.83,256.78 L580.84,255.15 L581.87,253.52 L582.93,251.89 L584.01,250.27 L585.11,248.64 L586.24,247.01 L587.39,245.38 L588.57,243.76 L589.77,242.13 L591.00,240.50 L592.25,238.88 L593.52,237.25 L594.81,235.62 L596.13,233.99 L597.48,232.37 L598.84,230.74 L600.23,229.11 L601.64,227.48 L603.08,225.86 L604.53,224.23 L606.01,222.60 L607.52,220.97 L609.04,219.34 L610.59,217.72 L612.16,216.09 L613.75,214.46 L615.36,212.84 L617.00,211.21 L618.66,209.58 L620.33,207.95 L622.03,206.32 L623.76,204.70 L625.50,203.07 L627.26,201.44 L629.05,199.81 L630.85,198.19 L632.68,196.56 L634.52,194.93 L636.39,193.31 L638.28,191.68 L640.19,190.05 L642.11,188.42 L644.06,186.80 L646.03,185.17 L648.01,183.54 L650.02,181.91 L652.04,180.28 L654.09,178.66 L656.15,177.03 L658.23,175.40 L660.33,173.78 L662.45,172.15 L664.58,170.52 L666.74,168.89 L668.91,167.27 L671.10,165.64 L673.31,164.01 L675.53,162.38 L677.78,160.75 L680.03,159.13 L682.31,157.50 L684.60,155.87 L686.91,154.25 L689.24,152.62 L691.58,150.99 L693.94,149.36 L696.31,147.74 L698.70,146.11 L701.11,144.48 L703.53,142.85 L705.97,141.22 L708.42,139.60 L710.88,137.97 L713.36,136.34 L715.86,134.72 L718.36,133.09 L720.89,131.46 L723.42,129.83 L725.97,128.21 L728.54,126.58 L731.11,124.95 L733.70,123.32 L736.30,121.69 L738.92,120.07 L741.55,118.44 L744.19,116.81 L746.84,115.19 L749.50,113.56 L752.18,111.93 L754.86,110.30 L757.56,108.68 L760.27,107.05 L762.99,105.42 L765.72,103.79 L768.46,102.17 L771.21,100.54 L773.97,98.91 L776.74,97.28 L779.52,95.66 L782.31,94.03 L785.11,92.40 L787.91,90.77 L790.73,89.15 L793.55,87.52 L796.39,85.89 L799.23,84.26 L802.07,82.64 L804.93,81.01 L807.79,79.38 L810.66,77.75 L813.54,76.12 L816.43,74.50 L819.32,72.87 L822.21,71.24 L825.12,69.62 L828.03,67.99 L830.94,66.36 L833.86,64.73 L836.79,63.11 L839.72,61.48 L842.65,59.85 L845.59,58.22 L848.53,56.60 L851.48,54.97 L854.43,53.34 L857.39,51.71 L860.35,50.09 L863.31,48.46 L866.27,46.83 L869.24,45.20 L872.21,43.57 L875.18,41.95 L878.16,40.32 L881.14,38.69 L884.11,37.06 L887.09,35.44 L890.07,33.81 L893.05,32.18 L896.04,30.56 L899.02,28.93 L902.00,27.30 M902.00,613.20 L898.59,611.57 L895.18,609.94 L891.78,608.32 L888.37,606.69 L884.96,605.06 L881.56,603.43 L878.15,601.81 L874.75,600.18 L871.35,598.55 L867.96,596.92 L864.56,595.30 L861.17,593.67 L857.78,592.04 L854.40,590.41 L851.02,588.79 L847.64,587.16 L844.27,585.53 L840.90,583.90 L837.53,582.28 L834.17,580.65 L830.82,579.02 L827.47,577.39 L824.13,575.77 L820.79,574.14 L817.46,572.51 L814.13,570.88 L810.82,569.26 L807.51,567.63 L804.20,566.00 L800.91,564.38 L797.62,562.75 L794.34,561.12 L791.06,559.49 L787.80,557.87 L784.54,556.24 L781.30,554.61 L778.06,552.98 L774.83,551.36 L771.62,549.73 L768.41,548.10 L765.21,546.47 L762.02,544.85 L758.84,543.22 L755.68,541.59 L752.52,539.96 L749.38,538.34 L746.25,536.71 L743.13,535.08 L740.02,533.45 L736.93,531.83 L733.84,530.20 L730.77,528.57 L727.72,526.94 L724.67,525.32 L721.64,523.69 L718.62,522.06 L715.62,520.43 L712.63,518.81 L709.66,517.18 L706.70,515.55 L703.76,513.92 L700.83,512.29 L697.91,510.67 L695.01,509.04 L692.13,507.41 L689.26,505.78 L686.41,504.16 L683.58,502.53 L680.76,500.90 L677.96,499.27 L675.18,497.65 L672.41,496.02 L669.66,494.39 L666.93,492.76 L664.22,491.14 L661.52,489.51 L658.85,487.88 L656.19,486.25 L653.55,484.63 L650.93,483.00 L648.33,481.37 L645.74,479.75 L643.18,478.12 L640.64,476.49 L638.11,474.86 L635.61,473.24 L633.13,471.61 L630.67,469.98 L628.22,468.35 L625.80,466.73 L623.40,465.10 L621.03,463.47 L618.67,461.84 L616.33,460.22 L614.02,458.59 L611.73,456.96 L609.46,455.33 L607.21,453.70 L604.99,452.08 L602.78,450.45 L600.60,448.82 L598.45,447.19 L596.31,445.57 L594.20,443.94 L592.12,442.31 L590.05,440.69 L588.01,439.06 L586.00,437.43 L584.01,435.80 L582.04,434.18 L580.10,432.55 L578.18,430.92 L576.28,429.29 L574.42,427.66 L572.57,426.04 L570.75,424.41 L568.96,422.78 L567.19,421.15 L565.45,419.53 L563.73,417.90 L562.04,416.27 L560.37,414.64 L558.73,413.02 L557.12,411.39 L555.53,409.76 L553.97,408.13 L552.44,406.51 L550.93,404.88 L549.45,403.25 L548.00,401.62 L546.57,400.00 L545.17,398.37 L543.80,396.74 L542.45,395.12 L541.13,393.49 L539.84,391.86 L538.58,390.23 L537.34,388.61 L536.14,386.98 L534.96,385.35 L533.80,383.72 L532.68,382.10 L531.58,380.47 L530.52,378.84 L529.48,377.21 L528.47,375.58 L527.49,373.96 L526.53,372.33 L525.61,370.70 L524.71,369.07 L523.84,367.45 L523.00,365.82 L522.19,364.19 L521.41,362.56 L520.66,360.94 L519.94,359.31 L519.24,357.68 L518.58,356.06 L517.94,354.43 L517.33,352.80 L516.76,351.17 L516.21,349.55 L515.69,347.92 L515.20,346.29 L514.74,344.66 L514.31,343.04 L513.91,341.41 L513.54,339.78 L513.20,338.15 L512.89,336.52 L512.60,334.90 L512.35,333.27 L512.13,331.64 L511.94,330.01 L511.77,328.39 L511.64,326.76 L511.53,325.13 L511.46,323.50 L511.41,321.88 L511.40,320.25 L511.41,318.62 L511.46,317.00 L511.53,315.37 L511.64,313.74 L511.77,312.11 L511.94,310.49 L512.13,308.86 L512.35,307.23 L512.60,305.60 L512.89,303.98 L513.20,302.35 L513.54,300.72 L513.91,299.09 L514.31,297.46 L514.74,295.84 L515.20,294.21 L515.69,292.58 L516.21,290.95 L516.76,289.33 L517.33,287.70 L517.94,286.07 L518.58,284.44 L519.24,282.82 L519.94,281.19 L520.66,279.56 L521.41,277.94 L522.19,276.31 L523.00,274.68 L523.84,273.05 L524.71,271.43 L525.61,269.80 L526.53,268.17 L527.49,266.54 L528.47,264.92 L529.48,263.29 L530.52,261.66 L531.58,260.03 L532.68,258.40 L533.80,256.78 L534.96,255.15 L536.14,253.52 L537.34,251.89 L538.58,250.27 L539.84,248.64 L541.13,247.01 L542.45,245.38 L543.80,243.76 L545.17,242.13 L546.57,240.50 L548.00,238.88 L549.45,237.25 L550.93,235.62 L552.44,233.99 L553.97,232.37 L555.53,230.74 L557.12,229.11 L558.73,227.48 L560.37,225.86 L562.04,224.23 L563.73,222.60 L565.45,220.97 L567.19,219.34 L568.96,217.72 L570.75,216.09 L572.57,214.46 L574.42,212.84 L576.28,211.21 L578.18,209.58 L580.10,207.95 L582.04,206.32 L584.01,204.70 L586.00,203.07 L588.01,201.44 L590.05,199.81 L592.12,198.19 L594.20,196.56 L596.31,194.93 L598.45,193.31 L600.60,191.68 L602.78,190.05 L604.99,188.42 L607.21,186.80 L609.46,185.17 L611.73,183.54 L614.02,181.91 L616.33,180.28 L618.67,178.66 L621.03,177.03 L623.40,175.40 L625.80,173.78 L628.22,172.15 L630.67,170.52 L633.13,168.89 L635.61,167.27 L638.11,165.64 L640.64,164.01 L643.18,162.38 L645.74,160.75 L648.33,159.13 L650.93,157.50 L653.55,155.87 L656.19,154.25 L658.85,152.62 L661.52,150.99 L664.22,149.36 L666.93,147.74 L669.66,146.11 L672.41,144.48 L675.18,142.85 L677.96,141.22 L680.76,139.60 L683.58,137.97 L686.41,136.34 L689.26,134.72 L692.13,133.09 L695.01,131.46 L697.91,129.83 L700.83,128.21 L703.76,126.58 L706.70,124.95 L709.66,123.32 L712.63,121.69 L715.62,120.07 L718.62,118.44 L721.64,116.81 L724.67,115.19 L727.72,113.56 L730.77,111.93 L733.84,110.30 L736.93,108.68 L740.02,107.05 L743.13,105.42 L746.25,103.79 L749.38,102.17 L752.52,100.54 L755.68,98.91 L758.84,97.28 L762.02,95.66 L765.21,94.03 L768.41,92.40 L771.62,90.77 L774.83,89.15 L778.06,87.52 L781.30,85.89 L784.54,84.26 L787.80,82.64 L791.06,81.01 L794.34,79.38 L797.62,77.75 L800.91,76.12 L804.20,74.50 L807.51,72.87 L810.82,71.24 L814.13,69.62 L817.46,67.99 L820.79,66.36 L824.13,64.73 L827.47,63.11 L830.82,61.48 L834.17,59.85 L837.53,58.22 L840.90,56.60 L844.27,54.97 L847.64,53.34 L851.02,51.71 L854.40,50.09 L857.78,48.46 L861.17,46.83 L864.56,45.20 L867.96,43.57 L871.35,41.95 L874.75,40.32 L878.15,38.69 L881.56,37.06 L884.96,35.44 L888.37,33.81 L891.78,32.18 L895.18,30.56 L898.59,28.93 L902.00,27.30 M902.00,613.20 L898.17,611.57 L894.33,609.94 L890.50,608.32 L886.66,606.69 L882.83,605.06 L879.00,603.43 L875.17,601.81 L871.35,600.18 L867.52,598.55 L863.70,596.92 L859.88,595.30 L856.07,593.67 L852.26,592.04 L848.45,590.41 L844.64,588.79 L840.84,587.16 L837.05,585.53 L833.26,583.90 L829.47,582.28 L825.69,580.65 L821.92,579.02 L818.15,577.39 L814.39,575.77 L810.64,574.14 L806.89,572.51 L803.15,570.88 L799.42,569.26 L795.69,567.63 L791.98,566.00 L788.27,564.38 L784.57,562.75 L780.88,561.12 L777.20,559.49 L773.52,557.87 L769.86,556.24 L766.21,554.61 L762.57,552.98 L758.94,551.36 L755.32,549.73 L751.71,548.10 L748.11,546.47 L744.52,544.85 L740.95,543.22 L737.39,541.59 L733.84,539.96 L730.30,538.34 L726.78,536.71 L723.27,535.08 L719.77,533.45 L716.29,531.83 L712.82,530.20 L709.37,528.57 L705.93,526.94 L702.51,525.32 L699.10,523.69 L695.70,522.06 L692.32,520.43 L688.96,518.81 L685.62,517.18 L682.29,515.55 L678.97,513.92 L675.68,512.29 L672.40,510.67 L669.14,509.04 L665.90,507.41 L662.67,505.78 L659.47,504.16 L656.28,502.53 L653.11,500.90 L649.96,499.27 L646.82,497.65 L643.71,496.02 L640.62,494.39 L637.55,492.76 L634.50,491.14 L631.46,489.51 L628.45,487.88 L625.46,486.25 L622.49,484.63 L619.54,483.00 L616.62,481.37 L613.71,479.75 L610.83,478.12 L607.97,476.49 L605.13,474.86 L602.31,473.24 L599.52,471.61 L596.75,469.98 L594.00,468.35 L591.28,466.73 L588.58,465.10 L585.90,463.47 L583.25,461.84 L580.62,460.22 L578.02,458.59 L575.44,456.96 L572.89,455.33 L570.36,453.70 L567.86,452.08 L565.38,450.45 L562.93,448.82 L560.50,447.19 L558.10,445.57 L555.73,443.94 L553.38,442.31 L551.06,440.69 L548.77,439.06 L546.50,437.43 L544.26,435.80 L542.04,434.18 L539.86,432.55 L537.70,430.92 L535.57,429.29 L533.47,427.66 L531.39,426.04 L529.35,424.41 L527.33,422.78 L525.34,421.15 L523.38,419.53 L521.45,417.90 L519.54,416.27 L517.67,414.64 L515.83,413.02 L514.01,411.39 L512.23,409.76 L510.47,408.13 L508.74,406.51 L507.05,404.88 L505.38,403.25 L503.75,401.62 L502.14,400.00 L500.57,398.37 L499.02,396.74 L497.51,395.12 L496.02,393.49 L494.57,391.86 L493.15,390.23 L491.76,388.61 L490.40,386.98 L489.08,385.35 L487.78,383.72 L486.52,382.10 L485.28,380.47 L484.08,378.84 L482.91,377.21 L481.78,375.58 L480.67,373.96 L479.60,372.33 L478.56,370.70 L477.55,369.07 L476.57,367.45 L475.63,365.82 L474.72,364.19 L473.84,362.56 L472.99,360.94 L472.18,359.31 L471.40,357.68 L470.65,356.06 L469.93,354.43 L469.25,352.80 L468.60,351.17 L467.99,349.55 L467.40,347.92 L466.85,346.29 L466.33,344.66 L465.85,343.04 L465.40,341.41 L464.98,339.78 L464.60,338.15 L464.25,336.52 L463.93,334.90 L463.65,333.27 L463.39,331.64 L463.18,330.01 L462.99,328.39 L462.84,326.76 L462.73,325.13 L462.64,323.50 L462.59,321.88 L462.57,320.25 L462.59,318.62 L462.64,317.00 L462.73,315.37 L462.84,313.74 L462.99,312.11 L463.18,310.49 L463.39,308.86 L463.65,307.23 L463.93,305.60 L464.25,303.98 L464.60,302.35 L464.98,300.72 L465.40,299.09 L465.85,297.46 L466.33,295.84 L466.85,294.21 L467.40,292.58 L467.99,290.95 L468.60,289.33 L469.25,287.70 L469.93,286.07 L470.65,284.44 L471.40,282.82 L472.18,281.19 L472.99,279.56 L473.84,277.94 L474.72,276.31 L475.63,274.68 L476.57,273.05 L477.55,271.43 L478.56,269.80 L479.60,268.17 L480.67,266.54 L481.78,264.92 L482.91,263.29 L484.08,261.66 L485.28,260.03 L486.52,258.40 L487.78,256.78 L489.08,255.15 L490.40,253.52 L491.76,251.89 L493.15,250.27 L494.57,248.64 L496.02,247.01 L497.51,245.38 L499.02,243.76 L500.57,242.13 L502.14,240.50 L503.75,238.88 L505.38,237.25 L507.05,235.62 L508.74,233.99 L510.47,232.37 L512.23,230.74 L514.01,229.11 L515.83,227.48 L517.67,225.86 L519.54,224.23 L521.45,222.60 L523.38,220.97 L525.34,219.34 L527.33,217.72 L529.35,216.09 L531.39,214.46 L533.47,212.84 L535.57,211.21 L537.70,209.58 L539.86,207.95 L542.04,206.32 L544.26,204.70 L546.50,203.07 L548.77,201.44 L551.06,199.81 L553.38,198.19 L555.73,196.56 L558.10,194.93 L560.50,193.31 L562.93,191.68 L565.38,190.05 L567.86,188.42 L570.36,186.80 L572.89,185.17 L575.44,183.54 L578.02,181.91 L580.62,180.28 L583.25,178.66 L585.90,177.03 L588.58,175.40 L591.28,173.78 L594.00,172.15 L596.75,170.52 L599.52,168.89 L602.31,167.27 L605.13,165.64 L607.97,164.01 L610.83,162.38 L613.71,160.75 L616.62,159.13 L619.54,157.50 L622.49,155.87 L625.46,154.25 L628.45,152.62 L631.46,150.99 L634.50,149.36 L637.55,147.74 L640.62,146.11 L643.71,144.48 L646.82,142.85 L649.96,141.22 L653.11,139.60 L656.28,137.97 L659.47,136.34 L662.67,134.72 L665.90,133.09 L669.14,131.46 L672.40,129.83 L675.68,128.21 L678.97,126.58 L682.29,124.95 L685.62,123.32 L688.96,121.69 L692.32,120.07 L695.70,118.44 L699.10,116.81 L702.51,115.19 L705.93,113.56 L709.37,111.93 L712.82,110.30 L716.29,108.68 L719.77,107.05 L723.27,105.42 L726.78,103.79 L730.30,102.17 L733.84,100.54 L737.39,98.91 L740.95,97.28 L744.52,95.66 L748.11,94.03 L751.71,92.40 L755.32,90.77 L758.94,89.15 L762.57,87.52 L766.21,85.89 L769.86,84.26 L773.52,82.64 L777.20,81.01 L780.88,79.38 L784.57,77.75 L788.27,76.12 L791.98,74.50 L795.69,72.87 L799.42,71.24 L803.15,69.62 L806.89,67.99 L810.64,66.36 L814.39,64.73 L818.15,63.11 L821.92,61.48 L825.69,59.85 L829.47,58.22 L833.26,56.60 L837.05,54.97 L840.84,53.34 L844.64,51.71 L848.45,50.09 L852.26,48.46 L856.07,46.83 L859.88,45.20 L863.70,43.57 L867.52,41.95 L871.35,40.32 L875.17,38.69 L879.00,37.06 L882.83,35.44 L886.66,33.81 L890.50,32.18 L894.33,30.56 L898.17,28.93 L902.00,27.30 M902.00,613.20 L897.74,611.57 L893.48,609.94 L889.22,608.32 L884.96,606.69 L880.70,605.06 L876.45,603.43 L872.19,601.81 L867.94,600.18 L863.69,598.55 L859.45,596.92 L855.20,595.30 L850.96,593.67 L846.73,592.04 L842.50,590.41 L838.27,588.79 L834.05,587.16 L829.83,585.53 L825.62,583.90 L821.42,582.28 L817.22,580.65 L813.02,579.02 L808.84,577.39 L804.66,575.77 L800.49,574.14 L796.32,572.51 L792.17,570.88 L788.02,569.26 L783.88,567.63 L779.75,566.00 L775.63,564.38 L771.52,562.75 L767.42,561.12 L763.33,559.49 L759.25,557.87 L755.18,556.24 L751.12,554.61 L747.08,552.98 L743.04,551.36 L739.02,549.73 L735.01,548.10 L731.01,546.47 L727.03,544.85 L723.06,543.22 L719.10,541.59 L715.15,539.96 L711.23,538.34 L707.31,536.71 L703.41,535.08 L699.53,533.45 L695.66,531.83 L691.80,530.20 L687.97,528.57 L684.14,526.94 L680.34,525.32 L676.55,523.69 L672.78,522.06 L669.03,520.43 L665.29,518.81 L661.57,517.18 L657.88,515.55 L654.19,513.92 L650.53,512.29 L646.89,510.67 L643.27,509.04 L639.66,507.41 L636.08,505.78 L632.52,504.16 L628.97,502.53 L625.45,500.90 L621.95,499.27 L618.47,497.65 L615.01,496.02 L611.58,494.39 L608.16,492.76 L604.77,491.14 L601.40,489.51 L598.06,487.88 L594.73,486.25 L591.43,484.63 L588.16,483.00 L584.91,481.37 L581.68,479.75 L578.48,478.12 L575.30,476.49 L572.14,474.86 L569.01,473.24 L565.91,471.61 L562.83,469.98 L559.78,468.35 L556.76,466.73 L553.76,465.10 L550.78,463.47 L547.84,461.84 L544.92,460.22 L542.02,458.59 L539.16,456.96 L536.32,455.33 L533.51,453.70 L530.73,452.08 L527.98,450.45 L525.25,448.82 L522.56,447.19 L519.89,445.57 L517.25,443.94 L514.65,442.31 L512.07,440.69 L509.52,439.06 L507.00,437.43 L504.51,435.80 L502.05,434.18 L499.62,432.55 L497.22,430.92 L494.86,429.29 L492.52,427.66 L490.21,426.04 L487.94,424.41 L485.70,422.78 L483.49,421.15 L481.31,419.53 L479.16,417.90 L477.05,416.27 L474.97,414.64 L472.92,413.02 L470.90,411.39 L468.92,409.76 L466.97,408.13 L465.05,406.51 L463.16,404.88 L461.31,403.25 L459.50,401.62 L457.71,400.00 L455.96,398.37 L454.25,396.74 L452.56,395.12 L450.92,393.49 L449.30,391.86 L447.72,390.23 L446.18,388.61 L444.67,386.98 L443.20,385.35 L441.76,383.72 L440.35,382.10 L438.98,380.47 L437.65,378.84 L436.35,377.21 L435.08,375.58 L433.86,373.96 L432.66,372.33 L431.51,370.70 L430.39,369.07 L429.30,367.45 L428.25,365.82 L427.24,364.19 L426.26,362.56 L425.32,360.94 L424.42,359.31 L423.55,357.68 L422.72,356.06 L421.93,354.43 L421.17,352.80 L420.45,351.17 L419.76,349.55 L419.11,347.92 L418.50,346.29 L417.93,344.66 L417.39,343.04 L416.89,341.41 L416.42,339.78 L416.00,338.15 L415.61,336.52 L415.26,334.90 L414.94,333.27 L414.66,331.64 L414.42,330.01 L414.21,328.39 L414.05,326.76 L413.92,325.13 L413.82,323.50 L413.77,321.88 L413.75,320.25 L413.77,318.62 L413.82,317.00 L413.92,315.37 L414.05,313.74 L414.21,312.11 L414.42,310.49 L414.66,308.86 L414.94,307.23 L415.26,305.60 L415.61,303.98 L416.00,302.35 L416.42,300.72 L416.89,299.09 L417.39,297.46 L417.93,295.84 L418.50,294.21 L419.11,292.58 L419.76,290.95 L420.45,289.33 L421.17,287.70 L421.93,286.07 L422.72,284.44 L423.55,282.82 L424.42,281.19 L425.32,279.56 L426.26,277.94 L427.24,276.31 L428.25,274.68 L429.30,273.05 L430.39,271.43 L431.51,269.80 L432.66,268.17 L433.86,266.54 L435.08,264.92 L436.35,263.29 L437.65,261.66 L438.98,260.03 L440.35,258.40 L441.76,256.78 L443.20,255.15 L444.67,253.52 L446.18,251.89 L447.72,250.27 L449.30,248.64 L450.92,247.01 L452.56,245.38 L454.25,243.76 L455.96,242.13 L457.71,240.50 L459.50,238.88 L461.31,237.25 L463.16,235.62 L465.05,233.99 L466.97,232.37 L468.92,230.74 L470.90,229.11 L472.92,227.48 L474.97,225.86 L477.05,224.23 L479.16,222.60 L481.31,220.97 L483.49,219.34 L485.70,217.72 L487.94,216.09 L490.21,214.46 L492.52,212.84 L494.86,211.21 L497.22,209.58 L499.62,207.95 L502.05,206.32 L504.51,204.70 L507.00,203.07 L509.52,201.44 L512.07,199.81 L514.65,198.19 L517.25,196.56 L519.89,194.93 L522.56,193.31 L525.25,191.68 L527.98,190.05 L530.73,188.42 L533.51,186.80 L536.32,185.17 L539.16,183.54 L542.02,181.91 L544.92,180.28 L547.84,178.66 L550.78,177.03 L553.76,175.40 L556.76,173.78 L559.78,172.15 L562.83,170.52 L565.91,168.89 L569.01,167.27 L572.14,165.64 L575.30,164.01 L578.48,162.38 L581.68,160.75 L584.91,159.13 L588.16,157.50 L591.43,155.87 L594.73,154.25 L598.06,152.62 L601.40,150.99 L604.77,149.36 L608.16,147.74 L611.58,146.11 L615.01,144.48 L618.47,142.85 L621.95,141.22 L625.45,139.60 L628.97,137.97 L632.52,136.34 L636.08,134.72 L639.66,133.09 L643.27,131.46 L646.89,129.83 L650.53,128.21 L654.19,126.58 L657.88,124.95 L661.57,123.32 L665.29,121.69 L669.03,120.07 L672.78,118.44 L676.55,116.81 L680.34,115.19 L684.14,113.56 L687.97,111.93 L691.80,110.30 L695.66,108.68 L699.53,107.05 L703.41,105.42 L707.31,103.79 L711.23,102.17 L715.15,100.54 L719.10,98.91 L723.06,97.28 L727.03,95.66 L731.01,94.03 L735.01,92.40 L739.02,90.77 L743.04,89.15 L747.08,87.52 L751.12,85.89 L755.18,84.26 L759.25,82.64 L763.33,81.01 L767.42,79.38 L771.52,77.75 L775.63,76.12 L779.75,74.50 L783.88,72.87 L788.02,71.24 L792.17,69.62 L796.32,67.99 L800.49,66.36 L804.66,64.73 L808.84,63.11 L813.02,61.48 L817.22,59.85 L821.42,58.22 L825.62,56.60 L829.83,54.97 L834.05,53.34 L838.27,51.71 L842.50,50.09 L846.73,48.46 L850.96,46.83 L855.20,45.20 L859.45,43.57 L863.69,41.95 L867.94,40.32 L872.19,38.69 L876.45,37.06 L880.70,35.44 L884.96,33.81 L889.22,32.18 L893.48,30.56 L897.74,28.93 L902.00,27.30 M902.00,613.20 L897.31,611.57 L892.63,609.94 L887.94,608.32 L883.26,606.69 L878.57,605.06 L873.89,603.43 L869.21,601.81 L864.54,600.18 L859.86,598.55 L855.19,596.92 L850.52,595.30 L845.86,593.67 L841.20,592.04 L836.55,590.41 L831.90,588.79 L827.25,587.16 L822.62,585.53 L817.98,583.90 L813.36,582.28 L808.74,580.65 L804.13,579.02 L799.52,577.39 L794.92,575.77 L790.34,574.14 L785.76,572.51 L781.18,570.88 L776.62,569.26 L772.07,567.63 L767.53,566.00 L762.99,564.38 L758.47,562.75 L753.96,561.12 L749.46,559.49 L744.97,557.87 L740.50,556.24 L736.03,554.61 L731.58,552.98 L727.15,551.36 L722.72,549.73 L718.31,548.10 L713.91,546.47 L709.53,544.85 L705.16,543.22 L700.81,541.59 L696.47,539.96 L692.15,538.34 L687.84,536.71 L683.55,535.08 L679.28,533.45 L675.02,531.83 L670.78,530.20 L666.56,528.57 L662.36,526.94 L658.17,525.32 L654.01,523.69 L649.86,522.06 L645.73,520.43 L641.62,518.81 L637.53,517.18 L633.46,515.55 L629.41,513.92 L625.39,512.29 L621.38,510.67 L617.39,509.04 L613.43,507.41 L609.49,505.78 L605.57,504.16 L601.67,502.53 L597.80,500.90 L593.95,499.27 L590.12,497.65 L586.32,496.02 L582.54,494.39 L578.78,492.76 L575.05,491.14 L571.34,489.51 L567.66,487.88 L564.01,486.25 L560.38,484.63 L556.77,483.00 L553.20,481.37 L549.65,479.75 L546.12,478.12 L542.63,476.49 L539.16,474.86 L535.72,473.24 L532.30,471.61 L528.92,469.98 L525.56,468.35 L522.23,466.73 L518.93,465.10 L515.66,463.47 L512.42,461.84 L509.21,460.22 L506.03,458.59 L502.88,456.96 L499.75,455.33 L496.66,453.70 L493.60,452.08 L490.58,450.45 L487.58,448.82 L484.61,447.19 L481.68,445.57 L478.78,443.94 L475.91,442.31 L473.07,440.69 L470.27,439.06 L467.50,437.43 L464.76,435.80 L462.05,434.18 L459.38,432.55 L456.74,430.92 L454.14,429.29 L451.57,427.66 L449.04,426.04 L446.53,424.41 L444.07,422.78 L441.64,421.15 L439.24,419.53 L436.88,417.90 L434.55,416.27 L432.26,414.64 L430.01,413.02 L427.79,411.39 L425.61,409.76 L423.46,408.13 L421.35,406.51 L419.28,404.88 L417.24,403.25 L415.24,401.62 L413.28,400.00 L411.36,398.37 L409.47,396.74 L407.62,395.12 L405.81,393.49 L404.03,391.86 L402.30,390.23 L400.60,388.61 L398.94,386.98 L397.31,385.35 L395.73,383.72 L394.19,382.10 L392.68,380.47 L391.21,378.84 L389.78,377.21 L388.39,375.58 L387.04,373.96 L385.73,372.33 L384.46,370.70 L383.23,369.07 L382.03,367.45 L380.88,365.82 L379.76,364.19 L378.69,362.56 L377.66,360.94 L376.66,359.31 L375.71,357.68 L374.79,356.06 L373.92,354.43 L373.08,352.80 L372.29,351.17 L371.54,349.55 L370.82,347.92 L370.15,346.29 L369.52,344.66 L368.93,343.04 L368.38,341.41 L367.87,339.78 L367.40,338.15 L366.97,336.52 L366.58,334.90 L366.23,333.27 L365.93,331.64 L365.66,330.01 L365.44,328.39 L365.25,326.76 L365.11,325.13 L365.01,323.50 L364.95,321.88 L364.93,320.25 L364.95,318.62 L365.01,317.00 L365.11,315.37 L365.25,313.74 L365.44,312.11 L365.66,310.49 L365.93,308.86 L366.23,307.23 L366.58,305.60 L366.97,303.98 L367.40,302.35 L367.87,300.72 L368.38,299.09 L368.93,297.46 L369.52,295.84 L370.15,294.21 L370.82,292.58 L371.54,290.95 L372.29,289.33 L373.08,287.70 L373.92,286.07 L374.79,284.44 L375.71,282.82 L376.66,281.19 L377.66,279.56 L378.69,277.94 L379.76,276.31 L380.88,274.68 L382.03,273.05 L383.23,271.43 L384.46,269.80 L385.73,268.17 L387.04,266.54 L388.39,264.92 L389.78,263.29 L391.21,261.66 L392.68,260.03 L394.19,258.40 L395.73,256.78 L397.31,255.15 L398.94,253.52 L400.60,251.89 L402.30,250.27 L404.03,248.64 L405.81,247.01 L407.62,245.38 L409.47,243.76 L411.36,242.13 L413.28,240.50 L415.24,238.88 L417.24,237.25 L419.28,235.62 L421.35,233.99 L423.46,232.37 L425.61,230.74 L427.79,229.11 L430.01,227.48 L432.26,225.86 L434.55,224.23 L436.88,222.60 L439.24,220.97 L441.64,219.34 L444.07,217.72 L446.53,216.09 L449.04,214.46 L451.57,212.84 L454.14,211.21 L456.74,209.58 L459.38,207.95 L462.05,206.32 L464.76,204.70 L467.50,203.07 L470.27,201.44 L473.07,199.81 L475.91,198.19 L478.78,196.56 L481.68,194.93 L484.61,193.31 L487.58,191.68 L490.58,190.05 L493.60,188.42 L496.66,186.80 L499.75,185.17 L502.88,183.54 L506.03,181.91 L509.21,180.28 L512.42,178.66 L515.66,177.03 L518.93,175.40 L522.23,173.78 L525.56,172.15 L528.92,170.52 L532.30,168.89 L535.72,167.27 L539.16,165.64 L542.63,164.01 L546.12,162.38 L549.65,160.75 L553.20,159.13 L556.77,157.50 L560.38,155.87 L564.01,154.25 L567.66,152.62 L571.34,150.99 L575.05,149.36 L578.78,147.74 L582.54,146.11 L586.32,144.48 L590.12,142.85 L593.95,141.22 L597.80,139.60 L601.67,137.97 L605.57,136.34 L609.49,134.72 L613.43,133.09 L617.39,131.46 L621.38,129.83 L625.39,128.21 L629.41,126.58 L633.46,124.95 L637.53,123.32 L641.62,121.69 L645.73,120.07 L649.86,118.44 L654.01,116.81 L658.17,115.19 L662.36,113.56 L666.56,111.93 L670.78,110.30 L675.02,108.68 L679.28,107.05 L683.55,105.42 L687.84,103.79 L692.15,102.17 L696.47,100.54 L700.81,98.91 L705.16,97.28 L709.53,95.66 L713.91,94.03 L718.31,92.40 L722.72,90.77 L727.15,89.15 L731.58,87.52 L736.03,85.89 L740.50,84.26 L744.97,82.64 L749.46,81.01 L753.96,79.38 L758.47,77.75 L762.99,76.12 L767.53,74.50 L772.07,72.87 L776.62,71.24 L781.18,69.62 L785.76,67.99 L790.34,66.36 L794.92,64.73 L799.52,63.11 L804.13,61.48 L808.74,59.85 L813.36,58.22 L817.98,56.60 L822.62,54.97 L827.25,53.34 L831.90,51.71 L836.55,50.09 L841.20,48.46 L845.86,46.83 L850.52,45.20 L855.19,43.57 L859.86,41.95 L864.54,40.32 L869.21,38.69 L873.89,37.06 L878.57,35.44 L883.26,33.81 L887.94,32.18 L892.63,30.56 L897.31,28.93 L902.00,27.30 M902.00,613.20 L896.89,611.57 L891.77,609.94 L886.66,608.32 L881.55,606.69 L876.44,605.06 L871.34,603.43 L866.23,601.81 L861.13,600.18 L856.03,598.55 L850.94,596.92 L845.84,595.30 L840.76,593.67 L835.67,592.04 L830.60,590.41 L825.52,588.79 L820.46,587.16 L815.40,585.53 L810.35,583.90 L805.30,582.28 L800.26,580.65 L795.23,579.02 L790.21,577.39 L785.19,575.77 L780.18,574.14 L775.19,572.51 L770.20,570.88 L765.22,569.26 L760.26,567.63 L755.30,566.00 L750.36,564.38 L745.43,562.75 L740.50,561.12 L735.60,559.49 L730.70,557.87 L725.82,556.24 L720.95,554.61 L716.09,552.98 L711.25,551.36 L706.42,549.73 L701.61,548.10 L696.81,546.47 L692.03,544.85 L687.27,543.22 L682.52,541.59 L677.79,539.96 L673.07,538.34 L668.37,536.71 L663.69,535.08 L659.03,533.45 L654.39,531.83 L649.76,530.20 L645.16,528.57 L640.57,526.94 L636.01,525.32 L631.46,523.69 L626.94,522.06 L622.43,520.43 L617.95,518.81 L613.49,517.18 L609.05,515.55 L604.63,513.92 L600.24,512.29 L595.87,510.67 L591.52,509.04 L587.20,507.41 L582.90,505.78 L578.62,504.16 L574.37,502.53 L570.14,500.90 L565.94,499.27 L561.77,497.65 L557.62,496.02 L553.49,494.39 L549.40,492.76 L545.33,491.14 L541.28,489.51 L537.27,487.88 L533.28,486.25 L529.32,484.63 L525.39,483.00 L521.49,481.37 L517.62,479.75 L513.77,478.12 L509.96,476.49 L506.17,474.86 L502.42,473.24 L498.69,471.61 L495.00,469.98 L491.34,468.35 L487.71,466.73 L484.11,465.10 L480.54,463.47 L477.00,461.84 L473.50,460.22 L470.03,458.59 L466.59,456.96 L463.19,455.33 L459.82,453.70 L456.48,452.08 L453.17,450.45 L449.91,448.82 L446.67,447.19 L443.47,445.57 L440.30,443.94 L437.17,442.31 L434.08,440.69 L431.02,439.06 L428.00,437.43 L425.01,435.80 L422.06,434.18 L419.14,432.55 L416.27,430.92 L413.43,429.29 L410.62,427.66 L407.86,426.04 L405.13,424.41 L402.44,422.78 L399.79,421.15 L397.17,419.53 L394.60,417.90 L392.06,416.27 L389.56,414.64 L387.10,413.02 L384.68,411.39 L382.30,409.76 L379.96,408.13 L377.66,406.51 L375.40,404.88 L373.18,403.25 L370.99,401.62 L368.85,400.00 L366.75,398.37 L364.69,396.74 L362.68,395.12 L360.70,393.49 L358.76,391.86 L356.87,390.23 L355.02,388.61 L353.20,386.98 L351.43,385.35 L349.71,383.72 L348.02,382.10 L346.38,380.47 L344.78,378.84 L343.22,377.21 L341.70,375.58 L340.23,373.96 L338.80,372.33 L337.41,370.70 L336.06,369.07 L334.76,367.45 L333.50,365.82 L332.29,364.19 L331.12,362.56 L329.99,360.94 L328.90,359.31 L327.86,357.68 L326.86,356.06 L325.91,354.43 L325.00,352.80 L324.14,351.17 L323.31,349.55 L322.54,347.92 L321.80,346.29 L321.11,344.66 L320.47,343.04 L319.87,341.41 L319.31,339.78 L318.80,338.15 L318.33,336.52 L317.91,334.90 L317.53,333.27 L317.19,331.64 L316.90,330.01 L316.66,328.39 L316.46,326.76 L316.30,325.13 L316.19,323.50 L316.12,321.88 L316.10,320.25 L316.12,318.62 L316.19,317.00 L316.30,315.37 L316.46,313.74 L316.66,312.11 L316.90,310.49 L317.19,308.86 L317.53,307.23 L317.91,305.60 L318.33,303.98 L318.80,302.35 L319.31,300.72 L319.87,299.09 L320.47,297.46 L321.11,295.84 L321.80,294.21 L322.54,292.58 L323.31,290.95 L324.14,289.33 L325.00,287.70 L325.91,286.07 L326.86,284.44 L327.86,282.82 L328.90,281.19 L329.99,279.56 L331.12,277.94 L332.29,276.31 L333.50,274.68 L334.76,273.05 L336.06,271.43 L337.41,269.80 L338.80,268.17 L340.23,266.54 L341.70,264.92 L343.22,263.29 L344.78,261.66 L346.38,260.03 L348.02,258.40 L349.71,256.78 L351.43,255.15 L353.20,253.52 L355.02,251.89 L356.87,250.27 L358.76,248.64 L360.70,247.01 L362.68,245.38 L364.69,243.76 L366.75,242.13 L368.85,240.50 L370.99,238.88 L373.18,237.25 L375.40,235.62 L377.66,233.99 L379.96,232.37 L382.30,230.74 L384.68,229.11 L387.10,227.48 L389.56,225.86 L392.06,224.23 L394.60,222.60 L397.17,220.97 L399.79,219.34 L402.44,217.72 L405.13,216.09 L407.86,214.46 L410.62,212.84 L413.43,211.21 L416.27,209.58 L419.14,207.95 L422.06,206.32 L425.01,204.70 L428.00,203.07 L431.02,201.44 L434.08,199.81 L437.17,198.19 L440.30,196.56 L443.47,194.93 L446.67,193.31 L449.91,191.68 L453.17,190.05 L456.48,188.42 L459.82,186.80 L463.19,185.17 L466.59,183.54 L470.03,181.91 L473.50,180.28 L477.00,178.66 L480.54,177.03 L484.11,175.40 L487.71,173.78 L491.34,172.15 L495.00,170.52 L498.69,168.89 L502.42,167.27 L506.17,165.64 L509.96,164.01 L513.77,162.38 L517.62,160.75 L521.49,159.13 L525.39,157.50 L529.32,155.87 L533.28,154.25 L537.27,152.62 L541.28,150.99 L545.33,149.36 L549.40,147.74 L553.49,146.11 L557.62,144.48 L561.77,142.85 L565.94,141.22 L570.14,139.60 L574.37,137.97 L578.62,136.34 L582.90,134.72 L587.20,133.09 L591.52,131.46 L595.87,129.83 L600.24,128.21 L604.63,126.58 L609.05,124.95 L613.49,123.32 L617.95,121.69 L622.43,120.07 L626.94,118.44 L631.46,116.81 L636.01,115.19 L640.57,113.56 L645.16,111.93 L649.76,110.30 L654.39,108.68 L659.03,107.05 L663.69,105.42 L668.37,103.79 L673.07,102.17 L677.79,100.54 L682.52,98.91 L687.27,97.28 L692.03,95.66 L696.81,94.03 L701.61,92.40 L706.42,90.77 L711.25,89.15 L716.09,87.52 L720.95,85.89 L725.82,84.26 L730.70,82.64 L735.60,81.01 L740.50,79.38 L745.43,77.75 L750.36,76.12 L755.30,74.50 L760.26,72.87 L765.22,71.24 L770.20,69.62 L775.19,67.99 L780.18,66.36 L785.19,64.73 L790.21,63.11 L795.23,61.48 L800.26,59.85 L805.30,58.22 L810.35,56.60 L815.40,54.97 L820.46,53.34 L825.52,51.71 L830.60,50.09 L835.67,48.46 L840.76,46.83 L845.84,45.20 L850.94,43.57 L856.03,41.95 L861.13,40.32 L866.23,38.69 L871.34,37.06 L876.44,35.44 L881.55,33.81 L886.66,32.18 L891.77,30.56 L896.89,28.93 L902.00,27.30" fill="none" stroke="#6a6a6a" stroke-width="2.08" stroke-dasharray="2.08 3.44"/>
<path d="M750.36,564 H1053.64 M609.05,516 H1194.95 M487.71,467 H1316.29 M394.60,418 H1409.40 M336.06,369 H1467.94 M316.10,320 H1487.90 M336.06,271 H1467.94 M394.60,223 H1409.40 M487.71,174 H1316.29 M609.05,125 H1194.95 M750.36,76 H1053.64" fill="none" stroke="#6a6a6a" stroke-width="2" stroke-dasharray="2.08 3.44"/>
<text x="316.5" y="330.2" font-size="11" fill="#8c8c8c" text-anchor="middle">+180<tspan font-size="8" dx="3.2" dy="-3.5">°</tspan></text>
<text x="414.1" y="330.2" font-size="11" fill="#8c8c8c" text-anchor="middle">+150<tspan font-size="8" dx="3.2" dy="-3.5">°</tspan></text>
<text x="511.8" y="330.2" font-size="11" fill="#8c8c8c" text-anchor="middle">+120<tspan font-size="8" dx="3.2" dy="-3.5">°</tspan></text>
<text x="609.4" y="330.2" font-size="11" fill="#8c8c8c" text-anchor="middle">+90<tspan font-size="8" dx="3.2" dy="-3.5">°</tspan></text>
<text x="707.1" y="330.2" font-size="11" fill="#8c8c8c" text-anchor="middle">+60<tspan font-size="8" dx="3.2" dy="-3.5">°</tspan></text>
<text x="804.7" y="330.2" font-size="11" fill="#8c8c8c" text-anchor="middle">+30<tspan font-size="8" dx="3.2" dy="-3.5">°</tspan></text>
<text x="902.4" y="330.2" font-size="11" fill="#8c8c8c" text-anchor="middle">+0<tspan font-size="8" dx="3.2" dy="-3.5">°</tspan></text>
<text x="1000.0" y="330.2" font-size="11" fill="#8c8c8c" text-anchor="middle">+330<tspan font-size="8" dx="3.2" dy="-3.5">°</tspan></text>
<text x="1097.6" y="330.2" font-size="11" fill="#8c8c8c" text-anchor="middle">+300<tspan font-size="8" dx="3.2" dy="-3.5">°</tspan></text>
<text x="1195.3" y="330.2" font-size="11" fill="#8c8c8c" text-anchor="middle">+270<tspan font-size="8" dx="3.2" dy="-3.5">°</tspan></text>
<text x="1292.9" y="330.2" font-size="11" fill="#8c8c8c" text-anchor="middle">+240<tspan font-size="8" dx="3.2" dy="-3.5">°</tspan></text>
<text x="1390.6" y="330.2" font-size="11" fill="#8c8c8c" text-anchor="middle">+210<tspan font-size="8" dx="3.2" dy="-3.5">°</tspan></text>
<text x="1488.2" y="330.2" font-size="11" fill="#8c8c8c" text-anchor="middle">+180<tspan font-size="8" dx="3.2" dy="-3.5">°</tspan></text>
<text x="902.9" y="25.0" font-size="11" fill="#8c8c8c" text-anchor="middle">+90<tspan font-size="8" dx="3.2" dy="-3.5">°</tspan></text>
<text x="902.9" y="123.0" font-size="11" fill="#8c8c8c" text-anchor="middle">+60<tspan font-size="8" dx="3.2" dy="-3.5">°</tspan></text>
<text x="902.9" y="221.0" font-size="11" fill="#8c8c8c" text-anchor="middle">+30<tspan font-size="8" dx="3.2" dy="-3.5">°</tspan></text>
<text x="902.9" y="428.0" font-size="11" fill="#8c8c8c" text-anchor="middle">−30<tspan font-size="8" dx="3.2" dy="-3.5">°</tspan></text>
<text x="902.9" y="525.7" font-size="11" fill="#8c8c8c" text-anchor="middle">−60<tspan font-size="8" dx="3.2" dy="-3.5">°</tspan></text>
<text x="902.9" y="623.9" font-size="11" fill="#8c8c8c" text-anchor="middle">−90<tspan font-size="8" dx="3.2" dy="-3.5">°</tspan></text>
<path d="M506.9,258.9 C520.8,262.2 565.1,272.0 590.0,279.0 C614.9,286.0 637.3,294.5 656.0,301.0 C674.7,307.5 685.6,311.8 702.2,317.8 C718.8,323.9 733.0,330.4 755.6,337.3 C778.2,344.2 812.7,352.6 837.8,359.4 C862.9,366.2 894.6,374.9 906.0,378.0 M526.7,320.4 C532.6,322.3 546.7,327.4 562.2,332.0 C577.8,336.6 603.3,343.6 620.0,348.0 C636.7,352.4 647.0,355.7 662.2,358.7 C677.4,361.7 694.8,363.7 711.1,366.2 C727.4,368.7 743.5,371.9 760.0,373.8 C776.5,375.7 792.4,377.1 810.0,377.5 C827.6,377.9 849.6,376.9 865.6,376.0 C881.6,375.1 890.5,374.2 906.0,372.0 C921.5,369.8 949.8,364.3 958.6,362.8 M459.5,343.6 C464.8,347.9 477.0,359.4 491.1,369.3 C505.2,379.2 522.9,391.0 544.4,403.1 C565.9,415.2 594.2,430.9 620.0,442.2 C645.8,453.4 675.6,462.6 698.9,470.6 C722.2,478.6 742.4,484.9 760.0,490.0 C777.6,495.1 791.4,499.7 804.4,501.0 C817.4,502.3 823.0,504.0 837.8,498.0 C852.6,492.0 876.1,477.5 893.3,465.0 C910.5,452.5 932.9,429.9 940.8,422.9 M692.7,276.7 C687.3,280.9 669.2,294.9 660.4,301.8 C651.6,308.7 648.1,310.6 640.0,317.8 C631.9,325.0 619.0,337.8 612.0,345.0 C605.0,352.2 600.2,358.6 597.8,361.3 M609.6,231.5 C606.9,225.9 599.0,206.4 593.3,197.8 C587.6,189.2 584.5,184.6 575.6,180.0 C566.7,175.4 545.9,171.7 540.0,170.0 M582.4,268.2 C581.9,265.2 580.0,256.7 579.6,250.0 C579.2,243.3 579.6,234.3 580.2,227.8 C580.8,221.3 581.5,218.2 583.3,211.0 C585.1,203.8 588.5,194.7 591.0,184.4 C593.5,174.1 597.2,155.1 598.4,149.2" fill="none" stroke="#8a8a8a" stroke-width="1.2" stroke-dasharray="1.39 2.29" opacity="0.7"/>
<path d="M497.3,256.4 Q498.8,258.4 501.5,258.6 L508.2,259.1" fill="none" stroke="#8c8c8c" stroke-width="1.3"/>
<line x1="507.4" y1="314.6" x2="526.7" y2="320.4" stroke="#8c8c8c" stroke-width="1.3"/>
<line x1="444.4" y1="326.3" x2="459.5" y2="343.6" stroke="#8c8c8c" stroke-width="1.3"/>
<line x1="609.6" y1="231.5" x2="614.5" y2="240" stroke="#8c8c8c" stroke-width="1.3"/>
<line x1="697.6" y1="273.8" x2="692.7" y2="276.7" stroke="#8c8c8c" stroke-width="1.3"/>
<line x1="582.4" y1="268.2" x2="585.6" y2="276.2" stroke="#8c8c8c" stroke-width="1.3"/>
<path d="M610.4,265.5 C650,243 700,214 789,174 M612.7,272 Q700,228 792,208.3 M616.2,252.7 Q680,238 740.7,239.1 M612.7,277.6 Q680,259 756,259.7 M584.2,281.6 Q600,272 622.9,263.3" fill="none" stroke="#2ab07f" stroke-width="1.5" stroke-dasharray="1.5 2.5"/>
<path d="M789,174 Q795,171.5 802.9,169.1 M792,208.3 Q800,206.8 812,206 M740.7,239.1 Q748,239.6 754,240 M756,259.7 Q775,260 795,261 M584.2,281.6 Q572,288 562,295.8" fill="none" stroke="#2ab07f" stroke-width="2"/>
<rect x="801.8" y="168.0" width="2.2" height="2.2" fill="#ff6347"/>
<rect x="810.9" y="204.9" width="2.2" height="2.2" fill="#ff6347"/>
<rect x="752.9" y="238.9" width="2.2" height="2.2" fill="#ff6347"/>
<rect x="793.9" y="259.9" width="2.2" height="2.2" fill="#ff6347"/>
<rect x="560.9" y="294.7" width="2.2" height="2.2" fill="#ff6347"/>
<ellipse cx="611.6" cy="271" rx="31" ry="19.3" transform="rotate(-39.4 611.6 271)" fill="none" stroke="#2fbc88" stroke-width="2.3"/>
<path d="M613.1,252.7 h6.2 M616.2,249.6 v6.2" stroke="#ff0000" stroke-width="1.5"/>
<path d="M607.3,265.5 h6.2 M610.4,262.4 v6.2" stroke="#ff0000" stroke-width="1.5"/>
<path d="M609.6,277.6 h6.2 M612.7,274.5 v6.2" stroke="#ff0000" stroke-width="1.5"/>
<text x="611.3" y="273.6" font-size="11" fill="#fff" text-anchor="middle">ORI</text>
<text class="mono" x="315" y="0.00" font-size="13.93" fill="#fff" style="font-family:'Liberation Mono',monospace" transform="translate(0 29.80) scale(1 1.08)">BR0021</text>
<text class="mono" x="315" y="0.00" font-size="13.93" fill="#fff" style="font-family:'Liberation Mono',monospace" transform="translate(0 42.90) scale(1 1.08)">Beg: 20251017 01:40:20 (sol = 203.59°)</text>
<text class="mono" x="315" y="0.00" font-size="13.93" fill="#fff" style="font-family:'Liberation Mono',monospace" transform="translate(0 56.60) scale(1 1.08)">End: 20251017 07:56:10 (sol = 203.85°)</text>
<text class="mono" x="315" y="0.00" font-size="13.93" fill="#fff" style="font-family:'Liberation Mono',monospace" transform="translate(0 69.20) scale(1 1.08)">--------------------------------------</text>
<text class="mono" x="315" y="0.00" font-size="13.93" fill="#fff" style="font-family:'Liberation Mono',monospace" transform="translate(0 82.00) scale(1 1.08)">...: 6</text>
<text class="mono" x="315" y="0.00" font-size="13.93" fill="#fff" style="font-family:'Liberation Mono',monospace" transform="translate(0 95.10) scale(1 1.08)">ORI: 5</text>
<text x="0" y="0" font-size="31" fill="#555555" text-anchor="end" transform="translate(149.1 642.79) rotate(-90) scale(0.8381 1)">APR</text>
<text x="0" y="0" font-size="31" fill="#555555" text-anchor="end" transform="translate(293.9 644.88) rotate(-90) scale(0.8694 1)">MAY</text>
<text x="0" y="0" font-size="31" fill="#555555" text-anchor="end" transform="translate(435.9 641.08) rotate(-90) scale(0.8228 1)">JUN</text>
<text x="0" y="0" font-size="31" fill="#555555" text-anchor="end" transform="translate(575.9 641.56) rotate(-90) scale(0.7963 1)">JUL</text>
<text x="0" y="0" font-size="31" fill="#555555" text-anchor="end" transform="translate(723.0 642.71) rotate(-90) scale(0.8631 1)">AUG</text>
<text x="0" y="0" font-size="31" fill="#555555" text-anchor="end" transform="translate(872.2 644.02) rotate(-90) scale(0.8017 1)">SEP</text>
<text x="0" y="0" font-size="31" fill="#555555" text-anchor="end" transform="translate(1015.9 644.19) rotate(-90) scale(0.8688 1)">OCT</text>
<text x="0" y="0" font-size="31" fill="#555555" text-anchor="end" transform="translate(1168.9 645.38) rotate(-90) scale(0.8800 1)">NOV</text>
<text x="0" y="0" font-size="31" fill="#555555" text-anchor="end" transform="translate(1318.1 645.14) rotate(-90) scale(0.8565 1)">DEC</text>
<text x="0" y="0" font-size="31" fill="#555555" text-anchor="end" transform="translate(1468.9 641.51) rotate(-90) scale(0.7446 1)">JAN</text>
<text x="0" y="0" font-size="31" fill="#555555" text-anchor="end" transform="translate(1628.1 646.09) rotate(-90) scale(0.8193 1)">FEB</text>
<text x="0" y="0" font-size="31" fill="#555555" text-anchor="end" transform="translate(1766.1 644.76) rotate(-90) scale(0.8667 1)">MAR</text>
<rect x="106.0" y="831.8" width="23.0" height="4" fill="#bddf26"/>
<rect x="165.0" y="831.8" width="180.0" height="4" fill="#bddf26"/>
<rect x="365.8" y="831.8" width="259.2" height="4" fill="#bddf26"/>
<rect x="635.0" y="831.8" width="151.1" height="4" fill="#bddf26"/>
<rect x="807.1" y="831.8" width="91.8" height="4" fill="#bddf26"/>
<rect x="919.9" y="831.8" width="52.9" height="4" fill="#bddf26"/>
<rect x="984.0" y="831.8" width="82.1" height="4" fill="#bddf26"/>
<rect x="1082.0" y="831.8" width="121.0" height="4" fill="#bddf26"/>
<rect x="1244.2" y="831.8" width="81.6" height="4" fill="#bddf26"/>
<rect x="1337.0" y="831.8" width="18.0" height="4" fill="#bddf26"/>
<rect x="1381.2" y="831.8" width="62.6" height="4" fill="#bddf26"/>
<rect x="1459.2" y="831.8" width="52.8" height="4" fill="#bddf26"/>
<rect x="1523.0" y="831.8" width="24.0" height="4" fill="#bddf26"/>
<rect x="1724.0" y="831.8" width="24.0" height="4" fill="#bddf26"/>
<rect x="1758.0" y="831.8" width="24.0" height="4" fill="#bddf26"/>
<rect x="165.0" y="816.0" width="23.0" height="4" fill="#81d34d"/>
<rect x="223.0" y="816.0" width="62.8" height="4" fill="#81d34d"/>
<rect x="312.0" y="816.0" width="28.0" height="4" fill="#81d34d"/>
<rect x="365.8" y="816.0" width="126.2" height="4" fill="#81d34d"/>
<rect x="508.0" y="816.0" width="145.9" height="4" fill="#81d34d"/>
<rect x="704.0" y="816.0" width="33.1" height="4" fill="#81d34d"/>
<rect x="773.0" y="816.0" width="72.0" height="4" fill="#81d34d"/>
<rect x="871.1" y="816.0" width="116.9" height="4" fill="#81d34d"/>
<rect x="1002.9" y="816.0" width="14.2" height="4" fill="#81d34d"/>
<rect x="1062.2" y="816.0" width="150.6" height="4" fill="#81d34d"/>
<rect x="1244.2" y="816.0" width="22.8" height="4" fill="#81d34d"/>
<rect x="1293.3" y="816.0" width="22.5" height="4" fill="#81d34d"/>
<rect x="1342.2" y="816.0" width="22.8" height="4" fill="#81d34d"/>
<rect x="1386.2" y="816.0" width="42.6" height="4" fill="#81d34d"/>
<rect x="1459.2" y="816.0" width="23.8" height="4" fill="#81d34d"/>
<rect x="1548.0" y="816.0" width="23.2" height="4" fill="#81d34d"/>
<rect x="165.0" y="800.0" width="23.0" height="4" fill="#4ec36b"/>
<rect x="258.0" y="800.0" width="229.0" height="4" fill="#4ec36b"/>
<rect x="508.0" y="800.0" width="107.0" height="4" fill="#4ec36b"/>
<rect x="625.9" y="800.0" width="92.1" height="4" fill="#4ec36b"/>
<rect x="728.9" y="800.0" width="97.2" height="4" fill="#4ec36b"/>
<rect x="948.9" y="800.0" width="200.1" height="4" fill="#4ec36b"/>
<rect x="1160.0" y="800.0" width="88.0" height="4" fill="#4ec36b"/>
<rect x="1258.0" y="800.0" width="185.8" height="4" fill="#4ec36b"/>
<rect x="1459.2" y="800.0" width="23.8" height="4" fill="#4ec36b"/>
<rect x="1552.2" y="800.0" width="24.0" height="4" fill="#4ec36b"/>
<rect x="194.0" y="783.0" width="24.0" height="4" fill="#2ab07f"/>
<rect x="320.8" y="783.0" width="186.2" height="4" fill="#2ab07f"/>
<rect x="518.0" y="783.0" width="22.8" height="4" fill="#2ab07f"/>
<rect x="557.0" y="783.0" width="126.2" height="4" fill="#2ab07f"/>
<rect x="807.1" y="783.0" width="23.9" height="4" fill="#2ab07f"/>
<rect x="953.9" y="783.0" width="18.9" height="4" fill="#2ab07f"/>
<rect x="988.0" y="783.0" width="137.0" height="4" fill="#2ab07f"/>
<rect x="1155.0" y="783.0" width="63.0" height="4" fill="#2ab07f"/>
<rect x="1244.2" y="783.0" width="22.8" height="4" fill="#2ab07f"/>
<rect x="1317.2" y="783.0" width="24.0" height="4" fill="#2ab07f"/>
<rect x="1396.2" y="783.0" width="22.6" height="4" fill="#2ab07f"/>
<rect x="1464.2" y="783.0" width="185.8" height="4" fill="#2ab07f"/>
<rect x="341.0" y="766.8" width="29.0" height="4" fill="#1e9b8a"/>
<rect x="410.0" y="766.8" width="38.0" height="4" fill="#1e9b8a"/>
<rect x="469.2" y="766.8" width="22.8" height="4" fill="#1e9b8a"/>
<rect x="527.0" y="766.8" width="18.8" height="4" fill="#1e9b8a"/>
<rect x="562.0" y="766.8" width="28.0" height="4" fill="#1e9b8a"/>
<rect x="616.0" y="766.8" width="33.0" height="4" fill="#1e9b8a"/>
<rect x="959.2" y="766.8" width="28.8" height="4" fill="#1e9b8a"/>
<rect x="1062.2" y="766.8" width="23.7" height="4" fill="#1e9b8a"/>
<rect x="1101.1" y="766.8" width="23.7" height="4" fill="#1e9b8a"/>
<rect x="1160.0" y="766.8" width="33.8" height="4" fill="#1e9b8a"/>
<rect x="1248.0" y="766.8" width="24.0" height="4" fill="#1e9b8a"/>
<rect x="1425.0" y="766.8" width="87.0" height="4" fill="#1e9b8a"/>
<rect x="420.0" y="750.0" width="23.0" height="4" fill="#25858e"/>
<rect x="532.0" y="750.0" width="24.2" height="4" fill="#25858e"/>
<rect x="567.0" y="750.0" width="23.0" height="4" fill="#25858e"/>
<rect x="621.0" y="750.0" width="120.9" height="4" fill="#25858e"/>
<rect x="968.9" y="750.0" width="166.2" height="4" fill="#25858e"/>
<rect x="1185.0" y="750.0" width="161.2" height="4" fill="#25858e"/>
<rect x="1469.2" y="750.0" width="23.8" height="4" fill="#25858e"/>
<rect x="429.2" y="733.8" width="23.8" height="4" fill="#2d708e"/>
<rect x="575.8" y="733.8" width="157.4" height="4" fill="#2d708e"/>
<rect x="993.2" y="733.8" width="111.8" height="4" fill="#2d708e"/>
<rect x="1116.1" y="733.8" width="106.9" height="4" fill="#2d708e"/>
<rect x="1263.0" y="733.8" width="29.0" height="4" fill="#2d708e"/>
<rect x="1489.2" y="733.8" width="22.8" height="4" fill="#2d708e"/>
<rect x="591.2" y="718.0" width="23.8" height="4" fill="#375a8c"/>
<rect x="655.0" y="718.0" width="117.1" height="4" fill="#375a8c"/>
<rect x="1072.0" y="718.0" width="171.0" height="4" fill="#375a8c"/>
<rect x="1263.0" y="718.0" width="24.0" height="4" fill="#375a8c"/>
<rect x="595.9" y="701.0" width="137.3" height="4" fill="#424086"/>
<rect x="1091.3" y="701.0" width="28.7" height="4" fill="#424086"/>
<rect x="1199.2" y="701.0" width="23.8" height="4" fill="#424086"/>
<rect x="1273.0" y="701.0" width="53.2" height="4" fill="#424086"/>
<rect x="1111.2" y="685.0" width="23.9" height="4" fill="#482475"/>
<path d="M74,641.5 V842.5 M218,641.5 V842.5 M365,641.5 V842.5 M505,641.5 V842.5 M650,641.5 V842.5 M797,641.5 V842.5 M940,641.5 V842.5 M1091,641.5 V842.5 M1239,641.5 V842.5 M1394,641.5 V842.5 M1548,641.5 V842.5 M1687,641.5 V842.5" stroke="#c0c0c0" stroke-opacity="0.49" stroke-width="2" stroke-dasharray="2.08 3.37" stroke-dashoffset="-1.3" fill="none"/>
<path d="M1019,641.5 V842.5" stroke="#ff0000" stroke-width="2.2" stroke-dasharray="5.3 2.25" stroke-dashoffset="3.25" fill="none"/>
<text x="117.2" y="832.0" font-size="10.2" fill="#fff" text-anchor="middle">KSE</text>
<text x="254.8" y="832.0" font-size="10.2" fill="#fff" text-anchor="middle">ETA</text>
<text x="494.6" y="832.0" font-size="10.2" fill="#fff" text-anchor="middle">NZC</text>
<text x="710.7" y="832.0" font-size="10.2" fill="#fff" text-anchor="middle">NDA</text>
<text x="852.8" y="832.0" font-size="10.2" fill="#fff" text-anchor="middle">SPE</text>
<text x="945.5" y="832.0" font-size="10.2" fill="#fff" text-anchor="middle">ARD</text>
<text x="1024.7" y="832.0" font-size="10.2" fill="#fff" text-anchor="middle">EGE</text>
<text x="1142.3" y="832.0" font-size="10.2" fill="#fff" text-anchor="middle">NTA</text>
<text x="1284.1" y="832.0" font-size="10.2" fill="#fff" text-anchor="middle">MON</text>
<text x="1343.5" y="832.0" font-size="10.2" fill="#fff" text-anchor="middle">URS</text>
<text x="1412.0" y="832.0" font-size="10.2" fill="#fff" text-anchor="middle">AHY</text>
<text x="1485.6" y="832.0" font-size="10.2" fill="#fff" text-anchor="middle">GUM</text>
<text x="1535.6" y="832.0" font-size="10.2" fill="#fff" text-anchor="middle">QHY</text>
<text x="1736.0" y="832.0" font-size="10.2" fill="#fff" text-anchor="middle">XHE</text>
<text x="1769.5" y="832.0" font-size="10.2" fill="#fff" text-anchor="middle">EVI</text>
<text x="175.4" y="816.2" font-size="10.2" fill="#fff" text-anchor="middle">AVB</text>
<text x="255.0" y="816.2" font-size="10.2" fill="#fff" text-anchor="middle">ELY</text>
<text x="323.8" y="816.2" font-size="10.2" fill="#fff" text-anchor="middle">CAM</text>
<text x="431.8" y="816.2" font-size="10.2" fill="#fff" text-anchor="middle">SSG</text>
<text x="578.6" y="816.2" font-size="10.2" fill="#fff" text-anchor="middle">PCA</text>
<text x="720.8" y="816.2" font-size="10.2" fill="#fff" text-anchor="middle">AUD</text>
<text x="808.2" y="816.2" font-size="10.2" fill="#fff" text-anchor="middle">AUR</text>
<text x="930.9" y="816.2" font-size="10.2" fill="#fff" text-anchor="middle">DSX</text>
<text x="1009.7" y="816.2" font-size="10.2" fill="#fff" text-anchor="middle">OCU</text>
<text x="1137.1" y="816.2" font-size="10.2" fill="#fff" text-anchor="middle">OER</text>
<text x="1254.9" y="816.2" font-size="10.2" fill="#fff" text-anchor="middle">DKD</text>
<text x="1304.2" y="816.2" font-size="10.2" fill="#fff" text-anchor="middle">DSV</text>
<text x="1353.2" y="816.2" font-size="10.2" fill="#fff" text-anchor="middle">ALY</text>
<text x="1407.7" y="816.2" font-size="10.2" fill="#fff" text-anchor="middle">ILE</text>
<text x="1471.8" y="816.2" font-size="10.2" fill="#fff" text-anchor="middle">SCC</text>
<text x="1559.1" y="816.2" font-size="10.2" fill="#fff" text-anchor="middle">FEV</text>
<text x="176.1" y="800.2" font-size="10.2" fill="#fff" text-anchor="middle">LYR</text>
<text x="372.6" y="800.2" font-size="10.2" fill="#fff" text-anchor="middle">JMC</text>
<text x="558.8" y="800.2" font-size="10.2" fill="#fff" text-anchor="middle">JPE</text>
<text x="671.5" y="800.2" font-size="10.2" fill="#fff" text-anchor="middle">PAU</text>
<text x="774.2" y="800.2" font-size="10.2" fill="#fff" text-anchor="middle">NIA</text>
<text x="1049.8" y="800.2" font-size="10.2" fill="#fff" text-anchor="middle">STA</text>
<text x="1205.6" y="800.2" font-size="10.2" fill="#fff" text-anchor="middle">NOO</text>
<text x="1353.5" y="800.2" font-size="10.2" fill="#fff" text-anchor="middle">COM</text>
<text x="1470.6" y="800.2" font-size="10.2" fill="#fff" text-anchor="middle">NCC</text>
<text x="1563.5" y="800.2" font-size="10.2" fill="#fff" text-anchor="middle">FED</text>
<text x="205.2" y="783.2" font-size="10.2" fill="#fff" text-anchor="middle">HVI</text>
<text x="412.0" y="783.2" font-size="10.2" fill="#fff" text-anchor="middle">ARI</text>
<text x="529.9" y="783.2" font-size="10.2" fill="#fff" text-anchor="middle">SZC</text>
<text x="617.7" y="783.2" font-size="10.2" fill="#fff" text-anchor="middle">CAP</text>
<text x="818.4" y="783.2" font-size="10.2" fill="#fff" text-anchor="middle">NUE</text>
<text x="961.3" y="783.2" font-size="10.2" fill="#fff" text-anchor="middle">OCT</text>
<text x="1059.5" y="783.2" font-size="10.2" fill="#fff" text-anchor="middle">ORI</text>
<text x="1186.4" y="783.2" font-size="10.2" fill="#fff" text-anchor="middle">AMO</text>
<text x="1255.3" y="783.2" font-size="10.2" fill="#fff" text-anchor="middle">DPC</text>
<text x="1329.1" y="783.2" font-size="10.2" fill="#fff" text-anchor="middle">XVI</text>
<text x="1407.4" y="783.2" font-size="10.2" fill="#fff" text-anchor="middle">QUA</text>
<text x="1559.6" y="783.2" font-size="10.2" fill="#fff" text-anchor="middle">AAN</text>
<text x="353.0" y="767.0" font-size="10.2" fill="#fff" text-anchor="middle">TAH</text>
<text x="431.2" y="767.0" font-size="10.2" fill="#fff" text-anchor="middle">JEA</text>
<text x="480.2" y="767.0" font-size="10.2" fill="#fff" text-anchor="middle">JIP</text>
<text x="538.8" y="767.0" font-size="10.2" fill="#fff" text-anchor="middle">PPS</text>
<text x="578.7" y="767.0" font-size="10.2" fill="#fff" text-anchor="middle">ZCS</text>
<text x="632.8" y="767.0" font-size="10.2" fill="#fff" text-anchor="middle">GDR</text>
<text x="970.2" y="767.0" font-size="10.2" fill="#fff" text-anchor="middle">DRA</text>
<text x="1073.1" y="767.0" font-size="10.2" fill="#fff" text-anchor="middle">LUM</text>
<text x="1112.6" y="767.0" font-size="10.2" fill="#fff" text-anchor="middle">RPU</text>
<text x="1176.3" y="767.0" font-size="10.2" fill="#fff" text-anchor="middle">THA</text>
<text x="1259.5" y="767.0" font-size="10.2" fill="#fff" text-anchor="middle">PSU</text>
<text x="1470.7" y="767.0" font-size="10.2" fill="#fff" text-anchor="middle">XCB</text>
<text x="431.7" y="750.2" font-size="10.2" fill="#fff" text-anchor="middle">JRC</text>
<text x="544.3" y="750.2" font-size="10.2" fill="#fff" text-anchor="middle">CAN</text>
<text x="577.9" y="750.2" font-size="10.2" fill="#fff" text-anchor="middle">FAN</text>
<text x="681.2" y="750.2" font-size="10.2" fill="#fff" text-anchor="middle">PER</text>
<text x="1048.8" y="750.2" font-size="10.2" fill="#fff" text-anchor="middle">CTA</text>
<text x="1264.4" y="750.2" font-size="10.2" fill="#fff" text-anchor="middle">HYD</text>
<text x="1481.4" y="750.2" font-size="10.2" fill="#fff" text-anchor="middle">XUM</text>
<text x="441.5" y="734.0" font-size="10.2" fill="#fff" text-anchor="middle">COR</text>
<text x="657.2" y="734.0" font-size="10.2" fill="#fff" text-anchor="middle">SDA</text>
<text x="1048.9" y="734.0" font-size="10.2" fill="#fff" text-anchor="middle">LMI</text>
<text x="1166.6" y="734.0" font-size="10.2" fill="#fff" text-anchor="middle">LEO</text>
<text x="1274.8" y="734.0" font-size="10.2" fill="#fff" text-anchor="middle">EHY</text>
<text x="1499.7" y="734.0" font-size="10.2" fill="#fff" text-anchor="middle">ECV</text>
<text x="602.6" y="718.2" font-size="10.2" fill="#fff" text-anchor="middle">JXA</text>
<text x="715.0" y="718.2" font-size="10.2" fill="#fff" text-anchor="middle">KCG</text>
<text x="1156.5" y="718.2" font-size="10.2" fill="#fff" text-anchor="middle">AND</text>
<text x="1274.8" y="718.2" font-size="10.2" fill="#fff" text-anchor="middle">DAD</text>
<text x="666.6" y="701.2" font-size="10.2" fill="#fff" text-anchor="middle">ERI</text>
<text x="1108.4" y="701.2" font-size="10.2" fill="#fff" text-anchor="middle">SLD</text>
<text x="1211.5" y="701.2" font-size="10.2" fill="#fff" text-anchor="middle">ORS</text>
<text x="1298.8" y="701.2" font-size="10.2" fill="#fff" text-anchor="middle">GEM</text>
<text x="1122.9" y="685.2" font-size="10.2" fill="#fff" text-anchor="middle">KUM</text>
<path d="M113.2,833.8 h7.7 M117.0,829.9 v7.7" stroke="#fff" stroke-width="1.8"/>
<path d="M241.2,833.8 h7.7 M245.0,829.9 v7.7" stroke="#fff" stroke-width="1.8"/>
<path d="M510.9,833.8 h7.7 M514.7,829.9 v7.7" stroke="#fff" stroke-width="1.8"/>
<path d="M706.9,833.8 h7.7 M710.8,829.9 v7.7" stroke="#fff" stroke-width="1.8"/>
<path d="M832.9,833.8 h7.7 M836.8,829.9 v7.7" stroke="#fff" stroke-width="1.8"/>
<path d="M962.1,833.8 h7.7 M966.0,829.9 v7.7" stroke="#fff" stroke-width="1.8"/>
<path d="M985.9,833.8 h7.7 M989.7,829.9 v7.7" stroke="#fff" stroke-width="1.8"/>
<path d="M1116.2,833.8 h7.7 M1120.0,829.9 v7.7" stroke="#fff" stroke-width="1.8"/>
<path d="M1294.9,833.8 h7.7 M1298.7,829.9 v7.7" stroke="#fff" stroke-width="1.8"/>
<path d="M1342.0,833.8 h7.7 M1345.8,829.9 v7.7" stroke="#fff" stroke-width="1.8"/>
<path d="M1413.2,833.8 h7.7 M1417.0,829.9 v7.7" stroke="#fff" stroke-width="1.8"/>
<path d="M1482.0,833.8 h7.7 M1485.8,829.9 v7.7" stroke="#fff" stroke-width="1.8"/>
<path d="M1530.9,833.8 h7.7 M1534.7,829.9 v7.7" stroke="#fff" stroke-width="1.8"/>
<path d="M1732.2,833.8 h7.7 M1736.0,829.9 v7.7" stroke="#fff" stroke-width="1.8"/>
<path d="M1766.2,833.8 h7.7 M1770.0,829.9 v7.7" stroke="#fff" stroke-width="1.8"/>
<path d="M172.0,818.0 h7.7 M175.8,814.1 v7.7" stroke="#fff" stroke-width="1.8"/>
<path d="M256.1,818.0 h7.7 M260.0,814.1 v7.7" stroke="#fff" stroke-width="1.8"/>
<path d="M323.1,818.0 h7.7 M327.0,814.1 v7.7" stroke="#fff" stroke-width="1.8"/>
<path d="M436.9,818.0 h7.7 M440.8,814.1 v7.7" stroke="#fff" stroke-width="1.8"/>
<path d="M598.9,818.0 h7.7 M602.8,814.1 v7.7" stroke="#fff" stroke-width="1.8"/>
<path d="M717.0,818.0 h7.7 M720.9,814.1 v7.7" stroke="#fff" stroke-width="1.8"/>
<path d="M792.9,818.0 h7.7 M796.8,814.1 v7.7" stroke="#fff" stroke-width="1.8"/>
<path d="M939.1,818.0 h7.7 M943.0,814.1 v7.7" stroke="#fff" stroke-width="1.8"/>
<path d="M1005.9,818.0 h7.7 M1009.7,814.1 v7.7" stroke="#fff" stroke-width="1.8"/>
<path d="M1153.0,818.0 h7.7 M1156.8,814.1 v7.7" stroke="#fff" stroke-width="1.8"/>
<path d="M1250.9,818.0 h7.7 M1254.7,814.1 v7.7" stroke="#fff" stroke-width="1.8"/>
<path d="M1300.0,818.0 h7.7 M1303.8,814.1 v7.7" stroke="#fff" stroke-width="1.8"/>
<path d="M1349.0,818.0 h7.7 M1352.8,814.1 v7.7" stroke="#fff" stroke-width="1.8"/>
<path d="M1403.2,818.0 h7.7 M1407.0,814.1 v7.7" stroke="#fff" stroke-width="1.8"/>
<path d="M1467.0,818.0 h7.7 M1470.8,814.1 v7.7" stroke="#fff" stroke-width="1.8"/>
<path d="M1555.0,818.0 h7.7 M1558.8,814.1 v7.7" stroke="#fff" stroke-width="1.8"/>
<path d="M174.0,802.0 h7.7 M177.8,798.1 v7.7" stroke="#fff" stroke-width="1.8"/>
<path d="M377.8,802.0 h7.7 M381.7,798.1 v7.7" stroke="#fff" stroke-width="1.8"/>
<path d="M544.9,802.0 h7.7 M548.7,798.1 v7.7" stroke="#fff" stroke-width="1.8"/>
<path d="M682.1,802.0 h7.7 M686.0,798.1 v7.7" stroke="#fff" stroke-width="1.8"/>
<path d="M741.0,802.0 h7.7 M744.9,798.1 v7.7" stroke="#fff" stroke-width="1.8"/>
<path d="M1074.9,802.0 h7.7 M1078.7,798.1 v7.7" stroke="#fff" stroke-width="1.8"/>
<path d="M1217.0,802.0 h7.7 M1220.8,798.1 v7.7" stroke="#fff" stroke-width="1.8"/>
<path d="M1305.0,802.0 h7.7 M1308.8,798.1 v7.7" stroke="#fff" stroke-width="1.8"/>
<path d="M1467.0,802.0 h7.7 M1470.8,798.1 v7.7" stroke="#fff" stroke-width="1.8"/>
<path d="M1559.9,802.0 h7.7 M1563.7,798.1 v7.7" stroke="#fff" stroke-width="1.8"/>
<path d="M202.0,785.0 h7.7 M205.8,781.1 v7.7" stroke="#fff" stroke-width="1.8"/>
<path d="M399.9,785.0 h7.7 M403.8,781.1 v7.7" stroke="#fff" stroke-width="1.8"/>
<path d="M524.9,785.0 h7.7 M528.7,781.1 v7.7" stroke="#fff" stroke-width="1.8"/>
<path d="M638.9,785.0 h7.7 M642.8,781.1 v7.7" stroke="#fff" stroke-width="1.8"/>
<path d="M815.2,785.0 h7.7 M819.1,781.1 v7.7" stroke="#fff" stroke-width="1.8"/>
<path d="M959.1,785.0 h7.7 M963.0,781.1 v7.7" stroke="#fff" stroke-width="1.8"/>
<path d="M1039.9,785.0 h7.7 M1043.7,781.1 v7.7" stroke="#fff" stroke-width="1.8"/>
<path d="M1187.9,785.0 h7.7 M1191.7,781.1 v7.7" stroke="#fff" stroke-width="1.8"/>
<path d="M1250.9,785.0 h7.7 M1254.7,781.1 v7.7" stroke="#fff" stroke-width="1.8"/>
<path d="M1324.9,785.0 h7.7 M1328.7,781.1 v7.7" stroke="#fff" stroke-width="1.8"/>
<path d="M1403.2,785.0 h7.7 M1407.0,781.1 v7.7" stroke="#fff" stroke-width="1.8"/>
<path d="M1545.9,785.0 h7.7 M1549.7,781.1 v7.7" stroke="#fff" stroke-width="1.8"/>
<path d="M355.8,768.8 h7.7 M359.7,764.9 v7.7" stroke="#fff" stroke-width="1.8"/>
<path d="M425.8,768.8 h7.7 M429.7,764.9 v7.7" stroke="#fff" stroke-width="1.8"/>
<path d="M475.8,768.8 h7.7 M479.7,764.9 v7.7" stroke="#fff" stroke-width="1.8"/>
<path d="M534.9,768.8 h7.7 M538.7,764.9 v7.7" stroke="#fff" stroke-width="1.8"/>
<path d="M570.9,768.8 h7.7 M574.7,764.9 v7.7" stroke="#fff" stroke-width="1.8"/>
<path d="M630.8,768.8 h7.7 M634.6,764.9 v7.7" stroke="#fff" stroke-width="1.8"/>
<path d="M973.8,768.8 h7.7 M977.6,764.9 v7.7" stroke="#fff" stroke-width="1.8"/>
<path d="M1070.1,768.8 h7.7 M1073.9,764.9 v7.7" stroke="#fff" stroke-width="1.8"/>
<path d="M1109.0,768.8 h7.7 M1112.8,764.9 v7.7" stroke="#fff" stroke-width="1.8"/>
<path d="M1178.2,768.8 h7.7 M1182.0,764.9 v7.7" stroke="#fff" stroke-width="1.8"/>
<path d="M1255.9,768.8 h7.7 M1259.7,764.9 v7.7" stroke="#fff" stroke-width="1.8"/>
<path d="M1467.0,768.8 h7.7 M1470.8,764.9 v7.7" stroke="#fff" stroke-width="1.8"/>
<path d="M426.9,752.0 h7.7 M430.8,748.1 v7.7" stroke="#fff" stroke-width="1.8"/>
<path d="M539.9,752.0 h7.7 M543.7,748.1 v7.7" stroke="#fff" stroke-width="1.8"/>
<path d="M573.9,752.0 h7.7 M577.8,748.1 v7.7" stroke="#fff" stroke-width="1.8"/>
<path d="M704.0,752.0 h7.7 M707.9,748.1 v7.7" stroke="#fff" stroke-width="1.8"/>
<path d="M1093.9,752.0 h7.7 M1097.7,748.1 v7.7" stroke="#fff" stroke-width="1.8"/>
<path d="M1271.0,752.0 h7.7 M1274.8,748.1 v7.7" stroke="#fff" stroke-width="1.8"/>
<path d="M1477.0,752.0 h7.7 M1480.8,748.1 v7.7" stroke="#fff" stroke-width="1.8"/>
<path d="M436.9,735.8 h7.7 M440.8,731.9 v7.7" stroke="#fff" stroke-width="1.8"/>
<path d="M630.8,735.8 h7.7 M634.6,731.9 v7.7" stroke="#fff" stroke-width="1.8"/>
<path d="M1039.0,735.8 h7.7 M1042.8,731.9 v7.7" stroke="#fff" stroke-width="1.8"/>
<path d="M1168.2,735.8 h7.7 M1172.0,731.9 v7.7" stroke="#fff" stroke-width="1.8"/>
<path d="M1275.0,735.8 h7.7 M1278.8,731.9 v7.7" stroke="#fff" stroke-width="1.8"/>
<path d="M1497.0,735.8 h7.7 M1500.8,731.9 v7.7" stroke="#fff" stroke-width="1.8"/>
<path d="M598.9,720.0 h7.7 M602.8,716.1 v7.7" stroke="#fff" stroke-width="1.8"/>
<path d="M727.0,720.0 h7.7 M730.9,716.1 v7.7" stroke="#fff" stroke-width="1.8"/>
<path d="M1187.9,720.0 h7.7 M1191.7,716.1 v7.7" stroke="#fff" stroke-width="1.8"/>
<path d="M1271.2,720.0 h7.7 M1275.0,716.1 v7.7" stroke="#fff" stroke-width="1.8"/>
<path d="M686.9,703.0 h7.7 M690.8,699.1 v7.7" stroke="#fff" stroke-width="1.8"/>
<path d="M1102.1,703.0 h7.7 M1105.9,699.1 v7.7" stroke="#fff" stroke-width="1.8"/>
<path d="M1207.0,703.0 h7.7 M1210.8,699.1 v7.7" stroke="#fff" stroke-width="1.8"/>
<path d="M1299.9,703.0 h7.7 M1303.7,699.1 v7.7" stroke="#fff" stroke-width="1.8"/>
<path d="M1119.2,687.0 h7.7 M1123.0,683.1 v7.7" stroke="#fff" stroke-width="1.8"/>
<rect x="19.5" y="641.5" width="1766" height="201" fill="none" stroke="#fff" stroke-width="1.1"/>
<line x1="19.8" y1="842.5" x2="19.8" y2="847.4" stroke="#fff" stroke-width="1.1"/>
<text x="19.8" y="862" font-size="14" fill="#fff" text-anchor="middle" textLength="8.2" lengthAdjust="spacingAndGlyphs">0</text>
<line x1="265.0" y1="842.5" x2="265.0" y2="847.4" stroke="#fff" stroke-width="1.1"/>
<text x="265.0" y="862" font-size="14" fill="#fff" text-anchor="middle" textLength="16.4" lengthAdjust="spacingAndGlyphs">50</text>
<line x1="510.2" y1="842.5" x2="510.2" y2="847.4" stroke="#fff" stroke-width="1.1"/>
<text x="510.2" y="862" font-size="14" fill="#fff" text-anchor="middle" textLength="24.6" lengthAdjust="spacingAndGlyphs">100</text>
<line x1="755.5" y1="842.5" x2="755.5" y2="847.4" stroke="#fff" stroke-width="1.1"/>
<text x="755.5" y="862" font-size="14" fill="#fff" text-anchor="middle" textLength="24.6" lengthAdjust="spacingAndGlyphs">150</text>
<line x1="1000.7" y1="842.5" x2="1000.7" y2="847.4" stroke="#fff" stroke-width="1.1"/>
<text x="1000.7" y="862" font-size="14" fill="#fff" text-anchor="middle" textLength="24.6" lengthAdjust="spacingAndGlyphs">200</text>
<line x1="1245.9" y1="842.5" x2="1245.9" y2="847.4" stroke="#fff" stroke-width="1.1"/>
<text x="1245.9" y="862" font-size="14" fill="#fff" text-anchor="middle" textLength="24.6" lengthAdjust="spacingAndGlyphs">250</text>
<line x1="1491.1" y1="842.5" x2="1491.1" y2="847.4" stroke="#fff" stroke-width="1.1"/>
<text x="1491.1" y="862" font-size="14" fill="#fff" text-anchor="middle" textLength="24.6" lengthAdjust="spacingAndGlyphs">300</text>
<line x1="1736.3" y1="842.5" x2="1736.3" y2="847.4" stroke="#fff" stroke-width="1.1"/>
<text x="1736.3" y="862" font-size="14" fill="#fff" text-anchor="middle" textLength="24.6" lengthAdjust="spacingAndGlyphs">350</text>
<text x="902.3" y="882" font-size="14" fill="#fff" text-anchor="middle" textLength="148" lengthAdjust="spacingAndGlyphs">Solar longitude (deg)</text>
</svg></body></html>
